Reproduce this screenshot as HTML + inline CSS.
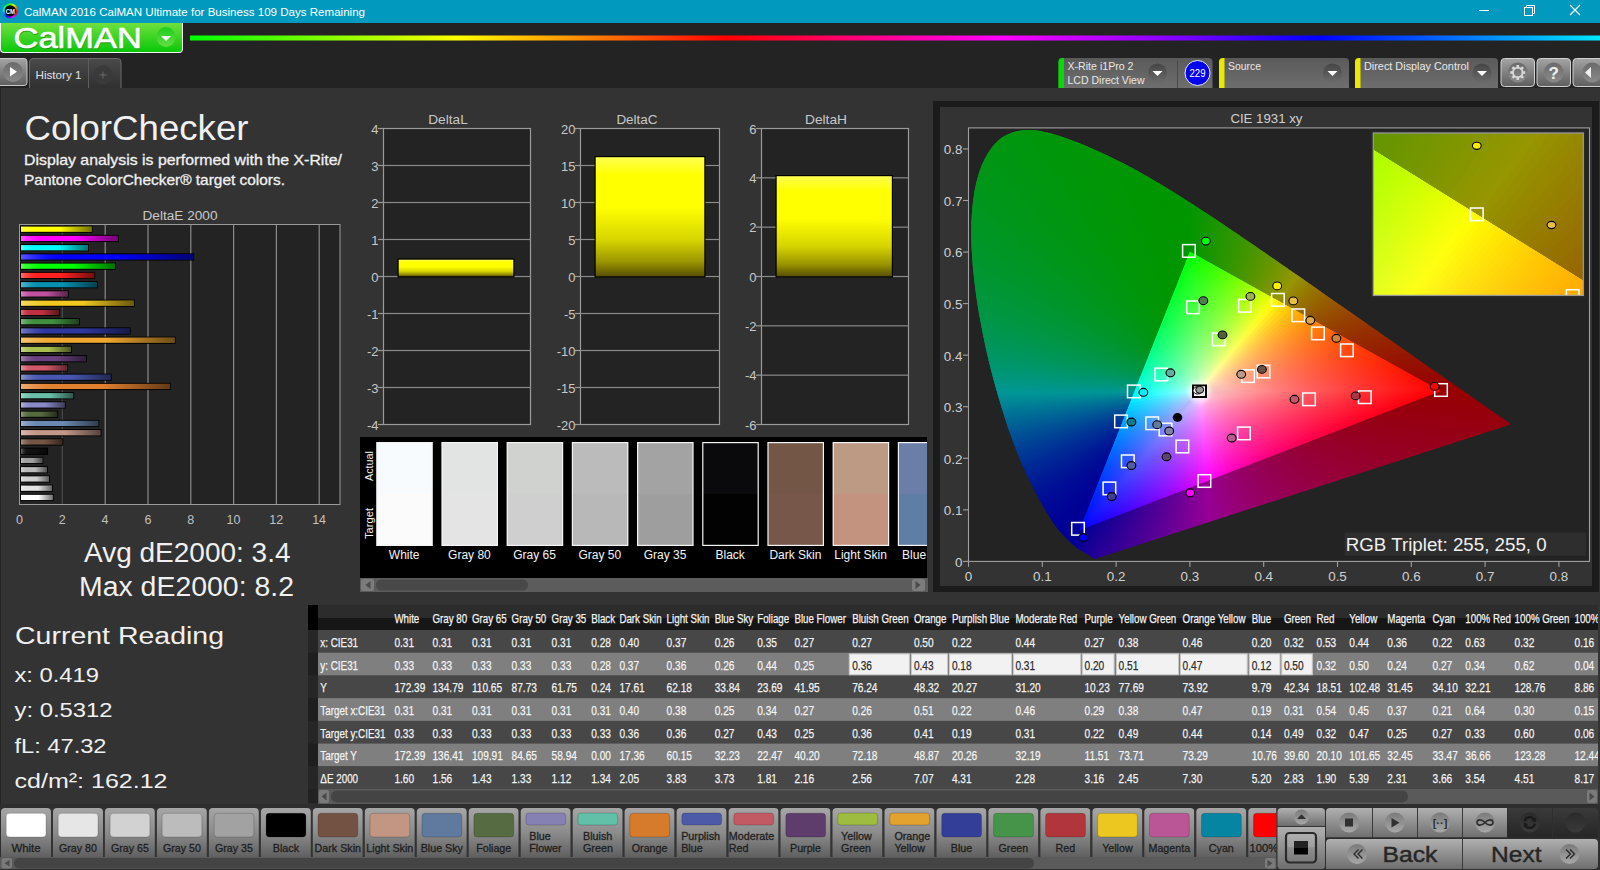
<!DOCTYPE html><html><head><meta charset="utf-8"><style>html,body{margin:0;padding:0;background:#232323;overflow:hidden}svg{display:block;font-family:"Liberation Sans",sans-serif}</style></head><body>
<svg width="1600" height="870" viewBox="0 0 1600 870"><defs><linearGradient id="cmring" x1="0" y1="0" x2="1" y2="1"><stop offset="0" stop-color="#00c000"/><stop offset="0.35" stop-color="#e0e000"/><stop offset="0.6" stop-color="#ff2060"/><stop offset="1" stop-color="#4040ff"/></linearGradient>
<linearGradient id="gbtn" x1="0" y1="0" x2="0" y2="1"><stop offset="0" stop-color="#6fe03f"/><stop offset="1" stop-color="#08c808"/></linearGradient>
<linearGradient id="gdd" x1="0" y1="0" x2="0" y2="1"><stop offset="0" stop-color="#1ccc1c"/><stop offset="1" stop-color="#66de44"/></linearGradient>
<linearGradient id="rainbow" gradientUnits="userSpaceOnUse" x1="190" y1="0" x2="1600" y2="0"><stop offset="0" stop-color="#00ff00"/><stop offset="0.19" stop-color="#ffff00"/><stop offset="0.38" stop-color="#ff0000"/><stop offset="0.575" stop-color="#ff00ff"/><stop offset="0.70" stop-color="#8000ff"/><stop offset="0.80" stop-color="#0000ff"/><stop offset="1" stop-color="#00e8ff"/></linearGradient>
<linearGradient id="btn1" x1="0" y1="0" x2="0" y2="1"><stop offset="0" stop-color="#a4a4a4"/><stop offset="1" stop-color="#5e5e5e"/></linearGradient>
<linearGradient id="btnc" x1="0" y1="0" x2="0" y2="1"><stop offset="0" stop-color="#6a6a6a"/><stop offset="1" stop-color="#8a8a8a"/></linearGradient>
<linearGradient id="tab" x1="0" y1="0" x2="0" y2="1"><stop offset="0" stop-color="#4a4a4a"/><stop offset="1" stop-color="#303030"/></linearGradient>
<linearGradient id="dd" x1="0" y1="0" x2="0" y2="1"><stop offset="0" stop-color="#5a5a5a"/><stop offset="1" stop-color="#6e6e6e"/></linearGradient>
<linearGradient id="ddc" x1="0" y1="0" x2="0" y2="1"><stop offset="0" stop-color="#454545"/><stop offset="1" stop-color="#6a6a6a"/></linearGradient>
<linearGradient id="bg0" x1="0" y1="0" x2="1" y2="0"><stop offset="0" stop-color="#fff" stop-opacity="0.35"/><stop offset="0.25" stop-color="#ffff00" stop-opacity="0"/><stop offset="0.55" stop-color="#000" stop-opacity="0"/><stop offset="1" stop-color="#000" stop-opacity="0.55"/></linearGradient>
<linearGradient id="bg1" x1="0" y1="0" x2="1" y2="0"><stop offset="0" stop-color="#fff" stop-opacity="0.35"/><stop offset="0.25" stop-color="#ff00ff" stop-opacity="0"/><stop offset="0.55" stop-color="#000" stop-opacity="0"/><stop offset="1" stop-color="#000" stop-opacity="0.55"/></linearGradient>
<linearGradient id="bg2" x1="0" y1="0" x2="1" y2="0"><stop offset="0" stop-color="#fff" stop-opacity="0.35"/><stop offset="0.25" stop-color="#00ffff" stop-opacity="0"/><stop offset="0.55" stop-color="#000" stop-opacity="0"/><stop offset="1" stop-color="#000" stop-opacity="0.55"/></linearGradient>
<linearGradient id="bg3" x1="0" y1="0" x2="1" y2="0"><stop offset="0" stop-color="#fff" stop-opacity="0.35"/><stop offset="0.25" stop-color="#0000ff" stop-opacity="0"/><stop offset="0.55" stop-color="#000" stop-opacity="0"/><stop offset="1" stop-color="#000" stop-opacity="0.55"/></linearGradient>
<linearGradient id="bg4" x1="0" y1="0" x2="1" y2="0"><stop offset="0" stop-color="#fff" stop-opacity="0.35"/><stop offset="0.25" stop-color="#00ff00" stop-opacity="0"/><stop offset="0.55" stop-color="#000" stop-opacity="0"/><stop offset="1" stop-color="#000" stop-opacity="0.55"/></linearGradient>
<linearGradient id="bg5" x1="0" y1="0" x2="1" y2="0"><stop offset="0" stop-color="#fff" stop-opacity="0.35"/><stop offset="0.25" stop-color="#ff2020" stop-opacity="0"/><stop offset="0.55" stop-color="#000" stop-opacity="0"/><stop offset="1" stop-color="#000" stop-opacity="0.55"/></linearGradient>
<linearGradient id="bg6" x1="0" y1="0" x2="1" y2="0"><stop offset="0" stop-color="#fff" stop-opacity="0.35"/><stop offset="0.25" stop-color="#0890b0" stop-opacity="0"/><stop offset="0.55" stop-color="#000" stop-opacity="0"/><stop offset="1" stop-color="#000" stop-opacity="0.55"/></linearGradient>
<linearGradient id="bg7" x1="0" y1="0" x2="1" y2="0"><stop offset="0" stop-color="#fff" stop-opacity="0.35"/><stop offset="0.25" stop-color="#c050a0" stop-opacity="0"/><stop offset="0.55" stop-color="#000" stop-opacity="0"/><stop offset="1" stop-color="#000" stop-opacity="0.55"/></linearGradient>
<linearGradient id="bg8" x1="0" y1="0" x2="1" y2="0"><stop offset="0" stop-color="#fff" stop-opacity="0.35"/><stop offset="0.25" stop-color="#f0c820" stop-opacity="0"/><stop offset="0.55" stop-color="#000" stop-opacity="0"/><stop offset="1" stop-color="#000" stop-opacity="0.55"/></linearGradient>
<linearGradient id="bg9" x1="0" y1="0" x2="1" y2="0"><stop offset="0" stop-color="#fff" stop-opacity="0.35"/><stop offset="0.25" stop-color="#c03040" stop-opacity="0"/><stop offset="0.55" stop-color="#000" stop-opacity="0"/><stop offset="1" stop-color="#000" stop-opacity="0.55"/></linearGradient>
<linearGradient id="bg10" x1="0" y1="0" x2="1" y2="0"><stop offset="0" stop-color="#fff" stop-opacity="0.35"/><stop offset="0.25" stop-color="#409040" stop-opacity="0"/><stop offset="0.55" stop-color="#000" stop-opacity="0"/><stop offset="1" stop-color="#000" stop-opacity="0.55"/></linearGradient>
<linearGradient id="bg11" x1="0" y1="0" x2="1" y2="0"><stop offset="0" stop-color="#fff" stop-opacity="0.35"/><stop offset="0.25" stop-color="#3038a0" stop-opacity="0"/><stop offset="0.55" stop-color="#000" stop-opacity="0"/><stop offset="1" stop-color="#000" stop-opacity="0.55"/></linearGradient>
<linearGradient id="bg12" x1="0" y1="0" x2="1" y2="0"><stop offset="0" stop-color="#fff" stop-opacity="0.35"/><stop offset="0.25" stop-color="#f0a830" stop-opacity="0"/><stop offset="0.55" stop-color="#000" stop-opacity="0"/><stop offset="1" stop-color="#000" stop-opacity="0.55"/></linearGradient>
<linearGradient id="bg13" x1="0" y1="0" x2="1" y2="0"><stop offset="0" stop-color="#fff" stop-opacity="0.35"/><stop offset="0.25" stop-color="#a8c050" stop-opacity="0"/><stop offset="0.55" stop-color="#000" stop-opacity="0"/><stop offset="1" stop-color="#000" stop-opacity="0.55"/></linearGradient>
<linearGradient id="bg14" x1="0" y1="0" x2="1" y2="0"><stop offset="0" stop-color="#fff" stop-opacity="0.35"/><stop offset="0.25" stop-color="#6a4080" stop-opacity="0"/><stop offset="0.55" stop-color="#000" stop-opacity="0"/><stop offset="1" stop-color="#000" stop-opacity="0.55"/></linearGradient>
<linearGradient id="bg15" x1="0" y1="0" x2="1" y2="0"><stop offset="0" stop-color="#fff" stop-opacity="0.35"/><stop offset="0.25" stop-color="#d05868" stop-opacity="0"/><stop offset="0.55" stop-color="#000" stop-opacity="0"/><stop offset="1" stop-color="#000" stop-opacity="0.55"/></linearGradient>
<linearGradient id="bg16" x1="0" y1="0" x2="1" y2="0"><stop offset="0" stop-color="#fff" stop-opacity="0.35"/><stop offset="0.25" stop-color="#4858b0" stop-opacity="0"/><stop offset="0.55" stop-color="#000" stop-opacity="0"/><stop offset="1" stop-color="#000" stop-opacity="0.55"/></linearGradient>
<linearGradient id="bg17" x1="0" y1="0" x2="1" y2="0"><stop offset="0" stop-color="#fff" stop-opacity="0.35"/><stop offset="0.25" stop-color="#e08030" stop-opacity="0"/><stop offset="0.55" stop-color="#000" stop-opacity="0"/><stop offset="1" stop-color="#000" stop-opacity="0.55"/></linearGradient>
<linearGradient id="bg18" x1="0" y1="0" x2="1" y2="0"><stop offset="0" stop-color="#fff" stop-opacity="0.35"/><stop offset="0.25" stop-color="#68c0a8" stop-opacity="0"/><stop offset="0.55" stop-color="#000" stop-opacity="0"/><stop offset="1" stop-color="#000" stop-opacity="0.55"/></linearGradient>
<linearGradient id="bg19" x1="0" y1="0" x2="1" y2="0"><stop offset="0" stop-color="#fff" stop-opacity="0.35"/><stop offset="0.25" stop-color="#8a8ac8" stop-opacity="0"/><stop offset="0.55" stop-color="#000" stop-opacity="0"/><stop offset="1" stop-color="#000" stop-opacity="0.55"/></linearGradient>
<linearGradient id="bg20" x1="0" y1="0" x2="1" y2="0"><stop offset="0" stop-color="#fff" stop-opacity="0.35"/><stop offset="0.25" stop-color="#566a40" stop-opacity="0"/><stop offset="0.55" stop-color="#000" stop-opacity="0"/><stop offset="1" stop-color="#000" stop-opacity="0.55"/></linearGradient>
<linearGradient id="bg21" x1="0" y1="0" x2="1" y2="0"><stop offset="0" stop-color="#fff" stop-opacity="0.35"/><stop offset="0.25" stop-color="#6a88b0" stop-opacity="0"/><stop offset="0.55" stop-color="#000" stop-opacity="0"/><stop offset="1" stop-color="#000" stop-opacity="0.55"/></linearGradient>
<linearGradient id="bg22" x1="0" y1="0" x2="1" y2="0"><stop offset="0" stop-color="#fff" stop-opacity="0.35"/><stop offset="0.25" stop-color="#c49888" stop-opacity="0"/><stop offset="0.55" stop-color="#000" stop-opacity="0"/><stop offset="1" stop-color="#000" stop-opacity="0.55"/></linearGradient>
<linearGradient id="bg23" x1="0" y1="0" x2="1" y2="0"><stop offset="0" stop-color="#fff" stop-opacity="0.35"/><stop offset="0.25" stop-color="#775545" stop-opacity="0"/><stop offset="0.55" stop-color="#000" stop-opacity="0"/><stop offset="1" stop-color="#000" stop-opacity="0.55"/></linearGradient>
<linearGradient id="bg24" x1="0" y1="0" x2="1" y2="0"><stop offset="0" stop-color="#fff" stop-opacity="0.35"/><stop offset="0.25" stop-color="#111111" stop-opacity="0"/><stop offset="0.55" stop-color="#000" stop-opacity="0"/><stop offset="1" stop-color="#000" stop-opacity="0.55"/></linearGradient>
<linearGradient id="bg25" x1="0" y1="0" x2="1" y2="0"><stop offset="0" stop-color="#fff" stop-opacity="0.35"/><stop offset="0.25" stop-color="#a0a0a0" stop-opacity="0"/><stop offset="0.55" stop-color="#000" stop-opacity="0"/><stop offset="1" stop-color="#000" stop-opacity="0.55"/></linearGradient>
<linearGradient id="bg26" x1="0" y1="0" x2="1" y2="0"><stop offset="0" stop-color="#fff" stop-opacity="0.35"/><stop offset="0.25" stop-color="#bababa" stop-opacity="0"/><stop offset="0.55" stop-color="#000" stop-opacity="0"/><stop offset="1" stop-color="#000" stop-opacity="0.55"/></linearGradient>
<linearGradient id="bg27" x1="0" y1="0" x2="1" y2="0"><stop offset="0" stop-color="#fff" stop-opacity="0.35"/><stop offset="0.25" stop-color="#d0d0d0" stop-opacity="0"/><stop offset="0.55" stop-color="#000" stop-opacity="0"/><stop offset="1" stop-color="#000" stop-opacity="0.55"/></linearGradient>
<linearGradient id="bg28" x1="0" y1="0" x2="1" y2="0"><stop offset="0" stop-color="#fff" stop-opacity="0.35"/><stop offset="0.25" stop-color="#e4e4e4" stop-opacity="0"/><stop offset="0.55" stop-color="#000" stop-opacity="0"/><stop offset="1" stop-color="#000" stop-opacity="0.55"/></linearGradient>
<linearGradient id="bg29" x1="0" y1="0" x2="1" y2="0"><stop offset="0" stop-color="#fff" stop-opacity="0.35"/><stop offset="0.25" stop-color="#ffffff" stop-opacity="0"/><stop offset="0.55" stop-color="#000" stop-opacity="0"/><stop offset="1" stop-color="#000" stop-opacity="0.55"/></linearGradient>
<linearGradient id="ybar" x1="0" y1="0" x2="0" y2="1"><stop offset="0" stop-color="#ffff50"/><stop offset="0.15" stop-color="#ffff00"/><stop offset="0.42" stop-color="#ffff00"/><stop offset="0.7" stop-color="#d6d400"/><stop offset="0.88" stop-color="#9a9400"/><stop offset="1" stop-color="#585000"/></linearGradient>
<clipPath id="swclip"><rect x="360" y="437" width="567" height="141"/></clipPath>
<clipPath id="locclip"><path d="M1095.0 558.8 L1094.8 558.7 L1094.5 558.5 L1094.1 558.3 L1093.6 558.1 L1093.1 557.8 L1092.6 557.5 L1092.0 557.2 L1091.4 556.7 L1090.7 556.3 L1089.8 555.8 L1088.9 555.2 L1087.9 554.6 L1086.7 553.9 L1085.5 553.1 L1084.1 552.2 L1082.5 551.3 L1080.9 550.4 L1079.0 549.3 L1077.0 547.9 L1074.8 546.0 L1072.1 543.7 L1069.1 540.8 L1065.9 537.8 L1062.9 534.6 L1060.1 531.5 L1057.7 528.7 L1055.7 526.0 L1053.7 523.2 L1051.6 520.1 L1049.4 516.5 L1046.9 512.5 L1044.3 508.2 L1041.6 503.5 L1038.8 498.4 L1035.9 492.8 L1032.8 486.7 L1029.5 480.2 L1026.1 473.2 L1022.6 465.7 L1019.2 457.6 L1015.8 448.9 L1012.3 439.6 L1008.8 429.9 L1005.4 419.6 L1002.0 408.8 L998.6 397.5 L995.2 385.5 L991.9 373.2 L988.7 360.6 L985.8 348.0 L983.1 335.1 L980.6 322.0 L978.2 308.8 L976.2 295.7 L974.6 282.9 L973.2 270.4 L972.2 258.0 L971.5 245.8 L971.2 234.0 L971.4 222.7 L972.0 211.9 L973.0 201.4 L974.5 191.4 L976.4 182.0 L978.8 173.4 L981.6 165.6 L985.0 158.4 L988.7 151.9 L992.8 146.2 L997.2 141.4 L1001.9 137.6 L1006.9 134.7 L1012.3 132.6 L1017.8 131.1 L1023.3 130.2 L1029.0 129.9 L1034.9 130.3 L1040.8 131.3 L1046.8 132.6 L1052.8 134.1 L1058.8 135.7 L1064.8 137.7 L1070.8 139.9 L1076.8 142.3 L1082.7 144.6 L1088.4 146.9 L1094.1 149.4 L1099.7 151.9 L1105.3 154.5 L1110.9 157.2 L1116.4 159.9 L1121.8 162.6 L1127.2 165.5 L1132.6 168.3 L1137.9 171.3 L1143.3 174.3 L1148.7 177.3 L1154.0 180.4 L1159.3 183.6 L1164.7 186.8 L1170.0 190.0 L1175.3 193.3 L1180.5 196.6 L1185.8 200.0 L1191.1 203.3 L1196.4 206.7 L1201.6 210.2 L1206.9 213.6 L1212.2 217.1 L1217.4 220.6 L1222.7 224.1 L1228.0 227.7 L1233.3 231.2 L1238.6 234.8 L1243.8 238.4 L1249.1 242.0 L1254.4 245.6 L1259.6 249.2 L1264.9 252.8 L1270.1 256.5 L1275.4 260.1 L1280.6 263.7 L1285.8 267.3 L1291.1 270.9 L1296.2 274.5 L1301.4 278.1 L1306.6 281.7 L1311.7 285.3 L1316.8 288.8 L1321.9 292.4 L1326.9 295.9 L1331.9 299.4 L1336.9 302.9 L1341.8 306.3 L1346.7 309.7 L1351.6 313.1 L1356.4 316.5 L1361.2 319.8 L1365.9 323.1 L1370.6 326.4 L1375.2 329.6 L1379.7 332.8 L1384.2 335.9 L1388.7 339.0 L1393.0 342.0 L1397.3 345.0 L1401.4 347.9 L1405.6 350.8 L1409.6 353.6 L1413.4 356.3 L1417.2 359.0 L1420.8 361.5 L1424.4 364.0 L1427.8 366.4 L1431.2 368.7 L1434.5 371.1 L1437.8 373.3 L1440.9 375.5 L1443.9 377.6 L1446.9 379.7 L1449.7 381.6 L1452.4 383.5 L1455.0 385.3 L1457.5 387.0 L1459.9 388.7 L1462.2 390.3 L1464.4 391.8 L1466.5 393.3 L1468.5 394.7 L1470.4 396.1 L1472.3 397.3 L1474.0 398.6 L1475.7 399.8 L1477.3 400.9 L1478.8 401.9 L1480.3 403.0 L1481.7 403.9 L1483.0 404.9 L1484.3 405.7 L1485.5 406.6 L1486.7 407.4 L1487.8 408.2 L1488.9 409.0 L1489.9 409.7 L1490.9 410.4 L1491.9 411.1 L1492.8 411.7 L1493.7 412.3 L1494.6 412.9 L1495.4 413.5 L1496.2 414.1 L1497.0 414.6 L1497.7 415.2 L1498.4 415.6 L1499.1 416.1 L1499.8 416.6 L1500.4 417.0 L1501.0 417.4 L1501.5 417.8 L1502.1 418.1 L1502.6 418.5 L1503.0 418.8 L1503.5 419.1 L1503.9 419.4 L1504.3 419.7 L1504.7 420.0 L1505.0 420.2 L1505.4 420.4 L1505.7 420.7 L1506.0 420.9 L1506.2 421.0 L1506.4 421.2 L1506.6 421.3 L1506.9 421.5 L1507.2 421.8 L1507.8 422.2 L1508.6 422.7 L1509.5 423.3 L1510.2 423.8 L1510.7 424.2 Z"/></clipPath>
<linearGradient id="w0" gradientUnits="userSpaceOnUse" x1="1199.27" y1="391.47" x2="1191.99" y2="252.66"><stop offset="0" stop-color="#ffffff"/><stop offset="0.08" stop-color="#c8ffc7"/><stop offset="0.2" stop-color="#9fff9e"/><stop offset="0.35" stop-color="#79ff77"/><stop offset="0.5" stop-color="#59ff57"/><stop offset="0.7" stop-color="#34ff31"/><stop offset="0.85" stop-color="#1bff18"/><stop offset="1.0" stop-color="#04ff00"/></linearGradient>
<linearGradient id="w1" gradientUnits="userSpaceOnUse" x1="1199.27" y1="391.47" x2="1196.17" y2="254.99"><stop offset="0" stop-color="#ffffff"/><stop offset="0.08" stop-color="#caffc7"/><stop offset="0.2" stop-color="#a3ff9e"/><stop offset="0.35" stop-color="#7eff77"/><stop offset="0.5" stop-color="#5fff57"/><stop offset="0.7" stop-color="#3bff31"/><stop offset="0.85" stop-color="#23ff18"/><stop offset="1.0" stop-color="#0cff00"/></linearGradient>
<linearGradient id="w2" gradientUnits="userSpaceOnUse" x1="1199.27" y1="391.47" x2="1200.36" y2="257.31"><stop offset="0" stop-color="#ffffff"/><stop offset="0.08" stop-color="#cbffc7"/><stop offset="0.2" stop-color="#a6ff9e"/><stop offset="0.35" stop-color="#82ff77"/><stop offset="0.5" stop-color="#64ff57"/><stop offset="0.7" stop-color="#42ff31"/><stop offset="0.85" stop-color="#2aff18"/><stop offset="1.0" stop-color="#15ff00"/></linearGradient>
<linearGradient id="w3" gradientUnits="userSpaceOnUse" x1="1199.27" y1="391.47" x2="1204.54" y2="259.63"><stop offset="0" stop-color="#ffffff"/><stop offset="0.08" stop-color="#cdffc7"/><stop offset="0.2" stop-color="#a9ff9e"/><stop offset="0.35" stop-color="#87ff77"/><stop offset="0.5" stop-color="#6aff57"/><stop offset="0.7" stop-color="#49ff31"/><stop offset="0.85" stop-color="#32ff18"/><stop offset="1.0" stop-color="#1dff00"/></linearGradient>
<linearGradient id="w4" gradientUnits="userSpaceOnUse" x1="1199.27" y1="391.47" x2="1208.72" y2="261.96"><stop offset="0" stop-color="#ffffff"/><stop offset="0.08" stop-color="#cfffc7"/><stop offset="0.2" stop-color="#acff9e"/><stop offset="0.35" stop-color="#8cff77"/><stop offset="0.5" stop-color="#70ff57"/><stop offset="0.7" stop-color="#50ff31"/><stop offset="0.85" stop-color="#3aff18"/><stop offset="1.0" stop-color="#26ff00"/></linearGradient>
<linearGradient id="w5" gradientUnits="userSpaceOnUse" x1="1199.27" y1="391.47" x2="1212.90" y2="264.28"><stop offset="0" stop-color="#ffffff"/><stop offset="0.08" stop-color="#d1ffc7"/><stop offset="0.2" stop-color="#b0ff9e"/><stop offset="0.35" stop-color="#91ff77"/><stop offset="0.5" stop-color="#76ff57"/><stop offset="0.7" stop-color="#58ff31"/><stop offset="0.85" stop-color="#43ff18"/><stop offset="1.0" stop-color="#30ff00"/></linearGradient>
<linearGradient id="w6" gradientUnits="userSpaceOnUse" x1="1199.27" y1="391.47" x2="1217.08" y2="266.61"><stop offset="0" stop-color="#ffffff"/><stop offset="0.08" stop-color="#d4ffc7"/><stop offset="0.2" stop-color="#b4ff9e"/><stop offset="0.35" stop-color="#96ff77"/><stop offset="0.5" stop-color="#7dff57"/><stop offset="0.7" stop-color="#5fff31"/><stop offset="0.85" stop-color="#4cff18"/><stop offset="1.0" stop-color="#39ff00"/></linearGradient>
<linearGradient id="w7" gradientUnits="userSpaceOnUse" x1="1199.27" y1="391.47" x2="1221.27" y2="268.93"><stop offset="0" stop-color="#ffffff"/><stop offset="0.08" stop-color="#d6ffc7"/><stop offset="0.2" stop-color="#b8ff9e"/><stop offset="0.35" stop-color="#9bff77"/><stop offset="0.5" stop-color="#83ff57"/><stop offset="0.7" stop-color="#68ff31"/><stop offset="0.85" stop-color="#55ff18"/><stop offset="1.0" stop-color="#43ff00"/></linearGradient>
<linearGradient id="w8" gradientUnits="userSpaceOnUse" x1="1199.27" y1="391.47" x2="1225.45" y2="271.26"><stop offset="0" stop-color="#ffffff"/><stop offset="0.08" stop-color="#d8ffc7"/><stop offset="0.2" stop-color="#bcff9e"/><stop offset="0.35" stop-color="#a1ff77"/><stop offset="0.5" stop-color="#8aff57"/><stop offset="0.7" stop-color="#70ff31"/><stop offset="0.85" stop-color="#5eff18"/><stop offset="1.0" stop-color="#4eff00"/></linearGradient>
<linearGradient id="w9" gradientUnits="userSpaceOnUse" x1="1199.27" y1="391.47" x2="1229.63" y2="273.58"><stop offset="0" stop-color="#ffffff"/><stop offset="0.08" stop-color="#daffc7"/><stop offset="0.2" stop-color="#c0ff9e"/><stop offset="0.35" stop-color="#a6ff77"/><stop offset="0.5" stop-color="#91ff57"/><stop offset="0.7" stop-color="#79ff31"/><stop offset="0.85" stop-color="#68ff18"/><stop offset="1.0" stop-color="#59ff00"/></linearGradient>
<linearGradient id="w10" gradientUnits="userSpaceOnUse" x1="1199.27" y1="391.47" x2="1233.81" y2="275.90"><stop offset="0" stop-color="#ffffff"/><stop offset="0.08" stop-color="#ddffc7"/><stop offset="0.2" stop-color="#c4ff9e"/><stop offset="0.35" stop-color="#acff77"/><stop offset="0.5" stop-color="#99ff57"/><stop offset="0.7" stop-color="#82ff31"/><stop offset="0.85" stop-color="#72ff18"/><stop offset="1.0" stop-color="#64ff00"/></linearGradient>
<linearGradient id="w11" gradientUnits="userSpaceOnUse" x1="1199.27" y1="391.47" x2="1237.99" y2="278.23"><stop offset="0" stop-color="#ffffff"/><stop offset="0.08" stop-color="#e0ffc7"/><stop offset="0.2" stop-color="#c8ff9e"/><stop offset="0.35" stop-color="#b3ff77"/><stop offset="0.5" stop-color="#a1ff57"/><stop offset="0.7" stop-color="#8bff31"/><stop offset="0.85" stop-color="#7dff18"/><stop offset="1.0" stop-color="#70ff00"/></linearGradient>
<linearGradient id="w12" gradientUnits="userSpaceOnUse" x1="1199.27" y1="391.47" x2="1242.17" y2="280.55"><stop offset="0" stop-color="#ffffff"/><stop offset="0.08" stop-color="#e2ffc7"/><stop offset="0.2" stop-color="#cdff9e"/><stop offset="0.35" stop-color="#b9ff77"/><stop offset="0.5" stop-color="#a9ff57"/><stop offset="0.7" stop-color="#95ff31"/><stop offset="0.85" stop-color="#88ff18"/><stop offset="1.0" stop-color="#7cff00"/></linearGradient>
<linearGradient id="w13" gradientUnits="userSpaceOnUse" x1="1199.27" y1="391.47" x2="1246.36" y2="282.88"><stop offset="0" stop-color="#ffffff"/><stop offset="0.08" stop-color="#e5ffc7"/><stop offset="0.2" stop-color="#d2ff9e"/><stop offset="0.35" stop-color="#c0ff77"/><stop offset="0.5" stop-color="#b1ff57"/><stop offset="0.7" stop-color="#a0ff31"/><stop offset="0.85" stop-color="#94ff18"/><stop offset="1.0" stop-color="#89ff00"/></linearGradient>
<linearGradient id="w14" gradientUnits="userSpaceOnUse" x1="1199.27" y1="391.47" x2="1250.54" y2="285.20"><stop offset="0" stop-color="#ffffff"/><stop offset="0.08" stop-color="#e8ffc7"/><stop offset="0.2" stop-color="#d7ff9e"/><stop offset="0.35" stop-color="#c7ff77"/><stop offset="0.5" stop-color="#baff57"/><stop offset="0.7" stop-color="#aaff31"/><stop offset="0.85" stop-color="#a0ff18"/><stop offset="1.0" stop-color="#96ff00"/></linearGradient>
<linearGradient id="w15" gradientUnits="userSpaceOnUse" x1="1199.27" y1="391.47" x2="1254.72" y2="287.53"><stop offset="0" stop-color="#ffffff"/><stop offset="0.08" stop-color="#ebffc7"/><stop offset="0.2" stop-color="#dcff9e"/><stop offset="0.35" stop-color="#cfff77"/><stop offset="0.5" stop-color="#c3ff57"/><stop offset="0.7" stop-color="#b6ff31"/><stop offset="0.85" stop-color="#adff18"/><stop offset="1.0" stop-color="#a4ff00"/></linearGradient>
<linearGradient id="w16" gradientUnits="userSpaceOnUse" x1="1199.27" y1="391.47" x2="1258.90" y2="289.85"><stop offset="0" stop-color="#ffffff"/><stop offset="0.08" stop-color="#eeffc7"/><stop offset="0.2" stop-color="#e2ff9e"/><stop offset="0.35" stop-color="#d6ff77"/><stop offset="0.5" stop-color="#cdff57"/><stop offset="0.7" stop-color="#c2ff31"/><stop offset="0.85" stop-color="#baff18"/><stop offset="1.0" stop-color="#b3ff00"/></linearGradient>
<linearGradient id="w17" gradientUnits="userSpaceOnUse" x1="1199.27" y1="391.47" x2="1263.09" y2="292.17"><stop offset="0" stop-color="#ffffff"/><stop offset="0.08" stop-color="#f2ffc7"/><stop offset="0.2" stop-color="#e8ff9e"/><stop offset="0.35" stop-color="#dfff77"/><stop offset="0.5" stop-color="#d7ff57"/><stop offset="0.7" stop-color="#ceff31"/><stop offset="0.85" stop-color="#c8ff18"/><stop offset="1.0" stop-color="#c2ff00"/></linearGradient>
<linearGradient id="w18" gradientUnits="userSpaceOnUse" x1="1199.27" y1="391.47" x2="1267.27" y2="294.50"><stop offset="0" stop-color="#ffffff"/><stop offset="0.08" stop-color="#f5ffc7"/><stop offset="0.2" stop-color="#eeff9e"/><stop offset="0.35" stop-color="#e7ff77"/><stop offset="0.5" stop-color="#e1ff57"/><stop offset="0.7" stop-color="#dbff31"/><stop offset="0.85" stop-color="#d6ff18"/><stop offset="1.0" stop-color="#d2ff00"/></linearGradient>
<linearGradient id="w19" gradientUnits="userSpaceOnUse" x1="1199.27" y1="391.47" x2="1271.45" y2="296.82"><stop offset="0" stop-color="#ffffff"/><stop offset="0.08" stop-color="#f9ffc7"/><stop offset="0.2" stop-color="#f4ff9e"/><stop offset="0.35" stop-color="#f0ff77"/><stop offset="0.5" stop-color="#edff57"/><stop offset="0.7" stop-color="#e8ff31"/><stop offset="0.85" stop-color="#e6ff18"/><stop offset="1.0" stop-color="#e3ff00"/></linearGradient>
<linearGradient id="w20" gradientUnits="userSpaceOnUse" x1="1199.27" y1="391.47" x2="1275.63" y2="299.15"><stop offset="0" stop-color="#ffffff"/><stop offset="0.08" stop-color="#fdffc7"/><stop offset="0.2" stop-color="#fbff9e"/><stop offset="0.35" stop-color="#faff77"/><stop offset="0.5" stop-color="#f8ff57"/><stop offset="0.7" stop-color="#f7ff31"/><stop offset="0.85" stop-color="#f6ff18"/><stop offset="1.0" stop-color="#f5ff00"/></linearGradient>
<linearGradient id="w21" gradientUnits="userSpaceOnUse" x1="1199.27" y1="391.47" x2="1279.81" y2="301.47"><stop offset="0" stop-color="#ffffff"/><stop offset="0.08" stop-color="#fffdc7"/><stop offset="0.2" stop-color="#fffc9e"/><stop offset="0.35" stop-color="#fffb77"/><stop offset="0.5" stop-color="#fffa57"/><stop offset="0.7" stop-color="#fff831"/><stop offset="0.85" stop-color="#fff818"/><stop offset="1.0" stop-color="#fff700"/></linearGradient>
<linearGradient id="w22" gradientUnits="userSpaceOnUse" x1="1199.27" y1="391.47" x2="1284.00" y2="303.80"><stop offset="0" stop-color="#ffffff"/><stop offset="0.08" stop-color="#fff9c7"/><stop offset="0.2" stop-color="#fff59e"/><stop offset="0.35" stop-color="#fff277"/><stop offset="0.5" stop-color="#ffee57"/><stop offset="0.7" stop-color="#ffeb31"/><stop offset="0.85" stop-color="#ffe818"/><stop offset="1.0" stop-color="#ffe600"/></linearGradient>
<linearGradient id="w23" gradientUnits="userSpaceOnUse" x1="1199.27" y1="391.47" x2="1288.18" y2="306.12"><stop offset="0" stop-color="#ffffff"/><stop offset="0.08" stop-color="#fff6c7"/><stop offset="0.2" stop-color="#ffef9e"/><stop offset="0.35" stop-color="#ffe977"/><stop offset="0.5" stop-color="#ffe457"/><stop offset="0.7" stop-color="#ffde31"/><stop offset="0.85" stop-color="#ffda18"/><stop offset="1.0" stop-color="#ffd600"/></linearGradient>
<linearGradient id="w24" gradientUnits="userSpaceOnUse" x1="1199.27" y1="391.47" x2="1292.36" y2="308.44"><stop offset="0" stop-color="#ffffff"/><stop offset="0.08" stop-color="#fff3c7"/><stop offset="0.2" stop-color="#ffea9e"/><stop offset="0.35" stop-color="#ffe277"/><stop offset="0.5" stop-color="#ffdb57"/><stop offset="0.7" stop-color="#ffd231"/><stop offset="0.85" stop-color="#ffcd18"/><stop offset="1.0" stop-color="#ffc800"/></linearGradient>
<linearGradient id="w25" gradientUnits="userSpaceOnUse" x1="1199.27" y1="391.47" x2="1296.54" y2="310.77"><stop offset="0" stop-color="#ffffff"/><stop offset="0.08" stop-color="#fff0c7"/><stop offset="0.2" stop-color="#ffe59e"/><stop offset="0.35" stop-color="#ffdb77"/><stop offset="0.5" stop-color="#ffd257"/><stop offset="0.7" stop-color="#ffc831"/><stop offset="0.85" stop-color="#ffc118"/><stop offset="1.0" stop-color="#ffbb00"/></linearGradient>
<linearGradient id="w26" gradientUnits="userSpaceOnUse" x1="1199.27" y1="391.47" x2="1300.72" y2="313.09"><stop offset="0" stop-color="#ffffff"/><stop offset="0.08" stop-color="#ffedc7"/><stop offset="0.2" stop-color="#ffe09e"/><stop offset="0.35" stop-color="#ffd477"/><stop offset="0.5" stop-color="#ffca57"/><stop offset="0.7" stop-color="#ffbe31"/><stop offset="0.85" stop-color="#ffb618"/><stop offset="1.0" stop-color="#ffae00"/></linearGradient>
<linearGradient id="w27" gradientUnits="userSpaceOnUse" x1="1199.27" y1="391.47" x2="1304.90" y2="315.42"><stop offset="0" stop-color="#ffffff"/><stop offset="0.08" stop-color="#ffebc7"/><stop offset="0.2" stop-color="#ffdc9e"/><stop offset="0.35" stop-color="#ffce77"/><stop offset="0.5" stop-color="#ffc257"/><stop offset="0.7" stop-color="#ffb531"/><stop offset="0.85" stop-color="#ffac18"/><stop offset="1.0" stop-color="#ffa300"/></linearGradient>
<linearGradient id="w28" gradientUnits="userSpaceOnUse" x1="1199.27" y1="391.47" x2="1309.09" y2="317.74"><stop offset="0" stop-color="#ffffff"/><stop offset="0.08" stop-color="#ffe8c7"/><stop offset="0.2" stop-color="#ffd89e"/><stop offset="0.35" stop-color="#ffc877"/><stop offset="0.5" stop-color="#ffbb57"/><stop offset="0.7" stop-color="#ffac31"/><stop offset="0.85" stop-color="#ffa218"/><stop offset="1.0" stop-color="#ff9800"/></linearGradient>
<linearGradient id="w29" gradientUnits="userSpaceOnUse" x1="1199.27" y1="391.47" x2="1313.27" y2="320.07"><stop offset="0" stop-color="#ffffff"/><stop offset="0.08" stop-color="#ffe6c7"/><stop offset="0.2" stop-color="#ffd49e"/><stop offset="0.35" stop-color="#ffc377"/><stop offset="0.5" stop-color="#ffb557"/><stop offset="0.7" stop-color="#ffa431"/><stop offset="0.85" stop-color="#ff9918"/><stop offset="1.0" stop-color="#ff8f00"/></linearGradient>
<linearGradient id="w30" gradientUnits="userSpaceOnUse" x1="1199.27" y1="391.47" x2="1317.45" y2="322.39"><stop offset="0" stop-color="#ffffff"/><stop offset="0.08" stop-color="#ffe4c7"/><stop offset="0.2" stop-color="#ffd19e"/><stop offset="0.35" stop-color="#ffbe77"/><stop offset="0.5" stop-color="#ffaf57"/><stop offset="0.7" stop-color="#ff9d31"/><stop offset="0.85" stop-color="#ff9118"/><stop offset="1.0" stop-color="#ff8500"/></linearGradient>
<linearGradient id="w31" gradientUnits="userSpaceOnUse" x1="1199.27" y1="391.47" x2="1321.63" y2="324.71"><stop offset="0" stop-color="#ffffff"/><stop offset="0.08" stop-color="#ffe2c7"/><stop offset="0.2" stop-color="#ffcd9e"/><stop offset="0.35" stop-color="#ffba77"/><stop offset="0.5" stop-color="#ffa957"/><stop offset="0.7" stop-color="#ff9631"/><stop offset="0.85" stop-color="#ff8918"/><stop offset="1.0" stop-color="#ff7d00"/></linearGradient>
<linearGradient id="w32" gradientUnits="userSpaceOnUse" x1="1199.27" y1="391.47" x2="1325.82" y2="327.04"><stop offset="0" stop-color="#ffffff"/><stop offset="0.08" stop-color="#ffe1c7"/><stop offset="0.2" stop-color="#ffca9e"/><stop offset="0.35" stop-color="#ffb577"/><stop offset="0.5" stop-color="#ffa457"/><stop offset="0.7" stop-color="#ff8f31"/><stop offset="0.85" stop-color="#ff8218"/><stop offset="1.0" stop-color="#ff7500"/></linearGradient>
<linearGradient id="w33" gradientUnits="userSpaceOnUse" x1="1199.27" y1="391.47" x2="1330.00" y2="329.36"><stop offset="0" stop-color="#ffffff"/><stop offset="0.08" stop-color="#ffdfc7"/><stop offset="0.2" stop-color="#ffc79e"/><stop offset="0.35" stop-color="#ffb177"/><stop offset="0.5" stop-color="#ff9f57"/><stop offset="0.7" stop-color="#ff8931"/><stop offset="0.85" stop-color="#ff7b18"/><stop offset="1.0" stop-color="#ff6d00"/></linearGradient>
<linearGradient id="w34" gradientUnits="userSpaceOnUse" x1="1199.27" y1="391.47" x2="1334.18" y2="331.69"><stop offset="0" stop-color="#ffffff"/><stop offset="0.08" stop-color="#ffddc7"/><stop offset="0.2" stop-color="#ffc59e"/><stop offset="0.35" stop-color="#ffad77"/><stop offset="0.5" stop-color="#ff9a57"/><stop offset="0.7" stop-color="#ff8331"/><stop offset="0.85" stop-color="#ff7418"/><stop offset="1.0" stop-color="#ff6600"/></linearGradient>
<linearGradient id="w35" gradientUnits="userSpaceOnUse" x1="1199.27" y1="391.47" x2="1338.36" y2="334.01"><stop offset="0" stop-color="#ffffff"/><stop offset="0.08" stop-color="#ffdcc7"/><stop offset="0.2" stop-color="#ffc29e"/><stop offset="0.35" stop-color="#ffaa77"/><stop offset="0.5" stop-color="#ff9657"/><stop offset="0.7" stop-color="#ff7e31"/><stop offset="0.85" stop-color="#ff6e18"/><stop offset="1.0" stop-color="#ff5f00"/></linearGradient>
<linearGradient id="w36" gradientUnits="userSpaceOnUse" x1="1199.27" y1="391.47" x2="1342.54" y2="336.34"><stop offset="0" stop-color="#ffffff"/><stop offset="0.08" stop-color="#ffdac7"/><stop offset="0.2" stop-color="#ffc09e"/><stop offset="0.35" stop-color="#ffa677"/><stop offset="0.5" stop-color="#ff9157"/><stop offset="0.7" stop-color="#ff7931"/><stop offset="0.85" stop-color="#ff6818"/><stop offset="1.0" stop-color="#ff5900"/></linearGradient>
<linearGradient id="w37" gradientUnits="userSpaceOnUse" x1="1199.27" y1="391.47" x2="1346.72" y2="338.66"><stop offset="0" stop-color="#ffffff"/><stop offset="0.08" stop-color="#ffd9c7"/><stop offset="0.2" stop-color="#ffbd9e"/><stop offset="0.35" stop-color="#ffa377"/><stop offset="0.5" stop-color="#ff8d57"/><stop offset="0.7" stop-color="#ff7431"/><stop offset="0.85" stop-color="#ff6318"/><stop offset="1.0" stop-color="#ff5300"/></linearGradient>
<linearGradient id="w38" gradientUnits="userSpaceOnUse" x1="1199.27" y1="391.47" x2="1350.91" y2="340.98"><stop offset="0" stop-color="#ffffff"/><stop offset="0.08" stop-color="#ffd8c7"/><stop offset="0.2" stop-color="#ffbb9e"/><stop offset="0.35" stop-color="#ffa077"/><stop offset="0.5" stop-color="#ff8a57"/><stop offset="0.7" stop-color="#ff6f31"/><stop offset="0.85" stop-color="#ff5e18"/><stop offset="1.0" stop-color="#ff4d00"/></linearGradient>
<linearGradient id="w39" gradientUnits="userSpaceOnUse" x1="1199.27" y1="391.47" x2="1355.09" y2="343.31"><stop offset="0" stop-color="#ffffff"/><stop offset="0.08" stop-color="#ffd7c7"/><stop offset="0.2" stop-color="#ffb99e"/><stop offset="0.35" stop-color="#ff9d77"/><stop offset="0.5" stop-color="#ff8657"/><stop offset="0.7" stop-color="#ff6b31"/><stop offset="0.85" stop-color="#ff5918"/><stop offset="1.0" stop-color="#ff4800"/></linearGradient>
<linearGradient id="w40" gradientUnits="userSpaceOnUse" x1="1199.27" y1="391.47" x2="1359.27" y2="345.63"><stop offset="0" stop-color="#ffffff"/><stop offset="0.08" stop-color="#ffd6c7"/><stop offset="0.2" stop-color="#ffb79e"/><stop offset="0.35" stop-color="#ff9b77"/><stop offset="0.5" stop-color="#ff8357"/><stop offset="0.7" stop-color="#ff6731"/><stop offset="0.85" stop-color="#ff5418"/><stop offset="1.0" stop-color="#ff4200"/></linearGradient>
<linearGradient id="w41" gradientUnits="userSpaceOnUse" x1="1199.27" y1="391.47" x2="1363.45" y2="347.96"><stop offset="0" stop-color="#ffffff"/><stop offset="0.08" stop-color="#ffd4c7"/><stop offset="0.2" stop-color="#ffb59e"/><stop offset="0.35" stop-color="#ff9877"/><stop offset="0.5" stop-color="#ff7f57"/><stop offset="0.7" stop-color="#ff6331"/><stop offset="0.85" stop-color="#ff4f18"/><stop offset="1.0" stop-color="#ff3d00"/></linearGradient>
<linearGradient id="w42" gradientUnits="userSpaceOnUse" x1="1199.27" y1="391.47" x2="1367.63" y2="350.28"><stop offset="0" stop-color="#ffffff"/><stop offset="0.08" stop-color="#ffd3c7"/><stop offset="0.2" stop-color="#ffb49e"/><stop offset="0.35" stop-color="#ff9577"/><stop offset="0.5" stop-color="#ff7c57"/><stop offset="0.7" stop-color="#ff5f31"/><stop offset="0.85" stop-color="#ff4b18"/><stop offset="1.0" stop-color="#ff3900"/></linearGradient>
<linearGradient id="w43" gradientUnits="userSpaceOnUse" x1="1199.27" y1="391.47" x2="1371.82" y2="352.60"><stop offset="0" stop-color="#ffffff"/><stop offset="0.08" stop-color="#ffd2c7"/><stop offset="0.2" stop-color="#ffb29e"/><stop offset="0.35" stop-color="#ff9377"/><stop offset="0.5" stop-color="#ff7957"/><stop offset="0.7" stop-color="#ff5b31"/><stop offset="0.85" stop-color="#ff4718"/><stop offset="1.0" stop-color="#ff3400"/></linearGradient>
<linearGradient id="w44" gradientUnits="userSpaceOnUse" x1="1199.27" y1="391.47" x2="1376.00" y2="354.93"><stop offset="0" stop-color="#ffffff"/><stop offset="0.08" stop-color="#ffd2c7"/><stop offset="0.2" stop-color="#ffb09e"/><stop offset="0.35" stop-color="#ff9177"/><stop offset="0.5" stop-color="#ff7657"/><stop offset="0.7" stop-color="#ff5831"/><stop offset="0.85" stop-color="#ff4318"/><stop offset="1.0" stop-color="#ff3000"/></linearGradient>
<linearGradient id="w45" gradientUnits="userSpaceOnUse" x1="1199.27" y1="391.47" x2="1380.18" y2="357.25"><stop offset="0" stop-color="#ffffff"/><stop offset="0.08" stop-color="#ffd1c7"/><stop offset="0.2" stop-color="#ffaf9e"/><stop offset="0.35" stop-color="#ff8f77"/><stop offset="0.5" stop-color="#ff7457"/><stop offset="0.7" stop-color="#ff5531"/><stop offset="0.85" stop-color="#ff4018"/><stop offset="1.0" stop-color="#ff2c00"/></linearGradient>
<linearGradient id="w46" gradientUnits="userSpaceOnUse" x1="1199.27" y1="391.47" x2="1384.36" y2="359.58"><stop offset="0" stop-color="#ffffff"/><stop offset="0.08" stop-color="#ffd0c7"/><stop offset="0.2" stop-color="#ffad9e"/><stop offset="0.35" stop-color="#ff8d77"/><stop offset="0.5" stop-color="#ff7157"/><stop offset="0.7" stop-color="#ff5131"/><stop offset="0.85" stop-color="#ff3c18"/><stop offset="1.0" stop-color="#ff2800"/></linearGradient>
<linearGradient id="w47" gradientUnits="userSpaceOnUse" x1="1199.27" y1="391.47" x2="1388.55" y2="361.90"><stop offset="0" stop-color="#ffffff"/><stop offset="0.08" stop-color="#ffcfc7"/><stop offset="0.2" stop-color="#ffac9e"/><stop offset="0.35" stop-color="#ff8b77"/><stop offset="0.5" stop-color="#ff6f57"/><stop offset="0.7" stop-color="#ff4e31"/><stop offset="0.85" stop-color="#ff3918"/><stop offset="1.0" stop-color="#ff2400"/></linearGradient>
<linearGradient id="w48" gradientUnits="userSpaceOnUse" x1="1199.27" y1="391.47" x2="1392.73" y2="364.23"><stop offset="0" stop-color="#ffffff"/><stop offset="0.08" stop-color="#ffcec7"/><stop offset="0.2" stop-color="#ffaa9e"/><stop offset="0.35" stop-color="#ff8977"/><stop offset="0.5" stop-color="#ff6c57"/><stop offset="0.7" stop-color="#ff4c31"/><stop offset="0.85" stop-color="#ff3518"/><stop offset="1.0" stop-color="#ff2100"/></linearGradient>
<linearGradient id="w49" gradientUnits="userSpaceOnUse" x1="1199.27" y1="391.47" x2="1396.91" y2="366.55"><stop offset="0" stop-color="#ffffff"/><stop offset="0.08" stop-color="#ffcdc7"/><stop offset="0.2" stop-color="#ffa99e"/><stop offset="0.35" stop-color="#ff8777"/><stop offset="0.5" stop-color="#ff6a57"/><stop offset="0.7" stop-color="#ff4931"/><stop offset="0.85" stop-color="#ff3218"/><stop offset="1.0" stop-color="#ff1d00"/></linearGradient>
<linearGradient id="w50" gradientUnits="userSpaceOnUse" x1="1199.27" y1="391.47" x2="1401.09" y2="368.87"><stop offset="0" stop-color="#ffffff"/><stop offset="0.08" stop-color="#ffcdc7"/><stop offset="0.2" stop-color="#ffa89e"/><stop offset="0.35" stop-color="#ff8577"/><stop offset="0.5" stop-color="#ff6857"/><stop offset="0.7" stop-color="#ff4631"/><stop offset="0.85" stop-color="#ff2f18"/><stop offset="1.0" stop-color="#ff1a00"/></linearGradient>
<linearGradient id="w51" gradientUnits="userSpaceOnUse" x1="1199.27" y1="391.47" x2="1405.27" y2="371.20"><stop offset="0" stop-color="#ffffff"/><stop offset="0.08" stop-color="#ffccc7"/><stop offset="0.2" stop-color="#ffa79e"/><stop offset="0.35" stop-color="#ff8377"/><stop offset="0.5" stop-color="#ff6657"/><stop offset="0.7" stop-color="#ff4431"/><stop offset="0.85" stop-color="#ff2c18"/><stop offset="1.0" stop-color="#ff1700"/></linearGradient>
<linearGradient id="w52" gradientUnits="userSpaceOnUse" x1="1199.27" y1="391.47" x2="1409.45" y2="373.52"><stop offset="0" stop-color="#ffffff"/><stop offset="0.08" stop-color="#ffcbc7"/><stop offset="0.2" stop-color="#ffa59e"/><stop offset="0.35" stop-color="#ff8277"/><stop offset="0.5" stop-color="#ff6457"/><stop offset="0.7" stop-color="#ff4131"/><stop offset="0.85" stop-color="#ff2a18"/><stop offset="1.0" stop-color="#ff1400"/></linearGradient>
<linearGradient id="w53" gradientUnits="userSpaceOnUse" x1="1199.27" y1="391.47" x2="1413.64" y2="375.85"><stop offset="0" stop-color="#ffffff"/><stop offset="0.08" stop-color="#ffcbc7"/><stop offset="0.2" stop-color="#ffa49e"/><stop offset="0.35" stop-color="#ff8077"/><stop offset="0.5" stop-color="#ff6257"/><stop offset="0.7" stop-color="#ff3f31"/><stop offset="0.85" stop-color="#ff2718"/><stop offset="1.0" stop-color="#ff1100"/></linearGradient>
<linearGradient id="w54" gradientUnits="userSpaceOnUse" x1="1199.27" y1="391.47" x2="1417.82" y2="378.17"><stop offset="0" stop-color="#ffffff"/><stop offset="0.08" stop-color="#ffcac7"/><stop offset="0.2" stop-color="#ffa39e"/><stop offset="0.35" stop-color="#ff7f77"/><stop offset="0.5" stop-color="#ff6057"/><stop offset="0.7" stop-color="#ff3c31"/><stop offset="0.85" stop-color="#ff2418"/><stop offset="1.0" stop-color="#ff0e00"/></linearGradient>
<linearGradient id="w55" gradientUnits="userSpaceOnUse" x1="1199.27" y1="391.47" x2="1422.00" y2="380.50"><stop offset="0" stop-color="#ffffff"/><stop offset="0.08" stop-color="#ffc9c7"/><stop offset="0.2" stop-color="#ffa29e"/><stop offset="0.35" stop-color="#ff7d77"/><stop offset="0.5" stop-color="#ff5e57"/><stop offset="0.7" stop-color="#ff3a31"/><stop offset="0.85" stop-color="#ff2218"/><stop offset="1.0" stop-color="#ff0b00"/></linearGradient>
<linearGradient id="w56" gradientUnits="userSpaceOnUse" x1="1199.27" y1="391.47" x2="1426.18" y2="382.82"><stop offset="0" stop-color="#ffffff"/><stop offset="0.08" stop-color="#ffc9c7"/><stop offset="0.2" stop-color="#ffa19e"/><stop offset="0.35" stop-color="#ff7c77"/><stop offset="0.5" stop-color="#ff5c57"/><stop offset="0.7" stop-color="#ff3831"/><stop offset="0.85" stop-color="#ff1f18"/><stop offset="1.0" stop-color="#ff0900"/></linearGradient>
<linearGradient id="w57" gradientUnits="userSpaceOnUse" x1="1199.27" y1="391.47" x2="1430.37" y2="385.14"><stop offset="0" stop-color="#ffffff"/><stop offset="0.08" stop-color="#ffc8c7"/><stop offset="0.2" stop-color="#ffa09e"/><stop offset="0.35" stop-color="#ff7a77"/><stop offset="0.5" stop-color="#ff5b57"/><stop offset="0.7" stop-color="#ff3631"/><stop offset="0.85" stop-color="#ff1d18"/><stop offset="1.0" stop-color="#ff0600"/></linearGradient>
<linearGradient id="w58" gradientUnits="userSpaceOnUse" x1="1199.27" y1="391.47" x2="1434.55" y2="387.47"><stop offset="0" stop-color="#ffffff"/><stop offset="0.08" stop-color="#ffc8c7"/><stop offset="0.2" stop-color="#ff9f9e"/><stop offset="0.35" stop-color="#ff7977"/><stop offset="0.5" stop-color="#ff5957"/><stop offset="0.7" stop-color="#ff3431"/><stop offset="0.85" stop-color="#ff1b18"/><stop offset="1.0" stop-color="#ff0400"/></linearGradient>
<linearGradient id="w59" gradientUnits="userSpaceOnUse" x1="1199.27" y1="391.47" x2="1438.73" y2="389.79"><stop offset="0" stop-color="#ffffff"/><stop offset="0.08" stop-color="#ffc7c7"/><stop offset="0.2" stop-color="#ff9e9e"/><stop offset="0.35" stop-color="#ff7877"/><stop offset="0.5" stop-color="#ff5857"/><stop offset="0.7" stop-color="#ff3231"/><stop offset="0.85" stop-color="#ff1918"/><stop offset="1.0" stop-color="#ff0100"/></linearGradient>
<linearGradient id="w60" gradientUnits="userSpaceOnUse" x1="1199.27" y1="391.47" x2="1437.81" y2="392.12"><stop offset="0" stop-color="#ffffff"/><stop offset="0.08" stop-color="#ffc7c7"/><stop offset="0.2" stop-color="#ff9e9e"/><stop offset="0.35" stop-color="#ff7778"/><stop offset="0.5" stop-color="#ff5758"/><stop offset="0.7" stop-color="#ff3132"/><stop offset="0.85" stop-color="#ff1819"/><stop offset="1.0" stop-color="#ff0001"/></linearGradient>
<linearGradient id="w61" gradientUnits="userSpaceOnUse" x1="1199.27" y1="391.47" x2="1431.78" y2="394.44"><stop offset="0" stop-color="#ffffff"/><stop offset="0.08" stop-color="#ffc7c8"/><stop offset="0.2" stop-color="#ff9e9f"/><stop offset="0.35" stop-color="#ff7779"/><stop offset="0.5" stop-color="#ff5759"/><stop offset="0.7" stop-color="#ff3134"/><stop offset="0.85" stop-color="#ff181b"/><stop offset="1.0" stop-color="#ff0004"/></linearGradient>
<linearGradient id="w62" gradientUnits="userSpaceOnUse" x1="1199.27" y1="391.47" x2="1425.75" y2="396.77"><stop offset="0" stop-color="#ffffff"/><stop offset="0.08" stop-color="#ffc7c8"/><stop offset="0.2" stop-color="#ff9ea0"/><stop offset="0.35" stop-color="#ff777a"/><stop offset="0.5" stop-color="#ff575b"/><stop offset="0.7" stop-color="#ff3136"/><stop offset="0.85" stop-color="#ff181d"/><stop offset="1.0" stop-color="#ff0006"/></linearGradient>
<linearGradient id="w63" gradientUnits="userSpaceOnUse" x1="1199.27" y1="391.47" x2="1419.73" y2="399.09"><stop offset="0" stop-color="#ffffff"/><stop offset="0.08" stop-color="#ffc7c9"/><stop offset="0.2" stop-color="#ff9ea1"/><stop offset="0.35" stop-color="#ff777c"/><stop offset="0.5" stop-color="#ff575c"/><stop offset="0.7" stop-color="#ff3138"/><stop offset="0.85" stop-color="#ff181f"/><stop offset="1.0" stop-color="#ff0008"/></linearGradient>
<linearGradient id="w64" gradientUnits="userSpaceOnUse" x1="1199.27" y1="391.47" x2="1413.70" y2="401.41"><stop offset="0" stop-color="#ffffff"/><stop offset="0.08" stop-color="#ffc7c9"/><stop offset="0.2" stop-color="#ff9ea2"/><stop offset="0.35" stop-color="#ff777d"/><stop offset="0.5" stop-color="#ff575e"/><stop offset="0.7" stop-color="#ff313a"/><stop offset="0.85" stop-color="#ff1822"/><stop offset="1.0" stop-color="#ff000b"/></linearGradient>
<linearGradient id="w65" gradientUnits="userSpaceOnUse" x1="1199.27" y1="391.47" x2="1407.67" y2="403.74"><stop offset="0" stop-color="#ffffff"/><stop offset="0.08" stop-color="#ffc7ca"/><stop offset="0.2" stop-color="#ff9ea3"/><stop offset="0.35" stop-color="#ff777f"/><stop offset="0.5" stop-color="#ff5760"/><stop offset="0.7" stop-color="#ff313c"/><stop offset="0.85" stop-color="#ff1824"/><stop offset="1.0" stop-color="#ff000e"/></linearGradient>
<linearGradient id="w66" gradientUnits="userSpaceOnUse" x1="1199.27" y1="391.47" x2="1401.64" y2="406.06"><stop offset="0" stop-color="#ffffff"/><stop offset="0.08" stop-color="#ffc7cb"/><stop offset="0.2" stop-color="#ff9ea4"/><stop offset="0.35" stop-color="#ff7780"/><stop offset="0.5" stop-color="#ff5762"/><stop offset="0.7" stop-color="#ff313f"/><stop offset="0.85" stop-color="#ff1827"/><stop offset="1.0" stop-color="#ff0011"/></linearGradient>
<linearGradient id="w67" gradientUnits="userSpaceOnUse" x1="1199.27" y1="391.47" x2="1395.62" y2="408.39"><stop offset="0" stop-color="#ffffff"/><stop offset="0.08" stop-color="#ffc7cb"/><stop offset="0.2" stop-color="#ff9ea5"/><stop offset="0.35" stop-color="#ff7782"/><stop offset="0.5" stop-color="#ff5764"/><stop offset="0.7" stop-color="#ff3141"/><stop offset="0.85" stop-color="#ff1829"/><stop offset="1.0" stop-color="#ff0014"/></linearGradient>
<linearGradient id="w68" gradientUnits="userSpaceOnUse" x1="1199.27" y1="391.47" x2="1389.59" y2="410.71"><stop offset="0" stop-color="#ffffff"/><stop offset="0.08" stop-color="#ffc7cc"/><stop offset="0.2" stop-color="#ff9ea6"/><stop offset="0.35" stop-color="#ff7783"/><stop offset="0.5" stop-color="#ff5766"/><stop offset="0.7" stop-color="#ff3143"/><stop offset="0.85" stop-color="#ff182c"/><stop offset="1.0" stop-color="#ff0017"/></linearGradient>
<linearGradient id="w69" gradientUnits="userSpaceOnUse" x1="1199.27" y1="391.47" x2="1383.56" y2="413.04"><stop offset="0" stop-color="#ffffff"/><stop offset="0.08" stop-color="#ffc7cd"/><stop offset="0.2" stop-color="#ff9ea8"/><stop offset="0.35" stop-color="#ff7785"/><stop offset="0.5" stop-color="#ff5768"/><stop offset="0.7" stop-color="#ff3146"/><stop offset="0.85" stop-color="#ff182f"/><stop offset="1.0" stop-color="#ff001a"/></linearGradient>
<linearGradient id="w70" gradientUnits="userSpaceOnUse" x1="1199.27" y1="391.47" x2="1377.54" y2="415.36"><stop offset="0" stop-color="#ffffff"/><stop offset="0.08" stop-color="#ffc7cd"/><stop offset="0.2" stop-color="#ff9ea9"/><stop offset="0.35" stop-color="#ff7787"/><stop offset="0.5" stop-color="#ff576a"/><stop offset="0.7" stop-color="#ff3149"/><stop offset="0.85" stop-color="#ff1832"/><stop offset="1.0" stop-color="#ff001d"/></linearGradient>
<linearGradient id="w71" gradientUnits="userSpaceOnUse" x1="1199.27" y1="391.47" x2="1371.51" y2="417.68"><stop offset="0" stop-color="#ffffff"/><stop offset="0.08" stop-color="#ffc7ce"/><stop offset="0.2" stop-color="#ff9eaa"/><stop offset="0.35" stop-color="#ff7788"/><stop offset="0.5" stop-color="#ff576c"/><stop offset="0.7" stop-color="#ff314b"/><stop offset="0.85" stop-color="#ff1835"/><stop offset="1.0" stop-color="#ff0020"/></linearGradient>
<linearGradient id="w72" gradientUnits="userSpaceOnUse" x1="1199.27" y1="391.47" x2="1365.48" y2="420.01"><stop offset="0" stop-color="#ffffff"/><stop offset="0.08" stop-color="#ffc7cf"/><stop offset="0.2" stop-color="#ff9eac"/><stop offset="0.35" stop-color="#ff778a"/><stop offset="0.5" stop-color="#ff576e"/><stop offset="0.7" stop-color="#ff314e"/><stop offset="0.85" stop-color="#ff1838"/><stop offset="1.0" stop-color="#ff0024"/></linearGradient>
<linearGradient id="w73" gradientUnits="userSpaceOnUse" x1="1199.27" y1="391.47" x2="1359.46" y2="422.33"><stop offset="0" stop-color="#ffffff"/><stop offset="0.08" stop-color="#ffc7d0"/><stop offset="0.2" stop-color="#ff9ead"/><stop offset="0.35" stop-color="#ff778c"/><stop offset="0.5" stop-color="#ff5771"/><stop offset="0.7" stop-color="#ff3151"/><stop offset="0.85" stop-color="#ff183c"/><stop offset="1.0" stop-color="#ff0028"/></linearGradient>
<linearGradient id="w74" gradientUnits="userSpaceOnUse" x1="1199.27" y1="391.47" x2="1353.43" y2="424.66"><stop offset="0" stop-color="#ffffff"/><stop offset="0.08" stop-color="#ffc7d1"/><stop offset="0.2" stop-color="#ff9eae"/><stop offset="0.35" stop-color="#ff778e"/><stop offset="0.5" stop-color="#ff5773"/><stop offset="0.7" stop-color="#ff3154"/><stop offset="0.85" stop-color="#ff183f"/><stop offset="1.0" stop-color="#ff002c"/></linearGradient>
<linearGradient id="w75" gradientUnits="userSpaceOnUse" x1="1199.27" y1="391.47" x2="1347.40" y2="426.98"><stop offset="0" stop-color="#ffffff"/><stop offset="0.08" stop-color="#ffc7d1"/><stop offset="0.2" stop-color="#ff9eb0"/><stop offset="0.35" stop-color="#ff7791"/><stop offset="0.5" stop-color="#ff5776"/><stop offset="0.7" stop-color="#ff3158"/><stop offset="0.85" stop-color="#ff1843"/><stop offset="1.0" stop-color="#ff0030"/></linearGradient>
<linearGradient id="w76" gradientUnits="userSpaceOnUse" x1="1199.27" y1="391.47" x2="1341.37" y2="429.31"><stop offset="0" stop-color="#ffffff"/><stop offset="0.08" stop-color="#ffc7d2"/><stop offset="0.2" stop-color="#ff9eb2"/><stop offset="0.35" stop-color="#ff7793"/><stop offset="0.5" stop-color="#ff5779"/><stop offset="0.7" stop-color="#ff315b"/><stop offset="0.85" stop-color="#ff1847"/><stop offset="1.0" stop-color="#ff0034"/></linearGradient>
<linearGradient id="w77" gradientUnits="userSpaceOnUse" x1="1199.27" y1="391.47" x2="1335.35" y2="431.63"><stop offset="0" stop-color="#ffffff"/><stop offset="0.08" stop-color="#ffc7d3"/><stop offset="0.2" stop-color="#ff9eb3"/><stop offset="0.35" stop-color="#ff7795"/><stop offset="0.5" stop-color="#ff577c"/><stop offset="0.7" stop-color="#ff315f"/><stop offset="0.85" stop-color="#ff184b"/><stop offset="1.0" stop-color="#ff0038"/></linearGradient>
<linearGradient id="w78" gradientUnits="userSpaceOnUse" x1="1199.27" y1="391.47" x2="1329.32" y2="433.95"><stop offset="0" stop-color="#ffffff"/><stop offset="0.08" stop-color="#ffc7d4"/><stop offset="0.2" stop-color="#ff9eb5"/><stop offset="0.35" stop-color="#ff7798"/><stop offset="0.5" stop-color="#ff577f"/><stop offset="0.7" stop-color="#ff3162"/><stop offset="0.85" stop-color="#ff184f"/><stop offset="1.0" stop-color="#ff003d"/></linearGradient>
<linearGradient id="w79" gradientUnits="userSpaceOnUse" x1="1199.27" y1="391.47" x2="1323.29" y2="436.28"><stop offset="0" stop-color="#ffffff"/><stop offset="0.08" stop-color="#ffc7d5"/><stop offset="0.2" stop-color="#ff9eb7"/><stop offset="0.35" stop-color="#ff779a"/><stop offset="0.5" stop-color="#ff5782"/><stop offset="0.7" stop-color="#ff3166"/><stop offset="0.85" stop-color="#ff1853"/><stop offset="1.0" stop-color="#ff0042"/></linearGradient>
<linearGradient id="w80" gradientUnits="userSpaceOnUse" x1="1199.27" y1="391.47" x2="1317.27" y2="438.60"><stop offset="0" stop-color="#ffffff"/><stop offset="0.08" stop-color="#ffc7d7"/><stop offset="0.2" stop-color="#ff9eb9"/><stop offset="0.35" stop-color="#ff779d"/><stop offset="0.5" stop-color="#ff5786"/><stop offset="0.7" stop-color="#ff316a"/><stop offset="0.85" stop-color="#ff1858"/><stop offset="1.0" stop-color="#ff0047"/></linearGradient>
<linearGradient id="w81" gradientUnits="userSpaceOnUse" x1="1199.27" y1="391.47" x2="1311.24" y2="440.93"><stop offset="0" stop-color="#ffffff"/><stop offset="0.08" stop-color="#ffc7d8"/><stop offset="0.2" stop-color="#ff9ebb"/><stop offset="0.35" stop-color="#ff77a0"/><stop offset="0.5" stop-color="#ff5789"/><stop offset="0.7" stop-color="#ff316f"/><stop offset="0.85" stop-color="#ff185d"/><stop offset="1.0" stop-color="#ff004c"/></linearGradient>
<linearGradient id="w82" gradientUnits="userSpaceOnUse" x1="1199.27" y1="391.47" x2="1305.21" y2="443.25"><stop offset="0" stop-color="#ffffff"/><stop offset="0.08" stop-color="#ffc7d9"/><stop offset="0.2" stop-color="#ff9ebd"/><stop offset="0.35" stop-color="#ff77a3"/><stop offset="0.5" stop-color="#ff578d"/><stop offset="0.7" stop-color="#ff3173"/><stop offset="0.85" stop-color="#ff1862"/><stop offset="1.0" stop-color="#ff0052"/></linearGradient>
<linearGradient id="w83" gradientUnits="userSpaceOnUse" x1="1199.27" y1="391.47" x2="1299.19" y2="445.57"><stop offset="0" stop-color="#ffffff"/><stop offset="0.08" stop-color="#ffc7da"/><stop offset="0.2" stop-color="#ff9ebf"/><stop offset="0.35" stop-color="#ff77a6"/><stop offset="0.5" stop-color="#ff5791"/><stop offset="0.7" stop-color="#ff3178"/><stop offset="0.85" stop-color="#ff1867"/><stop offset="1.0" stop-color="#ff0058"/></linearGradient>
<linearGradient id="w84" gradientUnits="userSpaceOnUse" x1="1199.27" y1="391.47" x2="1293.16" y2="447.90"><stop offset="0" stop-color="#ffffff"/><stop offset="0.08" stop-color="#ffc7dc"/><stop offset="0.2" stop-color="#ff9ec2"/><stop offset="0.35" stop-color="#ff77a9"/><stop offset="0.5" stop-color="#ff5795"/><stop offset="0.7" stop-color="#ff317d"/><stop offset="0.85" stop-color="#ff186d"/><stop offset="1.0" stop-color="#ff005e"/></linearGradient>
<linearGradient id="w85" gradientUnits="userSpaceOnUse" x1="1199.27" y1="391.47" x2="1287.13" y2="450.22"><stop offset="0" stop-color="#ffffff"/><stop offset="0.08" stop-color="#ffc7dd"/><stop offset="0.2" stop-color="#ff9ec4"/><stop offset="0.35" stop-color="#ff77ad"/><stop offset="0.5" stop-color="#ff5799"/><stop offset="0.7" stop-color="#ff3183"/><stop offset="0.85" stop-color="#ff1873"/><stop offset="1.0" stop-color="#ff0065"/></linearGradient>
<linearGradient id="w86" gradientUnits="userSpaceOnUse" x1="1199.27" y1="391.47" x2="1281.10" y2="452.55"><stop offset="0" stop-color="#ffffff"/><stop offset="0.08" stop-color="#ffc7df"/><stop offset="0.2" stop-color="#ff9ec7"/><stop offset="0.35" stop-color="#ff77b1"/><stop offset="0.5" stop-color="#ff579e"/><stop offset="0.7" stop-color="#ff3188"/><stop offset="0.85" stop-color="#ff187a"/><stop offset="1.0" stop-color="#ff006c"/></linearGradient>
<linearGradient id="w87" gradientUnits="userSpaceOnUse" x1="1199.27" y1="391.47" x2="1275.08" y2="454.87"><stop offset="0" stop-color="#ffffff"/><stop offset="0.08" stop-color="#ffc7e0"/><stop offset="0.2" stop-color="#ff9eca"/><stop offset="0.35" stop-color="#ff77b5"/><stop offset="0.5" stop-color="#ff57a3"/><stop offset="0.7" stop-color="#ff318e"/><stop offset="0.85" stop-color="#ff1881"/><stop offset="1.0" stop-color="#ff0074"/></linearGradient>
<linearGradient id="w88" gradientUnits="userSpaceOnUse" x1="1199.27" y1="391.47" x2="1269.05" y2="457.20"><stop offset="0" stop-color="#ffffff"/><stop offset="0.08" stop-color="#ffc7e2"/><stop offset="0.2" stop-color="#ff9ecd"/><stop offset="0.35" stop-color="#ff77b9"/><stop offset="0.5" stop-color="#ff57a8"/><stop offset="0.7" stop-color="#ff3195"/><stop offset="0.85" stop-color="#ff1888"/><stop offset="1.0" stop-color="#ff007c"/></linearGradient>
<linearGradient id="w89" gradientUnits="userSpaceOnUse" x1="1199.27" y1="391.47" x2="1263.02" y2="459.52"><stop offset="0" stop-color="#ffffff"/><stop offset="0.08" stop-color="#ffc7e4"/><stop offset="0.2" stop-color="#ff9ed0"/><stop offset="0.35" stop-color="#ff77be"/><stop offset="0.5" stop-color="#ff57ae"/><stop offset="0.7" stop-color="#ff319c"/><stop offset="0.85" stop-color="#ff1890"/><stop offset="1.0" stop-color="#ff0084"/></linearGradient>
<linearGradient id="w90" gradientUnits="userSpaceOnUse" x1="1199.27" y1="391.47" x2="1257.00" y2="461.84"><stop offset="0" stop-color="#ffffff"/><stop offset="0.08" stop-color="#ffc7e6"/><stop offset="0.2" stop-color="#ff9ed4"/><stop offset="0.35" stop-color="#ff77c2"/><stop offset="0.5" stop-color="#ff57b4"/><stop offset="0.7" stop-color="#ff31a3"/><stop offset="0.85" stop-color="#ff1898"/><stop offset="1.0" stop-color="#ff008d"/></linearGradient>
<linearGradient id="w91" gradientUnits="userSpaceOnUse" x1="1199.27" y1="391.47" x2="1250.97" y2="464.17"><stop offset="0" stop-color="#ffffff"/><stop offset="0.08" stop-color="#ffc7e8"/><stop offset="0.2" stop-color="#ff9ed7"/><stop offset="0.35" stop-color="#ff77c8"/><stop offset="0.5" stop-color="#ff57ba"/><stop offset="0.7" stop-color="#ff31ab"/><stop offset="0.85" stop-color="#ff18a1"/><stop offset="1.0" stop-color="#ff0097"/></linearGradient>
<linearGradient id="w92" gradientUnits="userSpaceOnUse" x1="1199.27" y1="391.47" x2="1244.94" y2="466.49"><stop offset="0" stop-color="#ffffff"/><stop offset="0.08" stop-color="#ffc7ea"/><stop offset="0.2" stop-color="#ff9edb"/><stop offset="0.35" stop-color="#ff77cd"/><stop offset="0.5" stop-color="#ff57c1"/><stop offset="0.7" stop-color="#ff31b3"/><stop offset="0.85" stop-color="#ff18aa"/><stop offset="1.0" stop-color="#ff00a1"/></linearGradient>
<linearGradient id="w93" gradientUnits="userSpaceOnUse" x1="1199.27" y1="391.47" x2="1238.92" y2="468.82"><stop offset="0" stop-color="#ffffff"/><stop offset="0.08" stop-color="#ffc7ed"/><stop offset="0.2" stop-color="#ff9ee0"/><stop offset="0.35" stop-color="#ff77d3"/><stop offset="0.5" stop-color="#ff57c9"/><stop offset="0.7" stop-color="#ff31bd"/><stop offset="0.85" stop-color="#ff18b4"/><stop offset="1.0" stop-color="#ff00ad"/></linearGradient>
<linearGradient id="w94" gradientUnits="userSpaceOnUse" x1="1199.27" y1="391.47" x2="1232.89" y2="471.14"><stop offset="0" stop-color="#ffffff"/><stop offset="0.08" stop-color="#ffc7f0"/><stop offset="0.2" stop-color="#ff9ee4"/><stop offset="0.35" stop-color="#ff77da"/><stop offset="0.5" stop-color="#ff57d1"/><stop offset="0.7" stop-color="#ff31c6"/><stop offset="0.85" stop-color="#ff18bf"/><stop offset="1.0" stop-color="#ff00b9"/></linearGradient>
<linearGradient id="w95" gradientUnits="userSpaceOnUse" x1="1199.27" y1="391.47" x2="1226.86" y2="473.47"><stop offset="0" stop-color="#ffffff"/><stop offset="0.08" stop-color="#ffc7f2"/><stop offset="0.2" stop-color="#ff9ee9"/><stop offset="0.35" stop-color="#ff77e1"/><stop offset="0.5" stop-color="#ff57d9"/><stop offset="0.7" stop-color="#ff31d1"/><stop offset="0.85" stop-color="#ff18cb"/><stop offset="1.0" stop-color="#ff00c6"/></linearGradient>
<linearGradient id="w96" gradientUnits="userSpaceOnUse" x1="1199.27" y1="391.47" x2="1220.83" y2="475.79"><stop offset="0" stop-color="#ffffff"/><stop offset="0.08" stop-color="#ffc7f6"/><stop offset="0.2" stop-color="#ff9eef"/><stop offset="0.35" stop-color="#ff77e8"/><stop offset="0.5" stop-color="#ff57e3"/><stop offset="0.7" stop-color="#ff31dc"/><stop offset="0.85" stop-color="#ff18d8"/><stop offset="1.0" stop-color="#ff00d4"/></linearGradient>
<linearGradient id="w97" gradientUnits="userSpaceOnUse" x1="1199.27" y1="391.47" x2="1214.81" y2="478.11"><stop offset="0" stop-color="#ffffff"/><stop offset="0.08" stop-color="#ffc7f9"/><stop offset="0.2" stop-color="#ff9ef5"/><stop offset="0.35" stop-color="#ff77f0"/><stop offset="0.5" stop-color="#ff57ed"/><stop offset="0.7" stop-color="#ff31e9"/><stop offset="0.85" stop-color="#ff18e6"/><stop offset="1.0" stop-color="#ff00e4"/></linearGradient>
<linearGradient id="w98" gradientUnits="userSpaceOnUse" x1="1199.27" y1="391.47" x2="1208.78" y2="480.44"><stop offset="0" stop-color="#ffffff"/><stop offset="0.08" stop-color="#ffc7fd"/><stop offset="0.2" stop-color="#ff9efb"/><stop offset="0.35" stop-color="#ff77f9"/><stop offset="0.5" stop-color="#ff57f8"/><stop offset="0.7" stop-color="#ff31f7"/><stop offset="0.85" stop-color="#ff18f6"/><stop offset="1.0" stop-color="#ff00f5"/></linearGradient>
<linearGradient id="w99" gradientUnits="userSpaceOnUse" x1="1199.27" y1="391.47" x2="1202.75" y2="482.76"><stop offset="0" stop-color="#ffffff"/><stop offset="0.08" stop-color="#fdc7ff"/><stop offset="0.2" stop-color="#fc9eff"/><stop offset="0.35" stop-color="#fb77ff"/><stop offset="0.5" stop-color="#fa57ff"/><stop offset="0.7" stop-color="#f931ff"/><stop offset="0.85" stop-color="#f818ff"/><stop offset="1.0" stop-color="#f700ff"/></linearGradient>
<linearGradient id="w100" gradientUnits="userSpaceOnUse" x1="1199.27" y1="391.47" x2="1196.73" y2="485.09"><stop offset="0" stop-color="#ffffff"/><stop offset="0.08" stop-color="#f9c7ff"/><stop offset="0.2" stop-color="#f59eff"/><stop offset="0.35" stop-color="#f177ff"/><stop offset="0.5" stop-color="#ee57ff"/><stop offset="0.7" stop-color="#ea31ff"/><stop offset="0.85" stop-color="#e818ff"/><stop offset="1.0" stop-color="#e500ff"/></linearGradient>
<linearGradient id="w101" gradientUnits="userSpaceOnUse" x1="1199.27" y1="391.47" x2="1190.70" y2="487.41"><stop offset="0" stop-color="#ffffff"/><stop offset="0.08" stop-color="#f6c7ff"/><stop offset="0.2" stop-color="#ef9eff"/><stop offset="0.35" stop-color="#e877ff"/><stop offset="0.5" stop-color="#e357ff"/><stop offset="0.7" stop-color="#dc31ff"/><stop offset="0.85" stop-color="#d818ff"/><stop offset="1.0" stop-color="#d400ff"/></linearGradient>
<linearGradient id="w102" gradientUnits="userSpaceOnUse" x1="1199.27" y1="391.47" x2="1184.67" y2="489.74"><stop offset="0" stop-color="#ffffff"/><stop offset="0.08" stop-color="#f2c7ff"/><stop offset="0.2" stop-color="#e99eff"/><stop offset="0.35" stop-color="#e077ff"/><stop offset="0.5" stop-color="#d857ff"/><stop offset="0.7" stop-color="#cf31ff"/><stop offset="0.85" stop-color="#ca18ff"/><stop offset="1.0" stop-color="#c400ff"/></linearGradient>
<linearGradient id="w103" gradientUnits="userSpaceOnUse" x1="1199.27" y1="391.47" x2="1178.65" y2="492.06"><stop offset="0" stop-color="#ffffff"/><stop offset="0.08" stop-color="#efc7ff"/><stop offset="0.2" stop-color="#e39eff"/><stop offset="0.35" stop-color="#d777ff"/><stop offset="0.5" stop-color="#ce57ff"/><stop offset="0.7" stop-color="#c331ff"/><stop offset="0.85" stop-color="#bb18ff"/><stop offset="1.0" stop-color="#b500ff"/></linearGradient>
<linearGradient id="w104" gradientUnits="userSpaceOnUse" x1="1199.27" y1="391.47" x2="1172.62" y2="494.38"><stop offset="0" stop-color="#ffffff"/><stop offset="0.08" stop-color="#ebc7ff"/><stop offset="0.2" stop-color="#dd9eff"/><stop offset="0.35" stop-color="#cf77ff"/><stop offset="0.5" stop-color="#c457ff"/><stop offset="0.7" stop-color="#b731ff"/><stop offset="0.85" stop-color="#ae18ff"/><stop offset="1.0" stop-color="#a600ff"/></linearGradient>
<linearGradient id="w105" gradientUnits="userSpaceOnUse" x1="1199.27" y1="391.47" x2="1166.59" y2="496.71"><stop offset="0" stop-color="#ffffff"/><stop offset="0.08" stop-color="#e8c7ff"/><stop offset="0.2" stop-color="#d89eff"/><stop offset="0.35" stop-color="#c877ff"/><stop offset="0.5" stop-color="#bb57ff"/><stop offset="0.7" stop-color="#ac31ff"/><stop offset="0.85" stop-color="#a118ff"/><stop offset="1.0" stop-color="#9800ff"/></linearGradient>
<linearGradient id="w106" gradientUnits="userSpaceOnUse" x1="1199.27" y1="391.47" x2="1160.56" y2="499.03"><stop offset="0" stop-color="#ffffff"/><stop offset="0.08" stop-color="#e5c7ff"/><stop offset="0.2" stop-color="#d39eff"/><stop offset="0.35" stop-color="#c177ff"/><stop offset="0.5" stop-color="#b257ff"/><stop offset="0.7" stop-color="#a131ff"/><stop offset="0.85" stop-color="#9518ff"/><stop offset="1.0" stop-color="#8a00ff"/></linearGradient>
<linearGradient id="w107" gradientUnits="userSpaceOnUse" x1="1199.27" y1="391.47" x2="1154.54" y2="501.36"><stop offset="0" stop-color="#ffffff"/><stop offset="0.08" stop-color="#e2c7ff"/><stop offset="0.2" stop-color="#ce9eff"/><stop offset="0.35" stop-color="#ba77ff"/><stop offset="0.5" stop-color="#a957ff"/><stop offset="0.7" stop-color="#9631ff"/><stop offset="0.85" stop-color="#8918ff"/><stop offset="1.0" stop-color="#7d00ff"/></linearGradient>
<linearGradient id="w108" gradientUnits="userSpaceOnUse" x1="1199.27" y1="391.47" x2="1148.51" y2="503.68"><stop offset="0" stop-color="#ffffff"/><stop offset="0.08" stop-color="#e0c7ff"/><stop offset="0.2" stop-color="#c99eff"/><stop offset="0.35" stop-color="#b377ff"/><stop offset="0.5" stop-color="#a157ff"/><stop offset="0.7" stop-color="#8c31ff"/><stop offset="0.85" stop-color="#7e18ff"/><stop offset="1.0" stop-color="#7100ff"/></linearGradient>
<linearGradient id="w109" gradientUnits="userSpaceOnUse" x1="1199.27" y1="391.47" x2="1142.48" y2="506.01"><stop offset="0" stop-color="#ffffff"/><stop offset="0.08" stop-color="#ddc7ff"/><stop offset="0.2" stop-color="#c49eff"/><stop offset="0.35" stop-color="#ad77ff"/><stop offset="0.5" stop-color="#9957ff"/><stop offset="0.7" stop-color="#8331ff"/><stop offset="0.85" stop-color="#7318ff"/><stop offset="1.0" stop-color="#6500ff"/></linearGradient>
<linearGradient id="w110" gradientUnits="userSpaceOnUse" x1="1199.27" y1="391.47" x2="1136.46" y2="508.33"><stop offset="0" stop-color="#ffffff"/><stop offset="0.08" stop-color="#dbc7ff"/><stop offset="0.2" stop-color="#c09eff"/><stop offset="0.35" stop-color="#a777ff"/><stop offset="0.5" stop-color="#9257ff"/><stop offset="0.7" stop-color="#7931ff"/><stop offset="0.85" stop-color="#6918ff"/><stop offset="1.0" stop-color="#5a00ff"/></linearGradient>
<linearGradient id="w111" gradientUnits="userSpaceOnUse" x1="1199.27" y1="391.47" x2="1130.43" y2="510.65"><stop offset="0" stop-color="#ffffff"/><stop offset="0.08" stop-color="#d8c7ff"/><stop offset="0.2" stop-color="#bc9eff"/><stop offset="0.35" stop-color="#a177ff"/><stop offset="0.5" stop-color="#8b57ff"/><stop offset="0.7" stop-color="#7131ff"/><stop offset="0.85" stop-color="#5f18ff"/><stop offset="1.0" stop-color="#4f00ff"/></linearGradient>
<linearGradient id="w112" gradientUnits="userSpaceOnUse" x1="1199.27" y1="391.47" x2="1124.40" y2="512.98"><stop offset="0" stop-color="#ffffff"/><stop offset="0.08" stop-color="#d6c7ff"/><stop offset="0.2" stop-color="#b89eff"/><stop offset="0.35" stop-color="#9b77ff"/><stop offset="0.5" stop-color="#8457ff"/><stop offset="0.7" stop-color="#6831ff"/><stop offset="0.85" stop-color="#5518ff"/><stop offset="1.0" stop-color="#4400ff"/></linearGradient>
<linearGradient id="w113" gradientUnits="userSpaceOnUse" x1="1199.27" y1="391.47" x2="1118.38" y2="515.30"><stop offset="0" stop-color="#ffffff"/><stop offset="0.08" stop-color="#d4c7ff"/><stop offset="0.2" stop-color="#b49eff"/><stop offset="0.35" stop-color="#9677ff"/><stop offset="0.5" stop-color="#7d57ff"/><stop offset="0.7" stop-color="#6031ff"/><stop offset="0.85" stop-color="#4c18ff"/><stop offset="1.0" stop-color="#3a00ff"/></linearGradient>
<linearGradient id="w114" gradientUnits="userSpaceOnUse" x1="1199.27" y1="391.47" x2="1112.35" y2="517.63"><stop offset="0" stop-color="#ffffff"/><stop offset="0.08" stop-color="#d2c7ff"/><stop offset="0.2" stop-color="#b09eff"/><stop offset="0.35" stop-color="#9177ff"/><stop offset="0.5" stop-color="#7657ff"/><stop offset="0.7" stop-color="#5831ff"/><stop offset="0.85" stop-color="#4318ff"/><stop offset="1.0" stop-color="#3000ff"/></linearGradient>
<linearGradient id="w115" gradientUnits="userSpaceOnUse" x1="1199.27" y1="391.47" x2="1106.32" y2="519.95"><stop offset="0" stop-color="#ffffff"/><stop offset="0.08" stop-color="#cfc7ff"/><stop offset="0.2" stop-color="#ad9eff"/><stop offset="0.35" stop-color="#8c77ff"/><stop offset="0.5" stop-color="#7057ff"/><stop offset="0.7" stop-color="#5031ff"/><stop offset="0.85" stop-color="#3b18ff"/><stop offset="1.0" stop-color="#2700ff"/></linearGradient>
<linearGradient id="w116" gradientUnits="userSpaceOnUse" x1="1199.27" y1="391.47" x2="1100.29" y2="522.28"><stop offset="0" stop-color="#ffffff"/><stop offset="0.08" stop-color="#cdc7ff"/><stop offset="0.2" stop-color="#a99eff"/><stop offset="0.35" stop-color="#8777ff"/><stop offset="0.5" stop-color="#6a57ff"/><stop offset="0.7" stop-color="#4931ff"/><stop offset="0.85" stop-color="#3218ff"/><stop offset="1.0" stop-color="#1d00ff"/></linearGradient>
<linearGradient id="w117" gradientUnits="userSpaceOnUse" x1="1199.27" y1="391.47" x2="1094.27" y2="524.60"><stop offset="0" stop-color="#ffffff"/><stop offset="0.08" stop-color="#ccc7ff"/><stop offset="0.2" stop-color="#a69eff"/><stop offset="0.35" stop-color="#8277ff"/><stop offset="0.5" stop-color="#6457ff"/><stop offset="0.7" stop-color="#4231ff"/><stop offset="0.85" stop-color="#2a18ff"/><stop offset="1.0" stop-color="#1500ff"/></linearGradient>
<linearGradient id="w118" gradientUnits="userSpaceOnUse" x1="1199.27" y1="391.47" x2="1088.24" y2="526.92"><stop offset="0" stop-color="#ffffff"/><stop offset="0.08" stop-color="#cac7ff"/><stop offset="0.2" stop-color="#a39eff"/><stop offset="0.35" stop-color="#7e77ff"/><stop offset="0.5" stop-color="#5f57ff"/><stop offset="0.7" stop-color="#3b31ff"/><stop offset="0.85" stop-color="#2318ff"/><stop offset="1.0" stop-color="#0c00ff"/></linearGradient>
<linearGradient id="w119" gradientUnits="userSpaceOnUse" x1="1199.27" y1="391.47" x2="1082.21" y2="529.25"><stop offset="0" stop-color="#ffffff"/><stop offset="0.08" stop-color="#c8c7ff"/><stop offset="0.2" stop-color="#9f9eff"/><stop offset="0.35" stop-color="#7977ff"/><stop offset="0.5" stop-color="#5957ff"/><stop offset="0.7" stop-color="#3431ff"/><stop offset="0.85" stop-color="#1b18ff"/><stop offset="1.0" stop-color="#0400ff"/></linearGradient>
<linearGradient id="w120" gradientUnits="userSpaceOnUse" x1="1199.27" y1="391.47" x2="1080.12" y2="528.09"><stop offset="0" stop-color="#ffffff"/><stop offset="0.08" stop-color="#c7c7ff"/><stop offset="0.2" stop-color="#9e9fff"/><stop offset="0.35" stop-color="#7778ff"/><stop offset="0.5" stop-color="#5758ff"/><stop offset="0.7" stop-color="#3133ff"/><stop offset="0.85" stop-color="#181aff"/><stop offset="1.0" stop-color="#0002ff"/></linearGradient>
<linearGradient id="w121" gradientUnits="userSpaceOnUse" x1="1199.27" y1="391.47" x2="1081.97" y2="523.44"><stop offset="0" stop-color="#ffffff"/><stop offset="0.08" stop-color="#c7c8ff"/><stop offset="0.2" stop-color="#9ea0ff"/><stop offset="0.35" stop-color="#777bff"/><stop offset="0.5" stop-color="#575bff"/><stop offset="0.7" stop-color="#3136ff"/><stop offset="0.85" stop-color="#181eff"/><stop offset="1.0" stop-color="#0007ff"/></linearGradient>
<linearGradient id="w122" gradientUnits="userSpaceOnUse" x1="1199.27" y1="391.47" x2="1083.81" y2="518.79"><stop offset="0" stop-color="#ffffff"/><stop offset="0.08" stop-color="#c7c9ff"/><stop offset="0.2" stop-color="#9ea2ff"/><stop offset="0.35" stop-color="#777dff"/><stop offset="0.5" stop-color="#575eff"/><stop offset="0.7" stop-color="#313aff"/><stop offset="0.85" stop-color="#1822ff"/><stop offset="1.0" stop-color="#000bff"/></linearGradient>
<linearGradient id="w123" gradientUnits="userSpaceOnUse" x1="1199.27" y1="391.47" x2="1085.66" y2="514.14"><stop offset="0" stop-color="#ffffff"/><stop offset="0.08" stop-color="#c7caff"/><stop offset="0.2" stop-color="#9ea4ff"/><stop offset="0.35" stop-color="#7780ff"/><stop offset="0.5" stop-color="#5761ff"/><stop offset="0.7" stop-color="#313eff"/><stop offset="0.85" stop-color="#1826ff"/><stop offset="1.0" stop-color="#0010ff"/></linearGradient>
<linearGradient id="w124" gradientUnits="userSpaceOnUse" x1="1199.27" y1="391.47" x2="1087.50" y2="509.49"><stop offset="0" stop-color="#ffffff"/><stop offset="0.08" stop-color="#c7ccff"/><stop offset="0.2" stop-color="#9ea6ff"/><stop offset="0.35" stop-color="#7782ff"/><stop offset="0.5" stop-color="#5765ff"/><stop offset="0.7" stop-color="#3142ff"/><stop offset="0.85" stop-color="#182bff"/><stop offset="1.0" stop-color="#0015ff"/></linearGradient>
<linearGradient id="w125" gradientUnits="userSpaceOnUse" x1="1199.27" y1="391.47" x2="1089.35" y2="504.84"><stop offset="0" stop-color="#ffffff"/><stop offset="0.08" stop-color="#c7cdff"/><stop offset="0.2" stop-color="#9ea8ff"/><stop offset="0.35" stop-color="#7785ff"/><stop offset="0.5" stop-color="#5768ff"/><stop offset="0.7" stop-color="#3146ff"/><stop offset="0.85" stop-color="#182fff"/><stop offset="1.0" stop-color="#001aff"/></linearGradient>
<linearGradient id="w126" gradientUnits="userSpaceOnUse" x1="1199.27" y1="391.47" x2="1091.19" y2="500.19"><stop offset="0" stop-color="#ffffff"/><stop offset="0.08" stop-color="#c7ceff"/><stop offset="0.2" stop-color="#9eaaff"/><stop offset="0.35" stop-color="#7788ff"/><stop offset="0.5" stop-color="#576bff"/><stop offset="0.7" stop-color="#314aff"/><stop offset="0.85" stop-color="#1834ff"/><stop offset="1.0" stop-color="#001fff"/></linearGradient>
<linearGradient id="w127" gradientUnits="userSpaceOnUse" x1="1199.27" y1="391.47" x2="1093.04" y2="495.55"><stop offset="0" stop-color="#ffffff"/><stop offset="0.08" stop-color="#c7cfff"/><stop offset="0.2" stop-color="#9eacff"/><stop offset="0.35" stop-color="#778bff"/><stop offset="0.5" stop-color="#576fff"/><stop offset="0.7" stop-color="#314fff"/><stop offset="0.85" stop-color="#1839ff"/><stop offset="1.0" stop-color="#0025ff"/></linearGradient>
<linearGradient id="w128" gradientUnits="userSpaceOnUse" x1="1199.27" y1="391.47" x2="1094.88" y2="490.90"><stop offset="0" stop-color="#ffffff"/><stop offset="0.08" stop-color="#c7d0ff"/><stop offset="0.2" stop-color="#9eaeff"/><stop offset="0.35" stop-color="#778eff"/><stop offset="0.5" stop-color="#5773ff"/><stop offset="0.7" stop-color="#3153ff"/><stop offset="0.85" stop-color="#183eff"/><stop offset="1.0" stop-color="#002aff"/></linearGradient>
<linearGradient id="w129" gradientUnits="userSpaceOnUse" x1="1199.27" y1="391.47" x2="1096.73" y2="486.25"><stop offset="0" stop-color="#ffffff"/><stop offset="0.08" stop-color="#c7d2ff"/><stop offset="0.2" stop-color="#9eb0ff"/><stop offset="0.35" stop-color="#7791ff"/><stop offset="0.5" stop-color="#5777ff"/><stop offset="0.7" stop-color="#3158ff"/><stop offset="0.85" stop-color="#1844ff"/><stop offset="1.0" stop-color="#0030ff"/></linearGradient>
<linearGradient id="w130" gradientUnits="userSpaceOnUse" x1="1199.27" y1="391.47" x2="1098.57" y2="481.60"><stop offset="0" stop-color="#ffffff"/><stop offset="0.08" stop-color="#c7d3ff"/><stop offset="0.2" stop-color="#9eb3ff"/><stop offset="0.35" stop-color="#7794ff"/><stop offset="0.5" stop-color="#577bff"/><stop offset="0.7" stop-color="#315dff"/><stop offset="0.85" stop-color="#1849ff"/><stop offset="1.0" stop-color="#0037ff"/></linearGradient>
<linearGradient id="w131" gradientUnits="userSpaceOnUse" x1="1199.27" y1="391.47" x2="1100.42" y2="476.95"><stop offset="0" stop-color="#ffffff"/><stop offset="0.08" stop-color="#c7d4ff"/><stop offset="0.2" stop-color="#9eb5ff"/><stop offset="0.35" stop-color="#7798ff"/><stop offset="0.5" stop-color="#577fff"/><stop offset="0.7" stop-color="#3162ff"/><stop offset="0.85" stop-color="#184fff"/><stop offset="1.0" stop-color="#003dff"/></linearGradient>
<linearGradient id="w132" gradientUnits="userSpaceOnUse" x1="1199.27" y1="391.47" x2="1102.26" y2="472.30"><stop offset="0" stop-color="#ffffff"/><stop offset="0.08" stop-color="#c7d6ff"/><stop offset="0.2" stop-color="#9eb8ff"/><stop offset="0.35" stop-color="#779bff"/><stop offset="0.5" stop-color="#5783ff"/><stop offset="0.7" stop-color="#3168ff"/><stop offset="0.85" stop-color="#1855ff"/><stop offset="1.0" stop-color="#0044ff"/></linearGradient>
<linearGradient id="w133" gradientUnits="userSpaceOnUse" x1="1199.27" y1="391.47" x2="1104.11" y2="467.66"><stop offset="0" stop-color="#ffffff"/><stop offset="0.08" stop-color="#c7d7ff"/><stop offset="0.2" stop-color="#9ebaff"/><stop offset="0.35" stop-color="#779fff"/><stop offset="0.5" stop-color="#5788ff"/><stop offset="0.7" stop-color="#316dff"/><stop offset="0.85" stop-color="#185bff"/><stop offset="1.0" stop-color="#004bff"/></linearGradient>
<linearGradient id="w134" gradientUnits="userSpaceOnUse" x1="1199.27" y1="391.47" x2="1105.95" y2="463.01"><stop offset="0" stop-color="#ffffff"/><stop offset="0.08" stop-color="#c7d9ff"/><stop offset="0.2" stop-color="#9ebdff"/><stop offset="0.35" stop-color="#77a3ff"/><stop offset="0.5" stop-color="#578dff"/><stop offset="0.7" stop-color="#3173ff"/><stop offset="0.85" stop-color="#1862ff"/><stop offset="1.0" stop-color="#0052ff"/></linearGradient>
<linearGradient id="w135" gradientUnits="userSpaceOnUse" x1="1199.27" y1="391.47" x2="1107.80" y2="458.36"><stop offset="0" stop-color="#ffffff"/><stop offset="0.08" stop-color="#c7dbff"/><stop offset="0.2" stop-color="#9ec0ff"/><stop offset="0.35" stop-color="#77a7ff"/><stop offset="0.5" stop-color="#5792ff"/><stop offset="0.7" stop-color="#317aff"/><stop offset="0.85" stop-color="#1869ff"/><stop offset="1.0" stop-color="#005aff"/></linearGradient>
<linearGradient id="w136" gradientUnits="userSpaceOnUse" x1="1199.27" y1="391.47" x2="1109.64" y2="453.71"><stop offset="0" stop-color="#ffffff"/><stop offset="0.08" stop-color="#c7dcff"/><stop offset="0.2" stop-color="#9ec3ff"/><stop offset="0.35" stop-color="#77abff"/><stop offset="0.5" stop-color="#5797ff"/><stop offset="0.7" stop-color="#3180ff"/><stop offset="0.85" stop-color="#1870ff"/><stop offset="1.0" stop-color="#0062ff"/></linearGradient>
<linearGradient id="w137" gradientUnits="userSpaceOnUse" x1="1199.27" y1="391.47" x2="1111.49" y2="449.06"><stop offset="0" stop-color="#ffffff"/><stop offset="0.08" stop-color="#c7deff"/><stop offset="0.2" stop-color="#9ec6ff"/><stop offset="0.35" stop-color="#77b0ff"/><stop offset="0.5" stop-color="#579dff"/><stop offset="0.7" stop-color="#3187ff"/><stop offset="0.85" stop-color="#1878ff"/><stop offset="1.0" stop-color="#006aff"/></linearGradient>
<linearGradient id="w138" gradientUnits="userSpaceOnUse" x1="1199.27" y1="391.47" x2="1113.33" y2="444.41"><stop offset="0" stop-color="#ffffff"/><stop offset="0.08" stop-color="#c7e0ff"/><stop offset="0.2" stop-color="#9ecaff"/><stop offset="0.35" stop-color="#77b4ff"/><stop offset="0.5" stop-color="#57a2ff"/><stop offset="0.7" stop-color="#318eff"/><stop offset="0.85" stop-color="#1880ff"/><stop offset="1.0" stop-color="#0073ff"/></linearGradient>
<linearGradient id="w139" gradientUnits="userSpaceOnUse" x1="1199.27" y1="391.47" x2="1115.18" y2="439.76"><stop offset="0" stop-color="#ffffff"/><stop offset="0.08" stop-color="#c7e2ff"/><stop offset="0.2" stop-color="#9ecdff"/><stop offset="0.35" stop-color="#77b9ff"/><stop offset="0.5" stop-color="#57a9ff"/><stop offset="0.7" stop-color="#3195ff"/><stop offset="0.85" stop-color="#1888ff"/><stop offset="1.0" stop-color="#007cff"/></linearGradient>
<linearGradient id="w140" gradientUnits="userSpaceOnUse" x1="1199.27" y1="391.47" x2="1117.02" y2="435.12"><stop offset="0" stop-color="#ffffff"/><stop offset="0.08" stop-color="#c7e4ff"/><stop offset="0.2" stop-color="#9ed1ff"/><stop offset="0.35" stop-color="#77beff"/><stop offset="0.5" stop-color="#57afff"/><stop offset="0.7" stop-color="#319dff"/><stop offset="0.85" stop-color="#1891ff"/><stop offset="1.0" stop-color="#0086ff"/></linearGradient>
<linearGradient id="w141" gradientUnits="userSpaceOnUse" x1="1199.27" y1="391.47" x2="1118.87" y2="430.47"><stop offset="0" stop-color="#ffffff"/><stop offset="0.08" stop-color="#c7e7ff"/><stop offset="0.2" stop-color="#9ed5ff"/><stop offset="0.35" stop-color="#77c4ff"/><stop offset="0.5" stop-color="#57b6ff"/><stop offset="0.7" stop-color="#31a5ff"/><stop offset="0.85" stop-color="#189aff"/><stop offset="1.0" stop-color="#0090ff"/></linearGradient>
<linearGradient id="w142" gradientUnits="userSpaceOnUse" x1="1199.27" y1="391.47" x2="1120.71" y2="425.82"><stop offset="0" stop-color="#ffffff"/><stop offset="0.08" stop-color="#c7e9ff"/><stop offset="0.2" stop-color="#9ed9ff"/><stop offset="0.35" stop-color="#77c9ff"/><stop offset="0.5" stop-color="#57bdff"/><stop offset="0.7" stop-color="#31aeff"/><stop offset="0.85" stop-color="#18a4ff"/><stop offset="1.0" stop-color="#009aff"/></linearGradient>
<linearGradient id="w143" gradientUnits="userSpaceOnUse" x1="1199.27" y1="391.47" x2="1122.56" y2="421.17"><stop offset="0" stop-color="#ffffff"/><stop offset="0.08" stop-color="#c7ebff"/><stop offset="0.2" stop-color="#9eddff"/><stop offset="0.35" stop-color="#77cfff"/><stop offset="0.5" stop-color="#57c4ff"/><stop offset="0.7" stop-color="#31b7ff"/><stop offset="0.85" stop-color="#18aeff"/><stop offset="1.0" stop-color="#00a6ff"/></linearGradient>
<linearGradient id="w144" gradientUnits="userSpaceOnUse" x1="1199.27" y1="391.47" x2="1124.40" y2="416.52"><stop offset="0" stop-color="#ffffff"/><stop offset="0.08" stop-color="#c7eeff"/><stop offset="0.2" stop-color="#9ee2ff"/><stop offset="0.35" stop-color="#77d6ff"/><stop offset="0.5" stop-color="#57ccff"/><stop offset="0.7" stop-color="#31c1ff"/><stop offset="0.85" stop-color="#18b9ff"/><stop offset="1.0" stop-color="#00b2ff"/></linearGradient>
<linearGradient id="w145" gradientUnits="userSpaceOnUse" x1="1199.27" y1="391.47" x2="1126.25" y2="411.87"><stop offset="0" stop-color="#ffffff"/><stop offset="0.08" stop-color="#c7f1ff"/><stop offset="0.2" stop-color="#9ee6ff"/><stop offset="0.35" stop-color="#77ddff"/><stop offset="0.5" stop-color="#57d4ff"/><stop offset="0.7" stop-color="#31cbff"/><stop offset="0.85" stop-color="#18c4ff"/><stop offset="1.0" stop-color="#00beff"/></linearGradient>
<linearGradient id="w146" gradientUnits="userSpaceOnUse" x1="1199.27" y1="391.47" x2="1128.09" y2="407.22"><stop offset="0" stop-color="#ffffff"/><stop offset="0.08" stop-color="#c7f4ff"/><stop offset="0.2" stop-color="#9eebff"/><stop offset="0.35" stop-color="#77e4ff"/><stop offset="0.5" stop-color="#57ddff"/><stop offset="0.7" stop-color="#31d6ff"/><stop offset="0.85" stop-color="#18d0ff"/><stop offset="1.0" stop-color="#00ccff"/></linearGradient>
<linearGradient id="w147" gradientUnits="userSpaceOnUse" x1="1199.27" y1="391.47" x2="1129.94" y2="402.58"><stop offset="0" stop-color="#ffffff"/><stop offset="0.08" stop-color="#c7f7ff"/><stop offset="0.2" stop-color="#9ef1ff"/><stop offset="0.35" stop-color="#77ebff"/><stop offset="0.5" stop-color="#57e6ff"/><stop offset="0.7" stop-color="#31e1ff"/><stop offset="0.85" stop-color="#18ddff"/><stop offset="1.0" stop-color="#00daff"/></linearGradient>
<linearGradient id="w148" gradientUnits="userSpaceOnUse" x1="1199.27" y1="391.47" x2="1131.78" y2="397.93"><stop offset="0" stop-color="#ffffff"/><stop offset="0.08" stop-color="#c7faff"/><stop offset="0.2" stop-color="#9ef7ff"/><stop offset="0.35" stop-color="#77f3ff"/><stop offset="0.5" stop-color="#57f0ff"/><stop offset="0.7" stop-color="#31edff"/><stop offset="0.85" stop-color="#18ebff"/><stop offset="1.0" stop-color="#00e9ff"/></linearGradient>
<linearGradient id="w149" gradientUnits="userSpaceOnUse" x1="1199.27" y1="391.47" x2="1133.63" y2="393.28"><stop offset="0" stop-color="#ffffff"/><stop offset="0.08" stop-color="#c7feff"/><stop offset="0.2" stop-color="#9efdff"/><stop offset="0.35" stop-color="#77fcff"/><stop offset="0.5" stop-color="#57fbff"/><stop offset="0.7" stop-color="#31faff"/><stop offset="0.85" stop-color="#18faff"/><stop offset="1.0" stop-color="#00f9ff"/></linearGradient>
<linearGradient id="w150" gradientUnits="userSpaceOnUse" x1="1199.27" y1="391.47" x2="1135.47" y2="388.63"><stop offset="0" stop-color="#ffffff"/><stop offset="0.08" stop-color="#c7fffd"/><stop offset="0.2" stop-color="#9efffb"/><stop offset="0.35" stop-color="#77fff9"/><stop offset="0.5" stop-color="#57fff8"/><stop offset="0.7" stop-color="#31fff6"/><stop offset="0.85" stop-color="#18fff5"/><stop offset="1.0" stop-color="#00fff4"/></linearGradient>
<linearGradient id="w151" gradientUnits="userSpaceOnUse" x1="1199.27" y1="391.47" x2="1137.32" y2="383.98"><stop offset="0" stop-color="#ffffff"/><stop offset="0.08" stop-color="#c7fff9"/><stop offset="0.2" stop-color="#9efff5"/><stop offset="0.35" stop-color="#77fff1"/><stop offset="0.5" stop-color="#57ffee"/><stop offset="0.7" stop-color="#31ffea"/><stop offset="0.85" stop-color="#18ffe7"/><stop offset="1.0" stop-color="#00ffe5"/></linearGradient>
<linearGradient id="w152" gradientUnits="userSpaceOnUse" x1="1199.27" y1="391.47" x2="1139.16" y2="379.33"><stop offset="0" stop-color="#ffffff"/><stop offset="0.08" stop-color="#c7fff6"/><stop offset="0.2" stop-color="#9effef"/><stop offset="0.35" stop-color="#77ffe9"/><stop offset="0.5" stop-color="#57ffe4"/><stop offset="0.7" stop-color="#31ffde"/><stop offset="0.85" stop-color="#18ffda"/><stop offset="1.0" stop-color="#00ffd6"/></linearGradient>
<linearGradient id="w153" gradientUnits="userSpaceOnUse" x1="1199.27" y1="391.47" x2="1141.01" y2="374.69"><stop offset="0" stop-color="#ffffff"/><stop offset="0.08" stop-color="#c7fff3"/><stop offset="0.2" stop-color="#9effea"/><stop offset="0.35" stop-color="#77ffe2"/><stop offset="0.5" stop-color="#57ffdb"/><stop offset="0.7" stop-color="#31ffd2"/><stop offset="0.85" stop-color="#18ffcd"/><stop offset="1.0" stop-color="#00ffc8"/></linearGradient>
<linearGradient id="w154" gradientUnits="userSpaceOnUse" x1="1199.27" y1="391.47" x2="1142.85" y2="370.04"><stop offset="0" stop-color="#ffffff"/><stop offset="0.08" stop-color="#c7fff0"/><stop offset="0.2" stop-color="#9effe5"/><stop offset="0.35" stop-color="#77ffdb"/><stop offset="0.5" stop-color="#57ffd2"/><stop offset="0.7" stop-color="#31ffc8"/><stop offset="0.85" stop-color="#18ffc1"/><stop offset="1.0" stop-color="#00ffbb"/></linearGradient>
<linearGradient id="w155" gradientUnits="userSpaceOnUse" x1="1199.27" y1="391.47" x2="1144.70" y2="365.39"><stop offset="0" stop-color="#ffffff"/><stop offset="0.08" stop-color="#c7ffed"/><stop offset="0.2" stop-color="#9effe0"/><stop offset="0.35" stop-color="#77ffd4"/><stop offset="0.5" stop-color="#57ffca"/><stop offset="0.7" stop-color="#31ffbe"/><stop offset="0.85" stop-color="#18ffb6"/><stop offset="1.0" stop-color="#00ffae"/></linearGradient>
<linearGradient id="w156" gradientUnits="userSpaceOnUse" x1="1199.27" y1="391.47" x2="1146.54" y2="360.74"><stop offset="0" stop-color="#ffffff"/><stop offset="0.08" stop-color="#c7ffeb"/><stop offset="0.2" stop-color="#9effdc"/><stop offset="0.35" stop-color="#77ffce"/><stop offset="0.5" stop-color="#57ffc2"/><stop offset="0.7" stop-color="#31ffb4"/><stop offset="0.85" stop-color="#18ffab"/><stop offset="1.0" stop-color="#00ffa3"/></linearGradient>
<linearGradient id="w157" gradientUnits="userSpaceOnUse" x1="1199.27" y1="391.47" x2="1148.39" y2="356.09"><stop offset="0" stop-color="#ffffff"/><stop offset="0.08" stop-color="#c7ffe8"/><stop offset="0.2" stop-color="#9effd8"/><stop offset="0.35" stop-color="#77ffc8"/><stop offset="0.5" stop-color="#57ffbb"/><stop offset="0.7" stop-color="#31ffac"/><stop offset="0.85" stop-color="#18ffa1"/><stop offset="1.0" stop-color="#00ff98"/></linearGradient>
<linearGradient id="w158" gradientUnits="userSpaceOnUse" x1="1199.27" y1="391.47" x2="1150.23" y2="351.44"><stop offset="0" stop-color="#ffffff"/><stop offset="0.08" stop-color="#c7ffe6"/><stop offset="0.2" stop-color="#9effd4"/><stop offset="0.35" stop-color="#77ffc2"/><stop offset="0.5" stop-color="#57ffb4"/><stop offset="0.7" stop-color="#31ffa3"/><stop offset="0.85" stop-color="#18ff98"/><stop offset="1.0" stop-color="#00ff8d"/></linearGradient>
<linearGradient id="w159" gradientUnits="userSpaceOnUse" x1="1199.27" y1="391.47" x2="1152.08" y2="346.79"><stop offset="0" stop-color="#ffffff"/><stop offset="0.08" stop-color="#c7ffe4"/><stop offset="0.2" stop-color="#9effd0"/><stop offset="0.35" stop-color="#77ffbd"/><stop offset="0.5" stop-color="#57ffad"/><stop offset="0.7" stop-color="#31ff9b"/><stop offset="0.85" stop-color="#18ff8f"/><stop offset="1.0" stop-color="#00ff83"/></linearGradient>
<linearGradient id="w160" gradientUnits="userSpaceOnUse" x1="1199.27" y1="391.47" x2="1153.92" y2="342.15"><stop offset="0" stop-color="#ffffff"/><stop offset="0.08" stop-color="#c7ffe2"/><stop offset="0.2" stop-color="#9effcc"/><stop offset="0.35" stop-color="#77ffb8"/><stop offset="0.5" stop-color="#57ffa7"/><stop offset="0.7" stop-color="#31ff93"/><stop offset="0.85" stop-color="#18ff86"/><stop offset="1.0" stop-color="#00ff7a"/></linearGradient>
<linearGradient id="w161" gradientUnits="userSpaceOnUse" x1="1199.27" y1="391.47" x2="1155.77" y2="337.50"><stop offset="0" stop-color="#ffffff"/><stop offset="0.08" stop-color="#c7ffe0"/><stop offset="0.2" stop-color="#9effc9"/><stop offset="0.35" stop-color="#77ffb3"/><stop offset="0.5" stop-color="#57ffa1"/><stop offset="0.7" stop-color="#31ff8c"/><stop offset="0.85" stop-color="#18ff7e"/><stop offset="1.0" stop-color="#00ff71"/></linearGradient>
<linearGradient id="w162" gradientUnits="userSpaceOnUse" x1="1199.27" y1="391.47" x2="1157.61" y2="332.85"><stop offset="0" stop-color="#ffffff"/><stop offset="0.08" stop-color="#c7ffde"/><stop offset="0.2" stop-color="#9effc6"/><stop offset="0.35" stop-color="#77ffaf"/><stop offset="0.5" stop-color="#57ff9b"/><stop offset="0.7" stop-color="#31ff85"/><stop offset="0.85" stop-color="#18ff76"/><stop offset="1.0" stop-color="#00ff68"/></linearGradient>
<linearGradient id="w163" gradientUnits="userSpaceOnUse" x1="1199.27" y1="391.47" x2="1159.46" y2="328.20"><stop offset="0" stop-color="#ffffff"/><stop offset="0.08" stop-color="#c7ffdc"/><stop offset="0.2" stop-color="#9effc2"/><stop offset="0.35" stop-color="#77ffaa"/><stop offset="0.5" stop-color="#57ff96"/><stop offset="0.7" stop-color="#31ff7e"/><stop offset="0.85" stop-color="#18ff6f"/><stop offset="1.0" stop-color="#00ff60"/></linearGradient>
<linearGradient id="w164" gradientUnits="userSpaceOnUse" x1="1199.27" y1="391.47" x2="1161.30" y2="323.55"><stop offset="0" stop-color="#ffffff"/><stop offset="0.08" stop-color="#c7ffda"/><stop offset="0.2" stop-color="#9effbf"/><stop offset="0.35" stop-color="#77ffa6"/><stop offset="0.5" stop-color="#57ff91"/><stop offset="0.7" stop-color="#31ff78"/><stop offset="0.85" stop-color="#18ff68"/><stop offset="1.0" stop-color="#00ff58"/></linearGradient>
<linearGradient id="w165" gradientUnits="userSpaceOnUse" x1="1199.27" y1="391.47" x2="1163.15" y2="318.90"><stop offset="0" stop-color="#ffffff"/><stop offset="0.08" stop-color="#c7ffd9"/><stop offset="0.2" stop-color="#9effbd"/><stop offset="0.35" stop-color="#77ffa2"/><stop offset="0.5" stop-color="#57ff8c"/><stop offset="0.7" stop-color="#31ff72"/><stop offset="0.85" stop-color="#18ff61"/><stop offset="1.0" stop-color="#00ff51"/></linearGradient>
<linearGradient id="w166" gradientUnits="userSpaceOnUse" x1="1199.27" y1="391.47" x2="1164.99" y2="314.25"><stop offset="0" stop-color="#ffffff"/><stop offset="0.08" stop-color="#c7ffd7"/><stop offset="0.2" stop-color="#9effba"/><stop offset="0.35" stop-color="#77ff9e"/><stop offset="0.5" stop-color="#57ff87"/><stop offset="0.7" stop-color="#31ff6c"/><stop offset="0.85" stop-color="#18ff5a"/><stop offset="1.0" stop-color="#00ff49"/></linearGradient>
<linearGradient id="w167" gradientUnits="userSpaceOnUse" x1="1199.27" y1="391.47" x2="1166.84" y2="309.61"><stop offset="0" stop-color="#ffffff"/><stop offset="0.08" stop-color="#c7ffd6"/><stop offset="0.2" stop-color="#9effb7"/><stop offset="0.35" stop-color="#77ff9b"/><stop offset="0.5" stop-color="#57ff83"/><stop offset="0.7" stop-color="#31ff67"/><stop offset="0.85" stop-color="#18ff54"/><stop offset="1.0" stop-color="#00ff42"/></linearGradient>
<linearGradient id="w168" gradientUnits="userSpaceOnUse" x1="1199.27" y1="391.47" x2="1168.68" y2="304.96"><stop offset="0" stop-color="#ffffff"/><stop offset="0.08" stop-color="#c7ffd4"/><stop offset="0.2" stop-color="#9effb5"/><stop offset="0.35" stop-color="#77ff97"/><stop offset="0.5" stop-color="#57ff7e"/><stop offset="0.7" stop-color="#31ff61"/><stop offset="0.85" stop-color="#18ff4e"/><stop offset="1.0" stop-color="#00ff3c"/></linearGradient>
<linearGradient id="w169" gradientUnits="userSpaceOnUse" x1="1199.27" y1="391.47" x2="1170.53" y2="300.31"><stop offset="0" stop-color="#ffffff"/><stop offset="0.08" stop-color="#c7ffd3"/><stop offset="0.2" stop-color="#9effb2"/><stop offset="0.35" stop-color="#77ff94"/><stop offset="0.5" stop-color="#57ff7a"/><stop offset="0.7" stop-color="#31ff5c"/><stop offset="0.85" stop-color="#18ff48"/><stop offset="1.0" stop-color="#00ff36"/></linearGradient>
<linearGradient id="w170" gradientUnits="userSpaceOnUse" x1="1199.27" y1="391.47" x2="1172.37" y2="295.66"><stop offset="0" stop-color="#ffffff"/><stop offset="0.08" stop-color="#c7ffd1"/><stop offset="0.2" stop-color="#9effb0"/><stop offset="0.35" stop-color="#77ff90"/><stop offset="0.5" stop-color="#57ff76"/><stop offset="0.7" stop-color="#31ff57"/><stop offset="0.85" stop-color="#18ff43"/><stop offset="1.0" stop-color="#00ff30"/></linearGradient>
<linearGradient id="w171" gradientUnits="userSpaceOnUse" x1="1199.27" y1="391.47" x2="1174.22" y2="291.01"><stop offset="0" stop-color="#ffffff"/><stop offset="0.08" stop-color="#c7ffd0"/><stop offset="0.2" stop-color="#9effae"/><stop offset="0.35" stop-color="#77ff8d"/><stop offset="0.5" stop-color="#57ff72"/><stop offset="0.7" stop-color="#31ff53"/><stop offset="0.85" stop-color="#18ff3e"/><stop offset="1.0" stop-color="#00ff2a"/></linearGradient>
<linearGradient id="w172" gradientUnits="userSpaceOnUse" x1="1199.27" y1="391.47" x2="1176.06" y2="286.36"><stop offset="0" stop-color="#ffffff"/><stop offset="0.08" stop-color="#c7ffcf"/><stop offset="0.2" stop-color="#9effac"/><stop offset="0.35" stop-color="#77ff8a"/><stop offset="0.5" stop-color="#57ff6f"/><stop offset="0.7" stop-color="#31ff4e"/><stop offset="0.85" stop-color="#18ff38"/><stop offset="1.0" stop-color="#00ff24"/></linearGradient>
<linearGradient id="w173" gradientUnits="userSpaceOnUse" x1="1199.27" y1="391.47" x2="1177.91" y2="281.72"><stop offset="0" stop-color="#ffffff"/><stop offset="0.08" stop-color="#c7ffce"/><stop offset="0.2" stop-color="#9effaa"/><stop offset="0.35" stop-color="#77ff88"/><stop offset="0.5" stop-color="#57ff6b"/><stop offset="0.7" stop-color="#31ff4a"/><stop offset="0.85" stop-color="#18ff34"/><stop offset="1.0" stop-color="#00ff1f"/></linearGradient>
<linearGradient id="w174" gradientUnits="userSpaceOnUse" x1="1199.27" y1="391.47" x2="1179.75" y2="277.07"><stop offset="0" stop-color="#ffffff"/><stop offset="0.08" stop-color="#c7ffcd"/><stop offset="0.2" stop-color="#9effa8"/><stop offset="0.35" stop-color="#77ff85"/><stop offset="0.5" stop-color="#57ff68"/><stop offset="0.7" stop-color="#31ff46"/><stop offset="0.85" stop-color="#18ff2f"/><stop offset="1.0" stop-color="#00ff19"/></linearGradient>
<linearGradient id="w175" gradientUnits="userSpaceOnUse" x1="1199.27" y1="391.47" x2="1181.60" y2="272.42"><stop offset="0" stop-color="#ffffff"/><stop offset="0.08" stop-color="#c7ffcb"/><stop offset="0.2" stop-color="#9effa6"/><stop offset="0.35" stop-color="#77ff82"/><stop offset="0.5" stop-color="#57ff64"/><stop offset="0.7" stop-color="#31ff42"/><stop offset="0.85" stop-color="#18ff2a"/><stop offset="1.0" stop-color="#00ff14"/></linearGradient>
<linearGradient id="w176" gradientUnits="userSpaceOnUse" x1="1199.27" y1="391.47" x2="1183.44" y2="267.77"><stop offset="0" stop-color="#ffffff"/><stop offset="0.08" stop-color="#c7ffca"/><stop offset="0.2" stop-color="#9effa4"/><stop offset="0.35" stop-color="#77ff80"/><stop offset="0.5" stop-color="#57ff61"/><stop offset="0.7" stop-color="#31ff3e"/><stop offset="0.85" stop-color="#18ff26"/><stop offset="1.0" stop-color="#00ff10"/></linearGradient>
<linearGradient id="w177" gradientUnits="userSpaceOnUse" x1="1199.27" y1="391.47" x2="1185.29" y2="263.12"><stop offset="0" stop-color="#ffffff"/><stop offset="0.08" stop-color="#c7ffc9"/><stop offset="0.2" stop-color="#9effa2"/><stop offset="0.35" stop-color="#77ff7d"/><stop offset="0.5" stop-color="#57ff5e"/><stop offset="0.7" stop-color="#31ff3a"/><stop offset="0.85" stop-color="#18ff22"/><stop offset="1.0" stop-color="#00ff0b"/></linearGradient>
<linearGradient id="w178" gradientUnits="userSpaceOnUse" x1="1199.27" y1="391.47" x2="1187.13" y2="258.47"><stop offset="0" stop-color="#ffffff"/><stop offset="0.08" stop-color="#c7ffc8"/><stop offset="0.2" stop-color="#9effa0"/><stop offset="0.35" stop-color="#77ff7b"/><stop offset="0.5" stop-color="#57ff5b"/><stop offset="0.7" stop-color="#31ff36"/><stop offset="0.85" stop-color="#18ff1e"/><stop offset="1.0" stop-color="#00ff06"/></linearGradient>
<linearGradient id="w179" gradientUnits="userSpaceOnUse" x1="1199.27" y1="391.47" x2="1188.98" y2="253.82"><stop offset="0" stop-color="#ffffff"/><stop offset="0.08" stop-color="#c7ffc7"/><stop offset="0.2" stop-color="#9eff9f"/><stop offset="0.35" stop-color="#77ff78"/><stop offset="0.5" stop-color="#57ff58"/><stop offset="0.7" stop-color="#31ff33"/><stop offset="0.85" stop-color="#18ff1a"/><stop offset="1.0" stop-color="#00ff02"/></linearGradient>
<clipPath id="triclip"><path d="M1189.9 251.5 L1440.8 391.0 L1079.2 530.4Z"/></clipPath>
<radialGradient id="wglow" gradientUnits="userSpaceOnUse" cx="1199.3" cy="391.5" r="14"><stop offset="0" stop-color="#fff" stop-opacity="1"/><stop offset="0.5" stop-color="#fff" stop-opacity="0.6"/><stop offset="1" stop-color="#fff" stop-opacity="0"/></radialGradient>
<clipPath id="insclip"><rect x="1373.3" y="133.0" width="210.0" height="162.39999999999998"/></clipPath>
<linearGradient id="iw180" gradientUnits="userSpaceOnUse" x1="1199.27" y1="391.47" x2="1235.57" y2="276.88"><stop offset="0" stop-color="#ffffff"/><stop offset="0.5" stop-color="#9cff57"/><stop offset="0.65" stop-color="#8bff3a"/><stop offset="0.8" stop-color="#7cff20"/><stop offset="0.9" stop-color="#72ff10"/><stop offset="1.0" stop-color="#69ff00"/></linearGradient>
<linearGradient id="iw181" gradientUnits="userSpaceOnUse" x1="1199.27" y1="391.47" x2="1236.57" y2="277.44"><stop offset="0" stop-color="#ffffff"/><stop offset="0.5" stop-color="#9eff57"/><stop offset="0.65" stop-color="#8dff3a"/><stop offset="0.8" stop-color="#7eff20"/><stop offset="0.9" stop-color="#75ff10"/><stop offset="1.0" stop-color="#6cff00"/></linearGradient>
<linearGradient id="iw182" gradientUnits="userSpaceOnUse" x1="1199.27" y1="391.47" x2="1237.57" y2="278.00"><stop offset="0" stop-color="#ffffff"/><stop offset="0.5" stop-color="#a0ff57"/><stop offset="0.65" stop-color="#90ff3a"/><stop offset="0.8" stop-color="#81ff20"/><stop offset="0.9" stop-color="#77ff10"/><stop offset="1.0" stop-color="#6fff00"/></linearGradient>
<linearGradient id="iw183" gradientUnits="userSpaceOnUse" x1="1199.27" y1="391.47" x2="1238.58" y2="278.55"><stop offset="0" stop-color="#ffffff"/><stop offset="0.5" stop-color="#a2ff57"/><stop offset="0.65" stop-color="#92ff3a"/><stop offset="0.8" stop-color="#83ff20"/><stop offset="0.9" stop-color="#7aff10"/><stop offset="1.0" stop-color="#72ff00"/></linearGradient>
<linearGradient id="iw184" gradientUnits="userSpaceOnUse" x1="1199.27" y1="391.47" x2="1239.58" y2="279.11"><stop offset="0" stop-color="#ffffff"/><stop offset="0.5" stop-color="#a4ff57"/><stop offset="0.65" stop-color="#94ff3a"/><stop offset="0.8" stop-color="#86ff20"/><stop offset="0.9" stop-color="#7dff10"/><stop offset="1.0" stop-color="#74ff00"/></linearGradient>
<linearGradient id="iw185" gradientUnits="userSpaceOnUse" x1="1199.27" y1="391.47" x2="1240.59" y2="279.67"><stop offset="0" stop-color="#ffffff"/><stop offset="0.5" stop-color="#a6ff57"/><stop offset="0.65" stop-color="#96ff3a"/><stop offset="0.8" stop-color="#88ff20"/><stop offset="0.9" stop-color="#80ff10"/><stop offset="1.0" stop-color="#77ff00"/></linearGradient>
<linearGradient id="iw186" gradientUnits="userSpaceOnUse" x1="1199.27" y1="391.47" x2="1241.59" y2="280.23"><stop offset="0" stop-color="#ffffff"/><stop offset="0.5" stop-color="#a7ff57"/><stop offset="0.65" stop-color="#99ff3a"/><stop offset="0.8" stop-color="#8bff20"/><stop offset="0.9" stop-color="#82ff10"/><stop offset="1.0" stop-color="#7aff00"/></linearGradient>
<linearGradient id="iw187" gradientUnits="userSpaceOnUse" x1="1199.27" y1="391.47" x2="1242.59" y2="280.79"><stop offset="0" stop-color="#ffffff"/><stop offset="0.5" stop-color="#a9ff57"/><stop offset="0.65" stop-color="#9bff3a"/><stop offset="0.8" stop-color="#8eff20"/><stop offset="0.9" stop-color="#85ff10"/><stop offset="1.0" stop-color="#7dff00"/></linearGradient>
<linearGradient id="iw188" gradientUnits="userSpaceOnUse" x1="1199.27" y1="391.47" x2="1243.60" y2="281.34"><stop offset="0" stop-color="#ffffff"/><stop offset="0.5" stop-color="#abff57"/><stop offset="0.65" stop-color="#9dff3a"/><stop offset="0.8" stop-color="#90ff20"/><stop offset="0.9" stop-color="#88ff10"/><stop offset="1.0" stop-color="#80ff00"/></linearGradient>
<linearGradient id="iw189" gradientUnits="userSpaceOnUse" x1="1199.27" y1="391.47" x2="1244.60" y2="281.90"><stop offset="0" stop-color="#ffffff"/><stop offset="0.5" stop-color="#aeff57"/><stop offset="0.65" stop-color="#a0ff3a"/><stop offset="0.8" stop-color="#93ff20"/><stop offset="0.9" stop-color="#8bff10"/><stop offset="1.0" stop-color="#83ff00"/></linearGradient>
<linearGradient id="iw190" gradientUnits="userSpaceOnUse" x1="1199.27" y1="391.47" x2="1245.60" y2="282.46"><stop offset="0" stop-color="#ffffff"/><stop offset="0.5" stop-color="#b0ff57"/><stop offset="0.65" stop-color="#a2ff3a"/><stop offset="0.8" stop-color="#96ff20"/><stop offset="0.9" stop-color="#8eff10"/><stop offset="1.0" stop-color="#87ff00"/></linearGradient>
<linearGradient id="iw191" gradientUnits="userSpaceOnUse" x1="1199.27" y1="391.47" x2="1246.61" y2="283.02"><stop offset="0" stop-color="#ffffff"/><stop offset="0.5" stop-color="#b2ff57"/><stop offset="0.65" stop-color="#a4ff3a"/><stop offset="0.8" stop-color="#98ff20"/><stop offset="0.9" stop-color="#91ff10"/><stop offset="1.0" stop-color="#8aff00"/></linearGradient>
<linearGradient id="iw192" gradientUnits="userSpaceOnUse" x1="1199.27" y1="391.47" x2="1247.61" y2="283.57"><stop offset="0" stop-color="#ffffff"/><stop offset="0.5" stop-color="#b4ff57"/><stop offset="0.65" stop-color="#a7ff3a"/><stop offset="0.8" stop-color="#9bff20"/><stop offset="0.9" stop-color="#94ff10"/><stop offset="1.0" stop-color="#8dff00"/></linearGradient>
<linearGradient id="iw193" gradientUnits="userSpaceOnUse" x1="1199.27" y1="391.47" x2="1248.62" y2="284.13"><stop offset="0" stop-color="#ffffff"/><stop offset="0.5" stop-color="#b6ff57"/><stop offset="0.65" stop-color="#a9ff3a"/><stop offset="0.8" stop-color="#9eff20"/><stop offset="0.9" stop-color="#97ff10"/><stop offset="1.0" stop-color="#90ff00"/></linearGradient>
<linearGradient id="iw194" gradientUnits="userSpaceOnUse" x1="1199.27" y1="391.47" x2="1249.62" y2="284.69"><stop offset="0" stop-color="#ffffff"/><stop offset="0.5" stop-color="#b8ff57"/><stop offset="0.65" stop-color="#acff3a"/><stop offset="0.8" stop-color="#a1ff20"/><stop offset="0.9" stop-color="#9aff10"/><stop offset="1.0" stop-color="#93ff00"/></linearGradient>
<linearGradient id="iw195" gradientUnits="userSpaceOnUse" x1="1199.27" y1="391.47" x2="1250.62" y2="285.25"><stop offset="0" stop-color="#ffffff"/><stop offset="0.5" stop-color="#baff57"/><stop offset="0.65" stop-color="#aeff3a"/><stop offset="0.8" stop-color="#a4ff20"/><stop offset="0.9" stop-color="#9dff10"/><stop offset="1.0" stop-color="#97ff00"/></linearGradient>
<linearGradient id="iw196" gradientUnits="userSpaceOnUse" x1="1199.27" y1="391.47" x2="1251.63" y2="285.81"><stop offset="0" stop-color="#ffffff"/><stop offset="0.5" stop-color="#bcff57"/><stop offset="0.65" stop-color="#b1ff3a"/><stop offset="0.8" stop-color="#a7ff20"/><stop offset="0.9" stop-color="#a0ff10"/><stop offset="1.0" stop-color="#9aff00"/></linearGradient>
<linearGradient id="iw197" gradientUnits="userSpaceOnUse" x1="1199.27" y1="391.47" x2="1252.63" y2="286.36"><stop offset="0" stop-color="#ffffff"/><stop offset="0.5" stop-color="#beff57"/><stop offset="0.65" stop-color="#b3ff3a"/><stop offset="0.8" stop-color="#a9ff20"/><stop offset="0.9" stop-color="#a3ff10"/><stop offset="1.0" stop-color="#9dff00"/></linearGradient>
<linearGradient id="iw198" gradientUnits="userSpaceOnUse" x1="1199.27" y1="391.47" x2="1253.63" y2="286.92"><stop offset="0" stop-color="#ffffff"/><stop offset="0.5" stop-color="#c1ff57"/><stop offset="0.65" stop-color="#b6ff3a"/><stop offset="0.8" stop-color="#acff20"/><stop offset="0.9" stop-color="#a6ff10"/><stop offset="1.0" stop-color="#a1ff00"/></linearGradient>
<linearGradient id="iw199" gradientUnits="userSpaceOnUse" x1="1199.27" y1="391.47" x2="1254.64" y2="287.48"><stop offset="0" stop-color="#ffffff"/><stop offset="0.5" stop-color="#c3ff57"/><stop offset="0.65" stop-color="#b9ff3a"/><stop offset="0.8" stop-color="#afff20"/><stop offset="0.9" stop-color="#aaff10"/><stop offset="1.0" stop-color="#a4ff00"/></linearGradient>
<linearGradient id="iw200" gradientUnits="userSpaceOnUse" x1="1199.27" y1="391.47" x2="1255.64" y2="288.04"><stop offset="0" stop-color="#ffffff"/><stop offset="0.5" stop-color="#c5ff57"/><stop offset="0.65" stop-color="#bbff3a"/><stop offset="0.8" stop-color="#b2ff20"/><stop offset="0.9" stop-color="#adff10"/><stop offset="1.0" stop-color="#a7ff00"/></linearGradient>
<linearGradient id="iw201" gradientUnits="userSpaceOnUse" x1="1199.27" y1="391.47" x2="1256.64" y2="288.60"><stop offset="0" stop-color="#ffffff"/><stop offset="0.5" stop-color="#c8ff57"/><stop offset="0.65" stop-color="#beff3a"/><stop offset="0.8" stop-color="#b5ff20"/><stop offset="0.9" stop-color="#b0ff10"/><stop offset="1.0" stop-color="#abff00"/></linearGradient>
<linearGradient id="iw202" gradientUnits="userSpaceOnUse" x1="1199.27" y1="391.47" x2="1257.65" y2="289.15"><stop offset="0" stop-color="#ffffff"/><stop offset="0.5" stop-color="#caff57"/><stop offset="0.65" stop-color="#c1ff3a"/><stop offset="0.8" stop-color="#b9ff20"/><stop offset="0.9" stop-color="#b3ff10"/><stop offset="1.0" stop-color="#aeff00"/></linearGradient>
<linearGradient id="iw203" gradientUnits="userSpaceOnUse" x1="1199.27" y1="391.47" x2="1258.65" y2="289.71"><stop offset="0" stop-color="#ffffff"/><stop offset="0.5" stop-color="#ccff57"/><stop offset="0.65" stop-color="#c4ff3a"/><stop offset="0.8" stop-color="#bcff20"/><stop offset="0.9" stop-color="#b7ff10"/><stop offset="1.0" stop-color="#b2ff00"/></linearGradient>
<linearGradient id="iw204" gradientUnits="userSpaceOnUse" x1="1199.27" y1="391.47" x2="1259.66" y2="290.27"><stop offset="0" stop-color="#ffffff"/><stop offset="0.5" stop-color="#cfff57"/><stop offset="0.65" stop-color="#c6ff3a"/><stop offset="0.8" stop-color="#bfff20"/><stop offset="0.9" stop-color="#baff10"/><stop offset="1.0" stop-color="#b6ff00"/></linearGradient>
<linearGradient id="iw205" gradientUnits="userSpaceOnUse" x1="1199.27" y1="391.47" x2="1260.66" y2="290.83"><stop offset="0" stop-color="#ffffff"/><stop offset="0.5" stop-color="#d1ff57"/><stop offset="0.65" stop-color="#c9ff3a"/><stop offset="0.8" stop-color="#c2ff20"/><stop offset="0.9" stop-color="#beff10"/><stop offset="1.0" stop-color="#b9ff00"/></linearGradient>
<linearGradient id="iw206" gradientUnits="userSpaceOnUse" x1="1199.27" y1="391.47" x2="1261.66" y2="291.38"><stop offset="0" stop-color="#ffffff"/><stop offset="0.5" stop-color="#d3ff57"/><stop offset="0.65" stop-color="#ccff3a"/><stop offset="0.8" stop-color="#c5ff20"/><stop offset="0.9" stop-color="#c1ff10"/><stop offset="1.0" stop-color="#bdff00"/></linearGradient>
<linearGradient id="iw207" gradientUnits="userSpaceOnUse" x1="1199.27" y1="391.47" x2="1262.67" y2="291.94"><stop offset="0" stop-color="#ffffff"/><stop offset="0.5" stop-color="#d6ff57"/><stop offset="0.65" stop-color="#cfff3a"/><stop offset="0.8" stop-color="#c8ff20"/><stop offset="0.9" stop-color="#c4ff10"/><stop offset="1.0" stop-color="#c1ff00"/></linearGradient>
<linearGradient id="iw208" gradientUnits="userSpaceOnUse" x1="1199.27" y1="391.47" x2="1263.67" y2="292.50"><stop offset="0" stop-color="#ffffff"/><stop offset="0.5" stop-color="#d8ff57"/><stop offset="0.65" stop-color="#d2ff3a"/><stop offset="0.8" stop-color="#ccff20"/><stop offset="0.9" stop-color="#c8ff10"/><stop offset="1.0" stop-color="#c4ff00"/></linearGradient>
<linearGradient id="iw209" gradientUnits="userSpaceOnUse" x1="1199.27" y1="391.47" x2="1264.67" y2="293.06"><stop offset="0" stop-color="#ffffff"/><stop offset="0.5" stop-color="#dbff57"/><stop offset="0.65" stop-color="#d5ff3a"/><stop offset="0.8" stop-color="#cfff20"/><stop offset="0.9" stop-color="#ccff10"/><stop offset="1.0" stop-color="#c8ff00"/></linearGradient>
<linearGradient id="iw210" gradientUnits="userSpaceOnUse" x1="1199.27" y1="391.47" x2="1265.68" y2="293.62"><stop offset="0" stop-color="#ffffff"/><stop offset="0.5" stop-color="#ddff57"/><stop offset="0.65" stop-color="#d8ff3a"/><stop offset="0.8" stop-color="#d2ff20"/><stop offset="0.9" stop-color="#cfff10"/><stop offset="1.0" stop-color="#ccff00"/></linearGradient>
<linearGradient id="iw211" gradientUnits="userSpaceOnUse" x1="1199.27" y1="391.47" x2="1266.68" y2="294.17"><stop offset="0" stop-color="#ffffff"/><stop offset="0.5" stop-color="#e0ff57"/><stop offset="0.65" stop-color="#dbff3a"/><stop offset="0.8" stop-color="#d6ff20"/><stop offset="0.9" stop-color="#d3ff10"/><stop offset="1.0" stop-color="#d0ff00"/></linearGradient>
<linearGradient id="iw212" gradientUnits="userSpaceOnUse" x1="1199.27" y1="391.47" x2="1267.69" y2="294.73"><stop offset="0" stop-color="#ffffff"/><stop offset="0.5" stop-color="#e3ff57"/><stop offset="0.65" stop-color="#deff3a"/><stop offset="0.8" stop-color="#d9ff20"/><stop offset="0.9" stop-color="#d7ff10"/><stop offset="1.0" stop-color="#d4ff00"/></linearGradient>
<linearGradient id="iw213" gradientUnits="userSpaceOnUse" x1="1199.27" y1="391.47" x2="1268.69" y2="295.29"><stop offset="0" stop-color="#ffffff"/><stop offset="0.5" stop-color="#e5ff57"/><stop offset="0.65" stop-color="#e1ff3a"/><stop offset="0.8" stop-color="#ddff20"/><stop offset="0.9" stop-color="#daff10"/><stop offset="1.0" stop-color="#d8ff00"/></linearGradient>
<linearGradient id="iw214" gradientUnits="userSpaceOnUse" x1="1199.27" y1="391.47" x2="1269.69" y2="295.85"><stop offset="0" stop-color="#ffffff"/><stop offset="0.5" stop-color="#e8ff57"/><stop offset="0.65" stop-color="#e4ff3a"/><stop offset="0.8" stop-color="#e0ff20"/><stop offset="0.9" stop-color="#deff10"/><stop offset="1.0" stop-color="#dcff00"/></linearGradient>
<linearGradient id="iw215" gradientUnits="userSpaceOnUse" x1="1199.27" y1="391.47" x2="1270.70" y2="296.40"><stop offset="0" stop-color="#ffffff"/><stop offset="0.5" stop-color="#ebff57"/><stop offset="0.65" stop-color="#e7ff3a"/><stop offset="0.8" stop-color="#e4ff20"/><stop offset="0.9" stop-color="#e2ff10"/><stop offset="1.0" stop-color="#e0ff00"/></linearGradient>
<linearGradient id="iw216" gradientUnits="userSpaceOnUse" x1="1199.27" y1="391.47" x2="1271.70" y2="296.96"><stop offset="0" stop-color="#ffffff"/><stop offset="0.5" stop-color="#edff57"/><stop offset="0.65" stop-color="#eaff3a"/><stop offset="0.8" stop-color="#e7ff20"/><stop offset="0.9" stop-color="#e6ff10"/><stop offset="1.0" stop-color="#e4ff00"/></linearGradient>
<linearGradient id="iw217" gradientUnits="userSpaceOnUse" x1="1199.27" y1="391.47" x2="1272.70" y2="297.52"><stop offset="0" stop-color="#ffffff"/><stop offset="0.5" stop-color="#f0ff57"/><stop offset="0.65" stop-color="#edff3a"/><stop offset="0.8" stop-color="#ebff20"/><stop offset="0.9" stop-color="#eaff10"/><stop offset="1.0" stop-color="#e8ff00"/></linearGradient>
<linearGradient id="iw218" gradientUnits="userSpaceOnUse" x1="1199.27" y1="391.47" x2="1273.71" y2="298.08"><stop offset="0" stop-color="#ffffff"/><stop offset="0.5" stop-color="#f3ff57"/><stop offset="0.65" stop-color="#f1ff3a"/><stop offset="0.8" stop-color="#efff20"/><stop offset="0.9" stop-color="#eeff10"/><stop offset="1.0" stop-color="#edff00"/></linearGradient>
<linearGradient id="iw219" gradientUnits="userSpaceOnUse" x1="1199.27" y1="391.47" x2="1274.71" y2="298.64"><stop offset="0" stop-color="#ffffff"/><stop offset="0.5" stop-color="#f6ff57"/><stop offset="0.65" stop-color="#f4ff3a"/><stop offset="0.8" stop-color="#f3ff20"/><stop offset="0.9" stop-color="#f2ff10"/><stop offset="1.0" stop-color="#f1ff00"/></linearGradient>
<linearGradient id="iw220" gradientUnits="userSpaceOnUse" x1="1199.27" y1="391.47" x2="1275.71" y2="299.19"><stop offset="0" stop-color="#ffffff"/><stop offset="0.5" stop-color="#f8ff57"/><stop offset="0.65" stop-color="#f7ff3a"/><stop offset="0.8" stop-color="#f6ff20"/><stop offset="0.9" stop-color="#f6ff10"/><stop offset="1.0" stop-color="#f5ff00"/></linearGradient>
<linearGradient id="iw221" gradientUnits="userSpaceOnUse" x1="1199.27" y1="391.47" x2="1276.72" y2="299.75"><stop offset="0" stop-color="#ffffff"/><stop offset="0.5" stop-color="#fbff57"/><stop offset="0.65" stop-color="#fbff3a"/><stop offset="0.8" stop-color="#faff20"/><stop offset="0.9" stop-color="#faff10"/><stop offset="1.0" stop-color="#faff00"/></linearGradient>
<linearGradient id="iw222" gradientUnits="userSpaceOnUse" x1="1199.27" y1="391.47" x2="1277.72" y2="300.31"><stop offset="0" stop-color="#ffffff"/><stop offset="0.5" stop-color="#feff57"/><stop offset="0.65" stop-color="#feff3a"/><stop offset="0.8" stop-color="#feff20"/><stop offset="0.9" stop-color="#feff10"/><stop offset="1.0" stop-color="#feff00"/></linearGradient>
<linearGradient id="iw223" gradientUnits="userSpaceOnUse" x1="1199.27" y1="391.47" x2="1278.73" y2="300.87"><stop offset="0" stop-color="#ffffff"/><stop offset="0.5" stop-color="#fffd57"/><stop offset="0.65" stop-color="#fffc3a"/><stop offset="0.8" stop-color="#fffc20"/><stop offset="0.9" stop-color="#fffc10"/><stop offset="1.0" stop-color="#fffc00"/></linearGradient>
<linearGradient id="iw224" gradientUnits="userSpaceOnUse" x1="1199.27" y1="391.47" x2="1279.73" y2="301.42"><stop offset="0" stop-color="#ffffff"/><stop offset="0.5" stop-color="#fffa57"/><stop offset="0.65" stop-color="#fff93a"/><stop offset="0.8" stop-color="#fff820"/><stop offset="0.9" stop-color="#fff810"/><stop offset="1.0" stop-color="#fff700"/></linearGradient>
<linearGradient id="iw225" gradientUnits="userSpaceOnUse" x1="1199.27" y1="391.47" x2="1280.73" y2="301.98"><stop offset="0" stop-color="#ffffff"/><stop offset="0.5" stop-color="#fff757"/><stop offset="0.65" stop-color="#fff63a"/><stop offset="0.8" stop-color="#fff520"/><stop offset="0.9" stop-color="#fff410"/><stop offset="1.0" stop-color="#fff300"/></linearGradient>
<linearGradient id="iw226" gradientUnits="userSpaceOnUse" x1="1199.27" y1="391.47" x2="1281.74" y2="302.54"><stop offset="0" stop-color="#ffffff"/><stop offset="0.5" stop-color="#fff457"/><stop offset="0.65" stop-color="#fff33a"/><stop offset="0.8" stop-color="#fff120"/><stop offset="0.9" stop-color="#fff010"/><stop offset="1.0" stop-color="#ffef00"/></linearGradient>
<linearGradient id="iw227" gradientUnits="userSpaceOnUse" x1="1199.27" y1="391.47" x2="1282.74" y2="303.10"><stop offset="0" stop-color="#ffffff"/><stop offset="0.5" stop-color="#fff257"/><stop offset="0.65" stop-color="#ffef3a"/><stop offset="0.8" stop-color="#ffed20"/><stop offset="0.9" stop-color="#ffec10"/><stop offset="1.0" stop-color="#ffeb00"/></linearGradient>
<linearGradient id="iw228" gradientUnits="userSpaceOnUse" x1="1199.27" y1="391.47" x2="1283.74" y2="303.66"><stop offset="0" stop-color="#ffffff"/><stop offset="0.5" stop-color="#ffef57"/><stop offset="0.65" stop-color="#ffec3a"/><stop offset="0.8" stop-color="#ffea20"/><stop offset="0.9" stop-color="#ffe810"/><stop offset="1.0" stop-color="#ffe700"/></linearGradient>
<linearGradient id="iw229" gradientUnits="userSpaceOnUse" x1="1199.27" y1="391.47" x2="1284.75" y2="304.21"><stop offset="0" stop-color="#ffffff"/><stop offset="0.5" stop-color="#ffec57"/><stop offset="0.65" stop-color="#ffe93a"/><stop offset="0.8" stop-color="#ffe620"/><stop offset="0.9" stop-color="#ffe510"/><stop offset="1.0" stop-color="#ffe300"/></linearGradient>
<linearGradient id="iw230" gradientUnits="userSpaceOnUse" x1="1199.27" y1="391.47" x2="1285.75" y2="304.77"><stop offset="0" stop-color="#ffffff"/><stop offset="0.5" stop-color="#ffea57"/><stop offset="0.65" stop-color="#ffe63a"/><stop offset="0.8" stop-color="#ffe320"/><stop offset="0.9" stop-color="#ffe110"/><stop offset="1.0" stop-color="#ffdf00"/></linearGradient>
<linearGradient id="iw231" gradientUnits="userSpaceOnUse" x1="1199.27" y1="391.47" x2="1286.76" y2="305.33"><stop offset="0" stop-color="#ffffff"/><stop offset="0.5" stop-color="#ffe757"/><stop offset="0.65" stop-color="#ffe33a"/><stop offset="0.8" stop-color="#ffe020"/><stop offset="0.9" stop-color="#ffde10"/><stop offset="1.0" stop-color="#ffdb00"/></linearGradient>
<linearGradient id="iw232" gradientUnits="userSpaceOnUse" x1="1199.27" y1="391.47" x2="1287.76" y2="305.89"><stop offset="0" stop-color="#ffffff"/><stop offset="0.5" stop-color="#ffe557"/><stop offset="0.65" stop-color="#ffe13a"/><stop offset="0.8" stop-color="#ffdd20"/><stop offset="0.9" stop-color="#ffda10"/><stop offset="1.0" stop-color="#ffd800"/></linearGradient>
<linearGradient id="iw233" gradientUnits="userSpaceOnUse" x1="1199.27" y1="391.47" x2="1288.76" y2="306.45"><stop offset="0" stop-color="#ffffff"/><stop offset="0.5" stop-color="#ffe357"/><stop offset="0.65" stop-color="#ffde3a"/><stop offset="0.8" stop-color="#ffd920"/><stop offset="0.9" stop-color="#ffd710"/><stop offset="1.0" stop-color="#ffd400"/></linearGradient>
<linearGradient id="iw234" gradientUnits="userSpaceOnUse" x1="1199.27" y1="391.47" x2="1289.77" y2="307.00"><stop offset="0" stop-color="#ffffff"/><stop offset="0.5" stop-color="#ffe057"/><stop offset="0.65" stop-color="#ffdb3a"/><stop offset="0.8" stop-color="#ffd620"/><stop offset="0.9" stop-color="#ffd310"/><stop offset="1.0" stop-color="#ffd100"/></linearGradient>
<linearGradient id="iw235" gradientUnits="userSpaceOnUse" x1="1199.27" y1="391.47" x2="1290.77" y2="307.56"><stop offset="0" stop-color="#ffffff"/><stop offset="0.5" stop-color="#ffde57"/><stop offset="0.65" stop-color="#ffd83a"/><stop offset="0.8" stop-color="#ffd320"/><stop offset="0.9" stop-color="#ffd010"/><stop offset="1.0" stop-color="#ffcd00"/></linearGradient>
<linearGradient id="iw236" gradientUnits="userSpaceOnUse" x1="1199.27" y1="391.47" x2="1291.77" y2="308.12"><stop offset="0" stop-color="#ffffff"/><stop offset="0.5" stop-color="#ffdc57"/><stop offset="0.65" stop-color="#ffd63a"/><stop offset="0.8" stop-color="#ffd020"/><stop offset="0.9" stop-color="#ffcd10"/><stop offset="1.0" stop-color="#ffca00"/></linearGradient>
<linearGradient id="iw237" gradientUnits="userSpaceOnUse" x1="1199.27" y1="391.47" x2="1292.78" y2="308.68"><stop offset="0" stop-color="#ffffff"/><stop offset="0.5" stop-color="#ffda57"/><stop offset="0.65" stop-color="#ffd33a"/><stop offset="0.8" stop-color="#ffce20"/><stop offset="0.9" stop-color="#ffca10"/><stop offset="1.0" stop-color="#ffc600"/></linearGradient>
<linearGradient id="iw238" gradientUnits="userSpaceOnUse" x1="1199.27" y1="391.47" x2="1293.78" y2="309.23"><stop offset="0" stop-color="#ffffff"/><stop offset="0.5" stop-color="#ffd857"/><stop offset="0.65" stop-color="#ffd13a"/><stop offset="0.8" stop-color="#ffcb20"/><stop offset="0.9" stop-color="#ffc710"/><stop offset="1.0" stop-color="#ffc300"/></linearGradient>
<linearGradient id="iw239" gradientUnits="userSpaceOnUse" x1="1199.27" y1="391.47" x2="1294.78" y2="309.79"><stop offset="0" stop-color="#ffffff"/><stop offset="0.5" stop-color="#ffd557"/><stop offset="0.65" stop-color="#ffce3a"/><stop offset="0.8" stop-color="#ffc820"/><stop offset="0.9" stop-color="#ffc410"/><stop offset="1.0" stop-color="#ffc000"/></linearGradient>
<linearGradient id="iw240" gradientUnits="userSpaceOnUse" x1="1199.27" y1="391.47" x2="1295.79" y2="310.35"><stop offset="0" stop-color="#ffffff"/><stop offset="0.5" stop-color="#ffd357"/><stop offset="0.65" stop-color="#ffcc3a"/><stop offset="0.8" stop-color="#ffc520"/><stop offset="0.9" stop-color="#ffc110"/><stop offset="1.0" stop-color="#ffbd00"/></linearGradient>
<linearGradient id="iw241" gradientUnits="userSpaceOnUse" x1="1199.27" y1="391.47" x2="1296.79" y2="310.91"><stop offset="0" stop-color="#ffffff"/><stop offset="0.5" stop-color="#ffd157"/><stop offset="0.65" stop-color="#ffca3a"/><stop offset="0.8" stop-color="#ffc220"/><stop offset="0.9" stop-color="#ffbe10"/><stop offset="1.0" stop-color="#ffba00"/></linearGradient>
<linearGradient id="iw242" gradientUnits="userSpaceOnUse" x1="1199.27" y1="391.47" x2="1297.80" y2="311.47"><stop offset="0" stop-color="#ffffff"/><stop offset="0.5" stop-color="#ffcf57"/><stop offset="0.65" stop-color="#ffc73a"/><stop offset="0.8" stop-color="#ffc020"/><stop offset="0.9" stop-color="#ffbb10"/><stop offset="1.0" stop-color="#ffb700"/></linearGradient>
<linearGradient id="iw243" gradientUnits="userSpaceOnUse" x1="1199.27" y1="391.47" x2="1298.80" y2="312.02"><stop offset="0" stop-color="#ffffff"/><stop offset="0.5" stop-color="#ffcd57"/><stop offset="0.65" stop-color="#ffc53a"/><stop offset="0.8" stop-color="#ffbd20"/><stop offset="0.9" stop-color="#ffb810"/><stop offset="1.0" stop-color="#ffb400"/></linearGradient>
<linearGradient id="iw244" gradientUnits="userSpaceOnUse" x1="1199.27" y1="391.47" x2="1299.80" y2="312.58"><stop offset="0" stop-color="#ffffff"/><stop offset="0.5" stop-color="#ffcb57"/><stop offset="0.65" stop-color="#ffc33a"/><stop offset="0.8" stop-color="#ffbb20"/><stop offset="0.9" stop-color="#ffb610"/><stop offset="1.0" stop-color="#ffb100"/></linearGradient>
<linearGradient id="iw245" gradientUnits="userSpaceOnUse" x1="1199.27" y1="391.47" x2="1300.81" y2="313.14"><stop offset="0" stop-color="#ffffff"/><stop offset="0.5" stop-color="#ffca57"/><stop offset="0.65" stop-color="#ffc13a"/><stop offset="0.8" stop-color="#ffb820"/><stop offset="0.9" stop-color="#ffb310"/><stop offset="1.0" stop-color="#ffae00"/></linearGradient>
<linearGradient id="iw246" gradientUnits="userSpaceOnUse" x1="1199.27" y1="391.47" x2="1301.81" y2="313.70"><stop offset="0" stop-color="#ffffff"/><stop offset="0.5" stop-color="#ffc857"/><stop offset="0.65" stop-color="#ffbe3a"/><stop offset="0.8" stop-color="#ffb620"/><stop offset="0.9" stop-color="#ffb010"/><stop offset="1.0" stop-color="#ffab00"/></linearGradient>
<linearGradient id="iw247" gradientUnits="userSpaceOnUse" x1="1199.27" y1="391.47" x2="1302.81" y2="314.25"><stop offset="0" stop-color="#ffffff"/><stop offset="0.5" stop-color="#ffc657"/><stop offset="0.65" stop-color="#ffbc3a"/><stop offset="0.8" stop-color="#ffb320"/><stop offset="0.9" stop-color="#ffae10"/><stop offset="1.0" stop-color="#ffa900"/></linearGradient>
<linearGradient id="iw248" gradientUnits="userSpaceOnUse" x1="1199.27" y1="391.47" x2="1303.82" y2="314.81"><stop offset="0" stop-color="#ffffff"/><stop offset="0.5" stop-color="#ffc457"/><stop offset="0.65" stop-color="#ffba3a"/><stop offset="0.8" stop-color="#ffb120"/><stop offset="0.9" stop-color="#ffab10"/><stop offset="1.0" stop-color="#ffa600"/></linearGradient>
<linearGradient id="iw249" gradientUnits="userSpaceOnUse" x1="1199.27" y1="391.47" x2="1304.82" y2="315.37"><stop offset="0" stop-color="#ffffff"/><stop offset="0.5" stop-color="#ffc257"/><stop offset="0.65" stop-color="#ffb83a"/><stop offset="0.8" stop-color="#ffaf20"/><stop offset="0.9" stop-color="#ffa910"/><stop offset="1.0" stop-color="#ffa300"/></linearGradient>
<linearGradient id="iw250" gradientUnits="userSpaceOnUse" x1="1199.27" y1="391.47" x2="1305.83" y2="315.93"><stop offset="0" stop-color="#ffffff"/><stop offset="0.5" stop-color="#ffc157"/><stop offset="0.65" stop-color="#ffb63a"/><stop offset="0.8" stop-color="#ffac20"/><stop offset="0.9" stop-color="#ffa610"/><stop offset="1.0" stop-color="#ffa100"/></linearGradient>
<linearGradient id="iw251" gradientUnits="userSpaceOnUse" x1="1199.27" y1="391.47" x2="1306.83" y2="316.49"><stop offset="0" stop-color="#ffffff"/><stop offset="0.5" stop-color="#ffbf57"/><stop offset="0.65" stop-color="#ffb43a"/><stop offset="0.8" stop-color="#ffaa20"/><stop offset="0.9" stop-color="#ffa410"/><stop offset="1.0" stop-color="#ff9e00"/></linearGradient>
<linearGradient id="iw252" gradientUnits="userSpaceOnUse" x1="1199.27" y1="391.47" x2="1307.83" y2="317.04"><stop offset="0" stop-color="#ffffff"/><stop offset="0.5" stop-color="#ffbd57"/><stop offset="0.65" stop-color="#ffb23a"/><stop offset="0.8" stop-color="#ffa820"/><stop offset="0.9" stop-color="#ffa210"/><stop offset="1.0" stop-color="#ff9b00"/></linearGradient>
<linearGradient id="iw253" gradientUnits="userSpaceOnUse" x1="1199.27" y1="391.47" x2="1308.84" y2="317.60"><stop offset="0" stop-color="#ffffff"/><stop offset="0.5" stop-color="#ffbc57"/><stop offset="0.65" stop-color="#ffb03a"/><stop offset="0.8" stop-color="#ffa620"/><stop offset="0.9" stop-color="#ff9f10"/><stop offset="1.0" stop-color="#ff9900"/></linearGradient>
<linearGradient id="iw254" gradientUnits="userSpaceOnUse" x1="1199.27" y1="391.47" x2="1309.84" y2="318.16"><stop offset="0" stop-color="#ffffff"/><stop offset="0.5" stop-color="#ffba57"/><stop offset="0.65" stop-color="#ffae3a"/><stop offset="0.8" stop-color="#ffa420"/><stop offset="0.9" stop-color="#ff9d10"/><stop offset="1.0" stop-color="#ff9700"/></linearGradient>
<linearGradient id="iw255" gradientUnits="userSpaceOnUse" x1="1199.27" y1="391.47" x2="1310.84" y2="318.72"><stop offset="0" stop-color="#ffffff"/><stop offset="0.5" stop-color="#ffb957"/><stop offset="0.65" stop-color="#ffad3a"/><stop offset="0.8" stop-color="#ffa220"/><stop offset="0.9" stop-color="#ff9b10"/><stop offset="1.0" stop-color="#ff9400"/></linearGradient>
<linearGradient id="iw256" gradientUnits="userSpaceOnUse" x1="1199.27" y1="391.47" x2="1311.85" y2="319.28"><stop offset="0" stop-color="#ffffff"/><stop offset="0.5" stop-color="#ffb757"/><stop offset="0.65" stop-color="#ffab3a"/><stop offset="0.8" stop-color="#ffa020"/><stop offset="0.9" stop-color="#ff9910"/><stop offset="1.0" stop-color="#ff9200"/></linearGradient>
<linearGradient id="iw257" gradientUnits="userSpaceOnUse" x1="1199.27" y1="391.47" x2="1312.85" y2="319.83"><stop offset="0" stop-color="#ffffff"/><stop offset="0.5" stop-color="#ffb557"/><stop offset="0.65" stop-color="#ffa93a"/><stop offset="0.8" stop-color="#ff9d20"/><stop offset="0.9" stop-color="#ff9610"/><stop offset="1.0" stop-color="#ff9000"/></linearGradient>
<linearGradient id="iw258" gradientUnits="userSpaceOnUse" x1="1199.27" y1="391.47" x2="1313.85" y2="320.39"><stop offset="0" stop-color="#ffffff"/><stop offset="0.5" stop-color="#ffb457"/><stop offset="0.65" stop-color="#ffa73a"/><stop offset="0.8" stop-color="#ff9b20"/><stop offset="0.9" stop-color="#ff9410"/><stop offset="1.0" stop-color="#ff8d00"/></linearGradient>
<linearGradient id="iw259" gradientUnits="userSpaceOnUse" x1="1199.27" y1="391.47" x2="1314.86" y2="320.95"><stop offset="0" stop-color="#ffffff"/><stop offset="0.5" stop-color="#ffb257"/><stop offset="0.65" stop-color="#ffa53a"/><stop offset="0.8" stop-color="#ff9a20"/><stop offset="0.9" stop-color="#ff9210"/><stop offset="1.0" stop-color="#ff8b00"/></linearGradient>
<linearGradient id="iw260" gradientUnits="userSpaceOnUse" x1="1199.27" y1="391.47" x2="1315.86" y2="321.51"><stop offset="0" stop-color="#ffffff"/><stop offset="0.5" stop-color="#ffb157"/><stop offset="0.65" stop-color="#ffa43a"/><stop offset="0.8" stop-color="#ff9820"/><stop offset="0.9" stop-color="#ff9010"/><stop offset="1.0" stop-color="#ff8900"/></linearGradient>
<linearGradient id="iw261" gradientUnits="userSpaceOnUse" x1="1199.27" y1="391.47" x2="1316.87" y2="322.06"><stop offset="0" stop-color="#ffffff"/><stop offset="0.5" stop-color="#ffb057"/><stop offset="0.65" stop-color="#ffa23a"/><stop offset="0.8" stop-color="#ff9620"/><stop offset="0.9" stop-color="#ff8e10"/><stop offset="1.0" stop-color="#ff8700"/></linearGradient>
<linearGradient id="iw262" gradientUnits="userSpaceOnUse" x1="1199.27" y1="391.47" x2="1317.87" y2="322.62"><stop offset="0" stop-color="#ffffff"/><stop offset="0.5" stop-color="#ffae57"/><stop offset="0.65" stop-color="#ffa03a"/><stop offset="0.8" stop-color="#ff9420"/><stop offset="0.9" stop-color="#ff8c10"/><stop offset="1.0" stop-color="#ff8400"/></linearGradient>
<linearGradient id="iw263" gradientUnits="userSpaceOnUse" x1="1199.27" y1="391.47" x2="1318.87" y2="323.18"><stop offset="0" stop-color="#ffffff"/><stop offset="0.5" stop-color="#ffad57"/><stop offset="0.65" stop-color="#ff9f3a"/><stop offset="0.8" stop-color="#ff9220"/><stop offset="0.9" stop-color="#ff8a10"/><stop offset="1.0" stop-color="#ff8200"/></linearGradient>
<linearGradient id="iw264" gradientUnits="userSpaceOnUse" x1="1199.27" y1="391.47" x2="1319.88" y2="323.74"><stop offset="0" stop-color="#ffffff"/><stop offset="0.5" stop-color="#ffab57"/><stop offset="0.65" stop-color="#ff9d3a"/><stop offset="0.8" stop-color="#ff9020"/><stop offset="0.9" stop-color="#ff8810"/><stop offset="1.0" stop-color="#ff8000"/></linearGradient>
<linearGradient id="iw265" gradientUnits="userSpaceOnUse" x1="1199.27" y1="391.47" x2="1320.88" y2="324.30"><stop offset="0" stop-color="#ffffff"/><stop offset="0.5" stop-color="#ffaa57"/><stop offset="0.65" stop-color="#ff9c3a"/><stop offset="0.8" stop-color="#ff8e20"/><stop offset="0.9" stop-color="#ff8610"/><stop offset="1.0" stop-color="#ff7e00"/></linearGradient>
<linearGradient id="iw266" gradientUnits="userSpaceOnUse" x1="1199.27" y1="391.47" x2="1321.88" y2="324.85"><stop offset="0" stop-color="#ffffff"/><stop offset="0.5" stop-color="#ffa957"/><stop offset="0.65" stop-color="#ff9a3a"/><stop offset="0.8" stop-color="#ff8d20"/><stop offset="0.9" stop-color="#ff8410"/><stop offset="1.0" stop-color="#ff7c00"/></linearGradient>
<linearGradient id="iw267" gradientUnits="userSpaceOnUse" x1="1199.27" y1="391.47" x2="1322.89" y2="325.41"><stop offset="0" stop-color="#ffffff"/><stop offset="0.5" stop-color="#ffa757"/><stop offset="0.65" stop-color="#ff993a"/><stop offset="0.8" stop-color="#ff8b20"/><stop offset="0.9" stop-color="#ff8210"/><stop offset="1.0" stop-color="#ff7a00"/></linearGradient>
<linearGradient id="iw268" gradientUnits="userSpaceOnUse" x1="1199.27" y1="391.47" x2="1323.89" y2="325.97"><stop offset="0" stop-color="#ffffff"/><stop offset="0.5" stop-color="#ffa657"/><stop offset="0.65" stop-color="#ff973a"/><stop offset="0.8" stop-color="#ff8920"/><stop offset="0.9" stop-color="#ff8110"/><stop offset="1.0" stop-color="#ff7800"/></linearGradient>
<linearGradient id="iw269" gradientUnits="userSpaceOnUse" x1="1199.27" y1="391.47" x2="1324.89" y2="326.53"><stop offset="0" stop-color="#ffffff"/><stop offset="0.5" stop-color="#ffa557"/><stop offset="0.65" stop-color="#ff963a"/><stop offset="0.8" stop-color="#ff8820"/><stop offset="0.9" stop-color="#ff7f10"/><stop offset="1.0" stop-color="#ff7600"/></linearGradient>
<linearGradient id="iw270" gradientUnits="userSpaceOnUse" x1="1199.27" y1="391.47" x2="1325.90" y2="327.08"><stop offset="0" stop-color="#ffffff"/><stop offset="0.5" stop-color="#ffa457"/><stop offset="0.65" stop-color="#ff943a"/><stop offset="0.8" stop-color="#ff8620"/><stop offset="0.9" stop-color="#ff7d10"/><stop offset="1.0" stop-color="#ff7500"/></linearGradient>
<linearGradient id="iw271" gradientUnits="userSpaceOnUse" x1="1199.27" y1="391.47" x2="1326.90" y2="327.64"><stop offset="0" stop-color="#ffffff"/><stop offset="0.5" stop-color="#ffa257"/><stop offset="0.65" stop-color="#ff933a"/><stop offset="0.8" stop-color="#ff8420"/><stop offset="0.9" stop-color="#ff7b10"/><stop offset="1.0" stop-color="#ff7300"/></linearGradient>
<linearGradient id="iw272" gradientUnits="userSpaceOnUse" x1="1199.27" y1="391.47" x2="1327.91" y2="328.20"><stop offset="0" stop-color="#ffffff"/><stop offset="0.5" stop-color="#ffa157"/><stop offset="0.65" stop-color="#ff913a"/><stop offset="0.8" stop-color="#ff8320"/><stop offset="0.9" stop-color="#ff7a10"/><stop offset="1.0" stop-color="#ff7100"/></linearGradient>
<linearGradient id="iw273" gradientUnits="userSpaceOnUse" x1="1199.27" y1="391.47" x2="1328.91" y2="328.76"><stop offset="0" stop-color="#ffffff"/><stop offset="0.5" stop-color="#ffa057"/><stop offset="0.65" stop-color="#ff903a"/><stop offset="0.8" stop-color="#ff8120"/><stop offset="0.9" stop-color="#ff7810"/><stop offset="1.0" stop-color="#ff6f00"/></linearGradient>
<linearGradient id="iw274" gradientUnits="userSpaceOnUse" x1="1199.27" y1="391.47" x2="1329.91" y2="329.32"><stop offset="0" stop-color="#ffffff"/><stop offset="0.5" stop-color="#ff9f57"/><stop offset="0.65" stop-color="#ff8e3a"/><stop offset="0.8" stop-color="#ff7f20"/><stop offset="0.9" stop-color="#ff7610"/><stop offset="1.0" stop-color="#ff6d00"/></linearGradient>
<linearGradient id="iw275" gradientUnits="userSpaceOnUse" x1="1199.27" y1="391.47" x2="1330.92" y2="329.87"><stop offset="0" stop-color="#ffffff"/><stop offset="0.5" stop-color="#ff9e57"/><stop offset="0.65" stop-color="#ff8d3a"/><stop offset="0.8" stop-color="#ff7e20"/><stop offset="0.9" stop-color="#ff7510"/><stop offset="1.0" stop-color="#ff6b00"/></linearGradient>
<linearGradient id="iw276" gradientUnits="userSpaceOnUse" x1="1199.27" y1="391.47" x2="1331.92" y2="330.43"><stop offset="0" stop-color="#ffffff"/><stop offset="0.5" stop-color="#ff9d57"/><stop offset="0.65" stop-color="#ff8c3a"/><stop offset="0.8" stop-color="#ff7c20"/><stop offset="0.9" stop-color="#ff7310"/><stop offset="1.0" stop-color="#ff6a00"/></linearGradient>
<linearGradient id="iw277" gradientUnits="userSpaceOnUse" x1="1199.27" y1="391.47" x2="1332.92" y2="330.99"><stop offset="0" stop-color="#ffffff"/><stop offset="0.5" stop-color="#ff9b57"/><stop offset="0.65" stop-color="#ff8a3a"/><stop offset="0.8" stop-color="#ff7b20"/><stop offset="0.9" stop-color="#ff7110"/><stop offset="1.0" stop-color="#ff6800"/></linearGradient>
<linearGradient id="iw278" gradientUnits="userSpaceOnUse" x1="1199.27" y1="391.47" x2="1333.93" y2="331.55"><stop offset="0" stop-color="#ffffff"/><stop offset="0.5" stop-color="#ff9a57"/><stop offset="0.65" stop-color="#ff893a"/><stop offset="0.8" stop-color="#ff7920"/><stop offset="0.9" stop-color="#ff7010"/><stop offset="1.0" stop-color="#ff6600"/></linearGradient>
<linearGradient id="iw279" gradientUnits="userSpaceOnUse" x1="1199.27" y1="391.47" x2="1334.93" y2="332.10"><stop offset="0" stop-color="#ffffff"/><stop offset="0.5" stop-color="#ff9957"/><stop offset="0.65" stop-color="#ff883a"/><stop offset="0.8" stop-color="#ff7820"/><stop offset="0.9" stop-color="#ff6e10"/><stop offset="1.0" stop-color="#ff6500"/></linearGradient>
<linearGradient id="iw280" gradientUnits="userSpaceOnUse" x1="1199.27" y1="391.47" x2="1335.94" y2="332.66"><stop offset="0" stop-color="#ffffff"/><stop offset="0.5" stop-color="#ff9857"/><stop offset="0.65" stop-color="#ff873a"/><stop offset="0.8" stop-color="#ff7720"/><stop offset="0.9" stop-color="#ff6d10"/><stop offset="1.0" stop-color="#ff6300"/></linearGradient>
<linearGradient id="iw281" gradientUnits="userSpaceOnUse" x1="1199.27" y1="391.47" x2="1336.94" y2="333.22"><stop offset="0" stop-color="#ffffff"/><stop offset="0.5" stop-color="#ff9757"/><stop offset="0.65" stop-color="#ff853a"/><stop offset="0.8" stop-color="#ff7520"/><stop offset="0.9" stop-color="#ff6b10"/><stop offset="1.0" stop-color="#ff6100"/></linearGradient>
<linearGradient id="iw282" gradientUnits="userSpaceOnUse" x1="1199.27" y1="391.47" x2="1337.94" y2="333.78"><stop offset="0" stop-color="#ffffff"/><stop offset="0.5" stop-color="#ff9657"/><stop offset="0.65" stop-color="#ff843a"/><stop offset="0.8" stop-color="#ff7420"/><stop offset="0.9" stop-color="#ff6a10"/><stop offset="1.0" stop-color="#ff6000"/></linearGradient>
<linearGradient id="iw283" gradientUnits="userSpaceOnUse" x1="1199.27" y1="391.47" x2="1338.95" y2="334.34"><stop offset="0" stop-color="#ffffff"/><stop offset="0.5" stop-color="#ff9557"/><stop offset="0.65" stop-color="#ff833a"/><stop offset="0.8" stop-color="#ff7220"/><stop offset="0.9" stop-color="#ff6810"/><stop offset="1.0" stop-color="#ff5e00"/></linearGradient>
<linearGradient id="iw284" gradientUnits="userSpaceOnUse" x1="1199.27" y1="391.47" x2="1339.95" y2="334.89"><stop offset="0" stop-color="#ffffff"/><stop offset="0.5" stop-color="#ff9457"/><stop offset="0.65" stop-color="#ff823a"/><stop offset="0.8" stop-color="#ff7120"/><stop offset="0.9" stop-color="#ff6710"/><stop offset="1.0" stop-color="#ff5d00"/></linearGradient>
<linearGradient id="iw285" gradientUnits="userSpaceOnUse" x1="1199.27" y1="391.47" x2="1340.95" y2="335.45"><stop offset="0" stop-color="#ffffff"/><stop offset="0.5" stop-color="#ff9357"/><stop offset="0.65" stop-color="#ff803a"/><stop offset="0.8" stop-color="#ff7020"/><stop offset="0.9" stop-color="#ff6510"/><stop offset="1.0" stop-color="#ff5b00"/></linearGradient>
<linearGradient id="iw286" gradientUnits="userSpaceOnUse" x1="1199.27" y1="391.47" x2="1341.96" y2="336.01"><stop offset="0" stop-color="#ffffff"/><stop offset="0.5" stop-color="#ff9257"/><stop offset="0.65" stop-color="#ff7f3a"/><stop offset="0.8" stop-color="#ff6e20"/><stop offset="0.9" stop-color="#ff6410"/><stop offset="1.0" stop-color="#ff5a00"/></linearGradient>
<linearGradient id="iw287" gradientUnits="userSpaceOnUse" x1="1199.27" y1="391.47" x2="1342.96" y2="336.57"><stop offset="0" stop-color="#ffffff"/><stop offset="0.5" stop-color="#ff9157"/><stop offset="0.65" stop-color="#ff7e3a"/><stop offset="0.8" stop-color="#ff6d20"/><stop offset="0.9" stop-color="#ff6210"/><stop offset="1.0" stop-color="#ff5800"/></linearGradient>
<linearGradient id="iw288" gradientUnits="userSpaceOnUse" x1="1199.27" y1="391.47" x2="1343.96" y2="337.13"><stop offset="0" stop-color="#ffffff"/><stop offset="0.5" stop-color="#ff9057"/><stop offset="0.65" stop-color="#ff7d3a"/><stop offset="0.8" stop-color="#ff6c20"/><stop offset="0.9" stop-color="#ff6110"/><stop offset="1.0" stop-color="#ff5700"/></linearGradient>
<linearGradient id="iw289" gradientUnits="userSpaceOnUse" x1="1199.27" y1="391.47" x2="1344.97" y2="337.68"><stop offset="0" stop-color="#ffffff"/><stop offset="0.5" stop-color="#ff8f57"/><stop offset="0.65" stop-color="#ff7c3a"/><stop offset="0.8" stop-color="#ff6b20"/><stop offset="0.9" stop-color="#ff6010"/><stop offset="1.0" stop-color="#ff5500"/></linearGradient>
<clipPath id="tblclip"><rect x="308" y="600" width="1290" height="190"/></clipPath>
<linearGradient id="sbtn" x1="0" y1="0" x2="0" y2="1"><stop offset="0" stop-color="#a6a6a6"/><stop offset="0.5" stop-color="#8c8c8c"/><stop offset="1" stop-color="#606060"/></linearGradient>
<clipPath id="swbar"><rect x="0" y="800" width="1276.5" height="70"/></clipPath>
<linearGradient id="cbtn" x1="0" y1="0" x2="0" y2="1"><stop offset="0" stop-color="#b0b0b0"/><stop offset="1" stop-color="#6e6e6e"/></linearGradient>
<linearGradient id="cdark" x1="0" y1="0" x2="0" y2="1"><stop offset="0" stop-color="#3a3a3a"/><stop offset="1" stop-color="#262626"/></linearGradient>
<linearGradient id="ccirc" x1="0" y1="0" x2="0" y2="1"><stop offset="0" stop-color="#7a7a7a"/><stop offset="1" stop-color="#a8a8a8"/></linearGradient>
<linearGradient id="ccircd" x1="0" y1="0" x2="0" y2="1"><stop offset="0" stop-color="#2a2a2a"/><stop offset="1" stop-color="#3a3a3a"/></linearGradient></defs>
<rect x="0" y="0" width="1600" height="870" fill="#232323" />
<rect x="0" y="0" width="1600" height="23" fill="#0199be" />
<path d="M10.30 10.80 L10.20 3.30 A7.5 7.5 0 0 1 11.71 3.43 Z" fill="#7fff00"/>
<path d="M10.30 10.80 L11.50 3.40 A7.5 7.5 0 0 1 12.96 3.79 Z" fill="#aaff00"/>
<path d="M10.30 10.80 L12.77 3.72 A7.5 7.5 0 0 1 14.14 4.36 Z" fill="#d4ff00"/>
<path d="M10.30 10.80 L13.96 4.25 A7.5 7.5 0 0 1 15.20 5.12 Z" fill="#ffff00"/>
<path d="M10.30 10.80 L15.04 4.99 A7.5 7.5 0 0 1 16.11 6.06 Z" fill="#ffd400"/>
<path d="M10.30 10.80 L15.98 5.90 A7.5 7.5 0 0 1 16.85 7.14 Z" fill="#ffaa00"/>
<path d="M10.30 10.80 L16.74 6.96 A7.5 7.5 0 0 1 17.38 8.33 Z" fill="#ff7f00"/>
<path d="M10.30 10.80 L17.31 8.14 A7.5 7.5 0 0 1 17.70 9.60 Z" fill="#ff5400"/>
<path d="M10.30 10.80 L17.67 9.39 A7.5 7.5 0 0 1 17.80 10.90 Z" fill="#ff2a00"/>
<path d="M10.30 10.80 L17.80 10.70 A7.5 7.5 0 0 1 17.67 12.21 Z" fill="#ff0000"/>
<path d="M10.30 10.80 L17.70 12.00 A7.5 7.5 0 0 1 17.31 13.46 Z" fill="#ff002a"/>
<path d="M10.30 10.80 L17.38 13.27 A7.5 7.5 0 0 1 16.74 14.64 Z" fill="#ff0055"/>
<path d="M10.30 10.80 L16.85 14.46 A7.5 7.5 0 0 1 15.98 15.70 Z" fill="#ff007f"/>
<path d="M10.30 10.80 L16.11 15.54 A7.5 7.5 0 0 1 15.04 16.61 Z" fill="#ff00aa"/>
<path d="M10.30 10.80 L15.20 16.48 A7.5 7.5 0 0 1 13.96 17.35 Z" fill="#ff00d4"/>
<path d="M10.30 10.80 L14.14 17.24 A7.5 7.5 0 0 1 12.77 17.88 Z" fill="#ff00ff"/>
<path d="M10.30 10.80 L12.96 17.81 A7.5 7.5 0 0 1 11.50 18.20 Z" fill="#d400ff"/>
<path d="M10.30 10.80 L11.71 18.17 A7.5 7.5 0 0 1 10.20 18.30 Z" fill="#aa00ff"/>
<path d="M10.30 10.80 L10.40 18.30 A7.5 7.5 0 0 1 8.89 18.17 Z" fill="#7f00ff"/>
<path d="M10.30 10.80 L9.10 18.20 A7.5 7.5 0 0 1 7.64 17.81 Z" fill="#5400ff"/>
<path d="M10.30 10.80 L7.83 17.88 A7.5 7.5 0 0 1 6.46 17.24 Z" fill="#2a00ff"/>
<path d="M10.30 10.80 L6.64 17.35 A7.5 7.5 0 0 1 5.40 16.48 Z" fill="#0000ff"/>
<path d="M10.30 10.80 L5.56 16.61 A7.5 7.5 0 0 1 4.49 15.54 Z" fill="#002aff"/>
<path d="M10.30 10.80 L4.62 15.70 A7.5 7.5 0 0 1 3.75 14.46 Z" fill="#0054ff"/>
<path d="M10.30 10.80 L3.86 14.64 A7.5 7.5 0 0 1 3.22 13.27 Z" fill="#007fff"/>
<path d="M10.30 10.80 L3.29 13.46 A7.5 7.5 0 0 1 2.90 12.00 Z" fill="#00a9ff"/>
<path d="M10.30 10.80 L2.93 12.21 A7.5 7.5 0 0 1 2.80 10.70 Z" fill="#00d4ff"/>
<path d="M10.30 10.80 L2.80 10.90 A7.5 7.5 0 0 1 2.93 9.39 Z" fill="#00ffff"/>
<path d="M10.30 10.80 L2.90 9.60 A7.5 7.5 0 0 1 3.29 8.14 Z" fill="#00ffd4"/>
<path d="M10.30 10.80 L3.22 8.33 A7.5 7.5 0 0 1 3.86 6.96 Z" fill="#00ffa9"/>
<path d="M10.30 10.80 L3.75 7.14 A7.5 7.5 0 0 1 4.62 5.90 Z" fill="#00ff7f"/>
<path d="M10.30 10.80 L4.49 6.06 A7.5 7.5 0 0 1 5.56 4.99 Z" fill="#00ff55"/>
<path d="M10.30 10.80 L5.40 5.12 A7.5 7.5 0 0 1 6.64 4.25 Z" fill="#00ff2a"/>
<path d="M10.30 10.80 L6.46 4.36 A7.5 7.5 0 0 1 7.83 3.72 Z" fill="#00ff00"/>
<path d="M10.30 10.80 L7.64 3.79 A7.5 7.5 0 0 1 9.10 3.40 Z" fill="#2aff00"/>
<path d="M10.30 10.80 L8.89 3.43 A7.5 7.5 0 0 1 10.40 3.30 Z" fill="#54ff00"/>
<circle cx="10.3" cy="10.8" r="5.6" fill="#000"/>
<text x="10.4" y="13.5" font-size="7.40" fill="#fff" text-anchor="middle" font-weight="bold" textLength="9.2" lengthAdjust="spacingAndGlyphs" >CM</text>
<text x="24.0" y="15.5" font-size="11.70" fill="#ffffff" textLength="341.0" lengthAdjust="spacingAndGlyphs" >CalMAN 2016 CalMAN Ultimate for Business 109 Days Remaining</text>
<rect x="1479" y="10" width="10" height="1" fill="#fff" />
<rect x="1524.5" y="7.5" width="8" height="8" fill="none" stroke="#fff" stroke-width="1"/>
<path d="M1526.5 7.5 V5.5 H1534.5 V13.5 H1532.5" fill="none" stroke="#fff" stroke-width="1"/>
<path d="M1570 5 L1580 15 M1580 5 L1570 15" stroke="#fff" stroke-width="1.1"/>
<path d="M0 23 H183 V49 Q183 53 179 53 H4 Q0 53 0 49 Z" fill="#f4f4f4"/>
<path d="M1 23 H182 V48.5 Q182 52 178.5 52 H4.5 Q1 52 1 48.5 Z" fill="url(#gbtn)"/>
<text x="14.0" y="48.5" font-size="28.80" fill="#1a5a10" textLength="128.5" lengthAdjust="spacingAndGlyphs" opacity="0.5" stroke="#1a5a10" stroke-width="0.6">CalMAN</text>
<text x="13.5" y="47.6" font-size="28.80" fill="#ffffff" textLength="128.5" lengthAdjust="spacingAndGlyphs" stroke="#ffffff" stroke-width="0.6">CalMAN</text>
<ellipse cx="166" cy="37" rx="9.5" ry="10" fill="url(#gdd)"/>
<path d="M161 36 H171 L166 41 Z" fill="#fff"/>
<rect x="190" y="35.5" width="1410" height="5" fill="url(#rainbow)" />
<rect x="-3" y="58.5" width="30" height="27" rx="3" fill="url(#btn1)" stroke="#c8c8c8" stroke-width="1"/>
<ellipse cx="13" cy="72" rx="10" ry="10" fill="url(#btnc)"/>
<path d="M10 67 L17 71.8 L10 76.5 Z" fill="#fff"/>
<path d="M29.5 88 V62 Q29.5 58.5 33 58.5 H117.5 Q121 58.5 121 62 V88" fill="url(#tab)" stroke="#6a6a6a" stroke-width="1"/>
<rect x="88" y="59" width="1" height="29" fill="#5e5e5e" />
<text x="35.5" y="78.5" font-size="11.50" fill="#e0e0e0" textLength="46.0" lengthAdjust="spacingAndGlyphs" >History 1</text>
<circle cx="103" cy="75" r="9.5" fill="#3a3a3a"/>
<path d="M103 71.5 V78.5 M99.5 75 H106.5" stroke="#6e6e6e" stroke-width="0.9"/>
<rect x="1" y="88" width="1599" height="782" fill="#333333" />
<path d="M1058.5 88 V62 Q1058.5 58 1062.5 58 H1208.5 Q1212.5 58 1212.5 62 V88 Z" fill="url(#dd)"/>
<path d="M1058.5 88 V62 Q1058.5 58 1062.5 58 H1064.0 V88 Z" fill="#00dd00"/>
<text x="1067.5" y="70.0" font-size="11.50" fill="#e8e8e8" textLength="66.0" lengthAdjust="spacingAndGlyphs" >X-Rite i1Pro 2</text>
<text x="1067.5" y="83.5" font-size="11.50" fill="#e8e8e8" textLength="77.0" lengthAdjust="spacingAndGlyphs" >LCD Direct View</text>
<ellipse cx="1157.5" cy="73" rx="9.5" ry="9.5" fill="url(#ddc)"/>
<path d="M1152.5 71 H1162.5 L1157.5 76 Z" fill="#fff"/>
<rect x="1177" y="61" width="1" height="27" fill="#4a4a4a" />
<circle cx="1197.5" cy="73" r="12.5" fill="#0000ee" stroke="#e8e8ff" stroke-width="1"/>
<text x="1197.5" y="77.0" font-size="10.50" fill="#fff" text-anchor="middle" textLength="16.0" lengthAdjust="spacingAndGlyphs" >229</text>
<path d="M1219 88 V62 Q1219 58 1223 58 H1345 Q1349 58 1349 62 V88 Z" fill="url(#dd)"/>
<path d="M1219 88 V62 Q1219 58 1223 58 H1224.5 V88 Z" fill="#e8e800"/>
<text x="1228.0" y="70.0" font-size="11.50" fill="#e8e8e8" textLength="33.0" lengthAdjust="spacingAndGlyphs" >Source</text>
<ellipse cx="1332.5" cy="73" rx="9.5" ry="9.5" fill="url(#ddc)"/>
<path d="M1327.5 71 H1337.5 L1332.5 76 Z" fill="#fff"/>
<path d="M1355 88 V62 Q1355 58 1359 58 H1494 Q1498 58 1498 62 V88 Z" fill="url(#dd)"/>
<path d="M1355 88 V62 Q1355 58 1359 58 H1360.5 V88 Z" fill="#e8e800"/>
<text x="1364.0" y="70.0" font-size="11.50" fill="#e8e8e8" textLength="105.0" lengthAdjust="spacingAndGlyphs" >Direct Display Control</text>
<ellipse cx="1482" cy="73" rx="9.5" ry="9.5" fill="url(#ddc)"/>
<path d="M1477 71 H1487 L1482 76 Z" fill="#fff"/>
<rect x="1501.0" y="58.5" width="33.5" height="28" rx="3.5" fill="url(#btn1)" stroke="#d0d0d0" stroke-width="1"/>
<ellipse cx="1517.75" cy="72.5" rx="10" ry="10" fill="url(#btnc)"/>
<rect x="1516.45" y="65.00" width="2.6" height="3.5" fill="#d8d8d8" transform="rotate(0 1517.75 72.5)"/><rect x="1516.45" y="65.00" width="2.6" height="3.5" fill="#d8d8d8" transform="rotate(45 1517.75 72.5)"/><rect x="1516.45" y="65.00" width="2.6" height="3.5" fill="#d8d8d8" transform="rotate(90 1517.75 72.5)"/><rect x="1516.45" y="65.00" width="2.6" height="3.5" fill="#d8d8d8" transform="rotate(135 1517.75 72.5)"/><rect x="1516.45" y="65.00" width="2.6" height="3.5" fill="#d8d8d8" transform="rotate(180 1517.75 72.5)"/><rect x="1516.45" y="65.00" width="2.6" height="3.5" fill="#d8d8d8" transform="rotate(225 1517.75 72.5)"/><rect x="1516.45" y="65.00" width="2.6" height="3.5" fill="#d8d8d8" transform="rotate(270 1517.75 72.5)"/><rect x="1516.45" y="65.00" width="2.6" height="3.5" fill="#d8d8d8" transform="rotate(315 1517.75 72.5)"/><circle cx="1517.75" cy="72.5" r="4.8" fill="none" stroke="#d8d8d8" stroke-width="1.8"/>
<rect x="1537.0" y="58.5" width="33.5" height="28" rx="3.5" fill="url(#btn1)" stroke="#d0d0d0" stroke-width="1"/>
<ellipse cx="1553.75" cy="72.5" rx="10" ry="10" fill="url(#btnc)"/>
<text x="1553.75" y="78.5" font-size="17" font-weight="bold" fill="#f0f0f0" text-anchor="middle">?</text>
<rect x="1573.0" y="58.5" width="38.5" height="28" rx="3.5" fill="url(#btn1)" stroke="#d0d0d0" stroke-width="1"/>
<ellipse cx="1592.25" cy="72.5" rx="10" ry="10" fill="url(#btnc)"/>
<path d="M1591 67 L1585 72.5 L1591 78 Z" fill="#f0f0f0"/>
<text x="24.5" y="140.0" font-size="35.70" fill="#f0f0f0" textLength="224.0" lengthAdjust="spacingAndGlyphs" >ColorChecker</text>
<text x="24.0" y="165.0" font-size="14.20" fill="#f0f0f0" textLength="318.0" lengthAdjust="spacingAndGlyphs" stroke="#f0f0f0" stroke-width="0.3">Display analysis is performed with the X-Rite/</text>
<text x="24.0" y="184.5" font-size="14.20" fill="#f0f0f0" textLength="261.0" lengthAdjust="spacingAndGlyphs" stroke="#f0f0f0" stroke-width="0.3">Pantone ColorChecker® target colors.</text>
<text x="180.0" y="220.0" font-size="12.50" fill="#c8c8c8" text-anchor="middle" textLength="75.0" lengthAdjust="spacingAndGlyphs" >DeltaE 2000</text>
<rect x="19.5" y="224.5" width="320.5" height="280" fill="#232323" stroke="#9a9a9a" stroke-width="1"/>
<rect x="104.6" y="225" width="1.2" height="279" fill="#8a8a8a" />
<rect x="147.4" y="225" width="1.2" height="279" fill="#8a8a8a" />
<rect x="190.2" y="225" width="1.2" height="279" fill="#8a8a8a" />
<rect x="233.0" y="225" width="1.2" height="279" fill="#8a8a8a" />
<rect x="275.8" y="225" width="1.2" height="279" fill="#8a8a8a" />
<rect x="318.6" y="225" width="1.2" height="279" fill="#8a8a8a" />
<rect x="61.7" y="225" width="1.2" height="279" fill="#4a4a4a" stroke-dasharray="1 3"/>
<text x="19.5" y="524.0" font-size="12.50" fill="#c0c0c0" text-anchor="middle" >0</text>
<text x="62.3" y="524.0" font-size="12.50" fill="#c0c0c0" text-anchor="middle" >2</text>
<text x="105.1" y="524.0" font-size="12.50" fill="#c0c0c0" text-anchor="middle" >4</text>
<text x="147.9" y="524.0" font-size="12.50" fill="#c0c0c0" text-anchor="middle" >6</text>
<text x="190.7" y="524.0" font-size="12.50" fill="#c0c0c0" text-anchor="middle" >8</text>
<text x="233.5" y="524.0" font-size="12.50" fill="#c0c0c0" text-anchor="middle" >10</text>
<text x="276.3" y="524.0" font-size="12.50" fill="#c0c0c0" text-anchor="middle" >12</text>
<text x="319.1" y="524.0" font-size="12.50" fill="#c0c0c0" text-anchor="middle" >14</text>
<rect x="20" y="225.60" width="72.59" height="7.2" fill="#000"/>
<rect x="21" y="226.60" width="70.59" height="5.2" fill="#ffff00"/>
<rect x="21" y="226.60" width="70.59" height="5.2" fill="url(#bg0)"/>
<rect x="20" y="234.85" width="98.91" height="7.2" fill="#000"/>
<rect x="21" y="235.85" width="96.91" height="5.2" fill="#ff00ff"/>
<rect x="21" y="235.85" width="96.91" height="5.2" fill="url(#bg1)"/>
<rect x="20" y="244.10" width="68.95" height="7.2" fill="#000"/>
<rect x="21" y="245.10" width="66.95" height="5.2" fill="#00ffff"/>
<rect x="21" y="245.10" width="66.95" height="5.2" fill="url(#bg2)"/>
<rect x="20" y="253.35" width="174.24" height="7.2" fill="#000"/>
<rect x="21" y="254.35" width="172.24" height="5.2" fill="#0000ff"/>
<rect x="21" y="254.35" width="172.24" height="5.2" fill="url(#bg3)"/>
<rect x="20" y="262.60" width="95.91" height="7.2" fill="#000"/>
<rect x="21" y="263.60" width="93.91" height="5.2" fill="#00ff00"/>
<rect x="21" y="263.60" width="93.91" height="5.2" fill="url(#bg4)"/>
<rect x="20" y="271.85" width="75.16" height="7.2" fill="#000"/>
<rect x="21" y="272.85" width="73.16" height="5.2" fill="#ff2020"/>
<rect x="21" y="272.85" width="73.16" height="5.2" fill="url(#bg5)"/>
<rect x="20" y="281.10" width="77.72" height="7.2" fill="#000"/>
<rect x="21" y="282.10" width="75.72" height="5.2" fill="#0890b0"/>
<rect x="21" y="282.10" width="75.72" height="5.2" fill="url(#bg6)"/>
<rect x="20" y="290.35" width="48.83" height="7.2" fill="#000"/>
<rect x="21" y="291.35" width="46.83" height="5.2" fill="#c050a0"/>
<rect x="21" y="291.35" width="46.83" height="5.2" fill="url(#bg7)"/>
<rect x="20" y="299.60" width="114.75" height="7.2" fill="#000"/>
<rect x="21" y="300.60" width="112.75" height="5.2" fill="#f0c820"/>
<rect x="21" y="300.60" width="112.75" height="5.2" fill="url(#bg8)"/>
<rect x="20" y="308.85" width="40.06" height="7.2" fill="#000"/>
<rect x="21" y="309.85" width="38.06" height="5.2" fill="#c03040"/>
<rect x="21" y="309.85" width="38.06" height="5.2" fill="url(#bg9)"/>
<rect x="20" y="318.10" width="59.96" height="7.2" fill="#000"/>
<rect x="21" y="319.10" width="57.96" height="5.2" fill="#409040"/>
<rect x="21" y="319.10" width="57.96" height="5.2" fill="url(#bg10)"/>
<rect x="20" y="327.35" width="110.68" height="7.2" fill="#000"/>
<rect x="21" y="328.35" width="108.68" height="5.2" fill="#3038a0"/>
<rect x="21" y="328.35" width="108.68" height="5.2" fill="url(#bg11)"/>
<rect x="20" y="336.60" width="155.62" height="7.2" fill="#000"/>
<rect x="21" y="337.60" width="153.62" height="5.2" fill="#f0a830"/>
<rect x="21" y="337.60" width="153.62" height="5.2" fill="url(#bg12)"/>
<rect x="20" y="345.85" width="51.83" height="7.2" fill="#000"/>
<rect x="21" y="346.85" width="49.83" height="5.2" fill="#a8c050"/>
<rect x="21" y="346.85" width="49.83" height="5.2" fill="url(#bg13)"/>
<rect x="20" y="355.10" width="67.02" height="7.2" fill="#000"/>
<rect x="21" y="356.10" width="65.02" height="5.2" fill="#6a4080"/>
<rect x="21" y="356.10" width="65.02" height="5.2" fill="url(#bg14)"/>
<rect x="20" y="364.35" width="48.19" height="7.2" fill="#000"/>
<rect x="21" y="365.35" width="46.19" height="5.2" fill="#d05868"/>
<rect x="21" y="365.35" width="46.19" height="5.2" fill="url(#bg15)"/>
<rect x="20" y="373.60" width="91.63" height="7.2" fill="#000"/>
<rect x="21" y="374.60" width="89.63" height="5.2" fill="#4858b0"/>
<rect x="21" y="374.60" width="89.63" height="5.2" fill="url(#bg16)"/>
<rect x="20" y="382.85" width="150.70" height="7.2" fill="#000"/>
<rect x="21" y="383.85" width="148.70" height="5.2" fill="#e08030"/>
<rect x="21" y="383.85" width="148.70" height="5.2" fill="url(#bg17)"/>
<rect x="20" y="392.10" width="54.18" height="7.2" fill="#000"/>
<rect x="21" y="393.10" width="52.18" height="5.2" fill="#68c0a8"/>
<rect x="21" y="393.10" width="52.18" height="5.2" fill="url(#bg18)"/>
<rect x="20" y="401.35" width="45.62" height="7.2" fill="#000"/>
<rect x="21" y="402.35" width="43.62" height="5.2" fill="#8a8ac8"/>
<rect x="21" y="402.35" width="43.62" height="5.2" fill="url(#bg19)"/>
<rect x="20" y="410.60" width="38.13" height="7.2" fill="#000"/>
<rect x="21" y="411.60" width="36.13" height="5.2" fill="#566a40"/>
<rect x="21" y="411.60" width="36.13" height="5.2" fill="url(#bg20)"/>
<rect x="20" y="419.85" width="79.22" height="7.2" fill="#000"/>
<rect x="21" y="420.85" width="77.22" height="5.2" fill="#6a88b0"/>
<rect x="21" y="420.85" width="77.22" height="5.2" fill="url(#bg21)"/>
<rect x="20" y="429.10" width="81.36" height="7.2" fill="#000"/>
<rect x="21" y="430.10" width="79.36" height="5.2" fill="#c49888"/>
<rect x="21" y="430.10" width="79.36" height="5.2" fill="url(#bg22)"/>
<rect x="20" y="438.35" width="43.27" height="7.2" fill="#000"/>
<rect x="21" y="439.35" width="41.27" height="5.2" fill="#775545"/>
<rect x="21" y="439.35" width="41.27" height="5.2" fill="url(#bg23)"/>
<rect x="20" y="447.60" width="28.08" height="7.2" fill="#000"/>
<rect x="21" y="448.60" width="26.08" height="5.2" fill="#111111"/>
<rect x="21" y="448.60" width="26.08" height="5.2" fill="url(#bg24)"/>
<rect x="20" y="456.85" width="23.37" height="7.2" fill="#000"/>
<rect x="21" y="457.85" width="21.37" height="5.2" fill="#a0a0a0"/>
<rect x="21" y="457.85" width="21.37" height="5.2" fill="url(#bg25)"/>
<rect x="20" y="466.10" width="27.86" height="7.2" fill="#000"/>
<rect x="21" y="467.10" width="25.86" height="5.2" fill="#bababa"/>
<rect x="21" y="467.10" width="25.86" height="5.2" fill="url(#bg26)"/>
<rect x="20" y="475.35" width="30.00" height="7.2" fill="#000"/>
<rect x="21" y="476.35" width="28.00" height="5.2" fill="#d0d0d0"/>
<rect x="21" y="476.35" width="28.00" height="5.2" fill="url(#bg27)"/>
<rect x="20" y="484.60" width="32.78" height="7.2" fill="#000"/>
<rect x="21" y="485.60" width="30.78" height="5.2" fill="#e4e4e4"/>
<rect x="21" y="485.60" width="30.78" height="5.2" fill="url(#bg28)"/>
<rect x="20" y="493.85" width="33.64" height="7.2" fill="#000"/>
<rect x="21" y="494.85" width="31.64" height="5.2" fill="#ffffff"/>
<rect x="21" y="494.85" width="31.64" height="5.2" fill="url(#bg29)"/>
<text x="84.0" y="561.5" font-size="27.00" fill="#f0f0f0" textLength="206.5" lengthAdjust="spacingAndGlyphs" >Avg dE2000: 3.4</text>
<text x="79.0" y="595.5" font-size="27.00" fill="#f0f0f0" textLength="215.0" lengthAdjust="spacingAndGlyphs" >Max dE2000: 8.2</text>
<text x="15.0" y="644.2" font-size="23.50" fill="#f0f0f0" textLength="209.0" lengthAdjust="spacingAndGlyphs" >Current Reading</text>
<text x="14.5" y="681.6" font-size="21.00" fill="#f0f0f0" textLength="84.5" lengthAdjust="spacingAndGlyphs" >x: 0.419</text>
<text x="14.5" y="717.0" font-size="21.00" fill="#f0f0f0" textLength="98.0" lengthAdjust="spacingAndGlyphs" >y: 0.5312</text>
<text x="14.5" y="752.5" font-size="21.00" fill="#f0f0f0" textLength="92.0" lengthAdjust="spacingAndGlyphs" >fL: 47.32</text>
<text x="14.5" y="787.7" font-size="21.00" fill="#f0f0f0" textLength="153.0" lengthAdjust="spacingAndGlyphs" >cd/m²: 162.12</text>
<text x="448.0" y="124.0" font-size="12.20" fill="#c8c8c8" text-anchor="middle" textLength="39.5" lengthAdjust="spacingAndGlyphs" >DeltaL</text>
<rect x="383.5" y="128.5" width="147.0" height="296.0" fill="#232323" stroke="#9a9a9a" stroke-width="1.2"/>
<rect x="378.0" y="127.90" width="5.5" height="1.2" fill="#9a9a9a"/>
<text x="378.5" y="133.5" font-size="13.00" fill="#c8c8c8" text-anchor="end" >4</text>
<rect x="383.5" y="164.90" width="147.0" height="1.2" fill="#8a8a8a"/>
<rect x="378.0" y="164.90" width="5.5" height="1.2" fill="#9a9a9a"/>
<text x="378.5" y="170.5" font-size="13.00" fill="#c8c8c8" text-anchor="end" >3</text>
<rect x="383.5" y="201.90" width="147.0" height="1.2" fill="#8a8a8a"/>
<rect x="378.0" y="201.90" width="5.5" height="1.2" fill="#9a9a9a"/>
<text x="378.5" y="207.5" font-size="13.00" fill="#c8c8c8" text-anchor="end" >2</text>
<rect x="383.5" y="238.90" width="147.0" height="1.2" fill="#8a8a8a"/>
<rect x="378.0" y="238.90" width="5.5" height="1.2" fill="#9a9a9a"/>
<text x="378.5" y="244.5" font-size="13.00" fill="#c8c8c8" text-anchor="end" >1</text>
<rect x="383.5" y="275.90" width="147.0" height="1.2" fill="#8a8a8a"/>
<rect x="378.0" y="275.90" width="5.5" height="1.2" fill="#9a9a9a"/>
<text x="378.5" y="281.5" font-size="13.00" fill="#c8c8c8" text-anchor="end" >0</text>
<rect x="383.5" y="312.90" width="147.0" height="1.2" fill="#8a8a8a"/>
<rect x="378.0" y="312.90" width="5.5" height="1.2" fill="#9a9a9a"/>
<text x="378.5" y="318.5" font-size="13.00" fill="#c8c8c8" text-anchor="end" >-1</text>
<rect x="383.5" y="349.90" width="147.0" height="1.2" fill="#8a8a8a"/>
<rect x="378.0" y="349.90" width="5.5" height="1.2" fill="#9a9a9a"/>
<text x="378.5" y="355.5" font-size="13.00" fill="#c8c8c8" text-anchor="end" >-2</text>
<rect x="383.5" y="386.90" width="147.0" height="1.2" fill="#8a8a8a"/>
<rect x="378.0" y="386.90" width="5.5" height="1.2" fill="#9a9a9a"/>
<text x="378.5" y="392.5" font-size="13.00" fill="#c8c8c8" text-anchor="end" >-3</text>
<rect x="378.0" y="423.90" width="5.5" height="1.2" fill="#9a9a9a"/>
<text x="378.5" y="429.5" font-size="13.00" fill="#c8c8c8" text-anchor="end" >-4</text>
<rect x="397.5" y="258.5" width="117.0" height="19.0" fill="#000"/>
<rect x="398.7" y="259.7" width="114.6" height="16.6" fill="url(#ybar)"/>
<text x="637.0" y="124.0" font-size="12.20" fill="#c8c8c8" text-anchor="middle" textLength="41.2" lengthAdjust="spacingAndGlyphs" >DeltaC</text>
<rect x="580.5" y="128.5" width="139.0" height="296.0" fill="#232323" stroke="#9a9a9a" stroke-width="1.2"/>
<rect x="575.0" y="127.90" width="5.5" height="1.2" fill="#9a9a9a"/>
<text x="575.5" y="133.5" font-size="13.00" fill="#c8c8c8" text-anchor="end" >20</text>
<rect x="580.5" y="164.90" width="139.0" height="1.2" fill="#8a8a8a"/>
<rect x="575.0" y="164.90" width="5.5" height="1.2" fill="#9a9a9a"/>
<text x="575.5" y="170.5" font-size="13.00" fill="#c8c8c8" text-anchor="end" >15</text>
<rect x="580.5" y="201.90" width="139.0" height="1.2" fill="#8a8a8a"/>
<rect x="575.0" y="201.90" width="5.5" height="1.2" fill="#9a9a9a"/>
<text x="575.5" y="207.5" font-size="13.00" fill="#c8c8c8" text-anchor="end" >10</text>
<rect x="580.5" y="238.90" width="139.0" height="1.2" fill="#8a8a8a"/>
<rect x="575.0" y="238.90" width="5.5" height="1.2" fill="#9a9a9a"/>
<text x="575.5" y="244.5" font-size="13.00" fill="#c8c8c8" text-anchor="end" >5</text>
<rect x="580.5" y="275.90" width="139.0" height="1.2" fill="#8a8a8a"/>
<rect x="575.0" y="275.90" width="5.5" height="1.2" fill="#9a9a9a"/>
<text x="575.5" y="281.5" font-size="13.00" fill="#c8c8c8" text-anchor="end" >0</text>
<rect x="580.5" y="312.90" width="139.0" height="1.2" fill="#8a8a8a"/>
<rect x="575.0" y="312.90" width="5.5" height="1.2" fill="#9a9a9a"/>
<text x="575.5" y="318.5" font-size="13.00" fill="#c8c8c8" text-anchor="end" >-5</text>
<rect x="580.5" y="349.90" width="139.0" height="1.2" fill="#8a8a8a"/>
<rect x="575.0" y="349.90" width="5.5" height="1.2" fill="#9a9a9a"/>
<text x="575.5" y="355.5" font-size="13.00" fill="#c8c8c8" text-anchor="end" >-10</text>
<rect x="580.5" y="386.90" width="139.0" height="1.2" fill="#8a8a8a"/>
<rect x="575.0" y="386.90" width="5.5" height="1.2" fill="#9a9a9a"/>
<text x="575.5" y="392.5" font-size="13.00" fill="#c8c8c8" text-anchor="end" >-15</text>
<rect x="575.0" y="423.90" width="5.5" height="1.2" fill="#9a9a9a"/>
<text x="575.5" y="429.5" font-size="13.00" fill="#c8c8c8" text-anchor="end" >-20</text>
<rect x="594.5" y="156.0" width="111.0" height="121.5" fill="#000"/>
<rect x="595.7" y="157.2" width="108.6" height="119.1" fill="url(#ybar)"/>
<text x="826.0" y="124.0" font-size="12.20" fill="#c8c8c8" text-anchor="middle" textLength="42.0" lengthAdjust="spacingAndGlyphs" >DeltaH</text>
<rect x="761.5" y="128.5" width="147.0" height="296.0" fill="#232323" stroke="#9a9a9a" stroke-width="1.2"/>
<rect x="756.0" y="127.90" width="5.5" height="1.2" fill="#9a9a9a"/>
<text x="756.5" y="133.5" font-size="13.00" fill="#c8c8c8" text-anchor="end" >6</text>
<rect x="761.5" y="177.23" width="147.0" height="1.2" fill="#8a8a8a"/>
<rect x="756.0" y="177.23" width="5.5" height="1.2" fill="#9a9a9a"/>
<text x="756.5" y="182.8" font-size="13.00" fill="#c8c8c8" text-anchor="end" >4</text>
<rect x="761.5" y="226.57" width="147.0" height="1.2" fill="#8a8a8a"/>
<rect x="756.0" y="226.57" width="5.5" height="1.2" fill="#9a9a9a"/>
<text x="756.5" y="232.2" font-size="13.00" fill="#c8c8c8" text-anchor="end" >2</text>
<rect x="761.5" y="275.90" width="147.0" height="1.2" fill="#8a8a8a"/>
<rect x="756.0" y="275.90" width="5.5" height="1.2" fill="#9a9a9a"/>
<text x="756.5" y="281.5" font-size="13.00" fill="#c8c8c8" text-anchor="end" >0</text>
<rect x="761.5" y="325.23" width="147.0" height="1.2" fill="#8a8a8a"/>
<rect x="756.0" y="325.23" width="5.5" height="1.2" fill="#9a9a9a"/>
<text x="756.5" y="330.8" font-size="13.00" fill="#c8c8c8" text-anchor="end" >-2</text>
<rect x="761.5" y="374.57" width="147.0" height="1.2" fill="#8a8a8a"/>
<rect x="756.0" y="374.57" width="5.5" height="1.2" fill="#9a9a9a"/>
<text x="756.5" y="380.2" font-size="13.00" fill="#c8c8c8" text-anchor="end" >-4</text>
<rect x="756.0" y="423.90" width="5.5" height="1.2" fill="#9a9a9a"/>
<text x="756.5" y="429.5" font-size="13.00" fill="#c8c8c8" text-anchor="end" >-6</text>
<rect x="775.5" y="175.0" width="117.5" height="102.5" fill="#000"/>
<rect x="776.7" y="176.2" width="115.1" height="100.1" fill="url(#ybar)"/>
<rect x="360" y="437" width="567" height="141" fill="#000" />
<text x="373.0" y="461.0" font-size="10.00" fill="#fff" ></text>
<text transform="translate(372.5 481) rotate(-90)" font-size="11" fill="#f0f0f0" textLength="30" lengthAdjust="spacingAndGlyphs">Actual</text>
<text transform="translate(372.5 539) rotate(-90)" font-size="11" fill="#f0f0f0" textLength="31" lengthAdjust="spacingAndGlyphs">Target</text>
<g clip-path="url(#swclip)">
<rect x="376.2" y="442" width="56.6" height="104" fill="#f4f4f4"/>
<rect x="377.4" y="443.2" width="54.2" height="50.8" fill="#f8fbfe"/>
<rect x="377.4" y="494" width="54.2" height="50.8" fill="#fbfbfb"/>
<text x="404.2" y="559.0" font-size="12.00" fill="#f4f4f4" text-anchor="middle" >White</text>
<rect x="441.4" y="442" width="56.6" height="104" fill="#f4f4f4"/>
<rect x="442.6" y="443.2" width="54.2" height="50.8" fill="#e2e4e3"/>
<rect x="442.6" y="494" width="54.2" height="50.8" fill="#e4e4e4"/>
<text x="469.4" y="559.0" font-size="12.00" fill="#f4f4f4" text-anchor="middle" >Gray 80</text>
<rect x="506.6" y="442" width="56.6" height="104" fill="#f4f4f4"/>
<rect x="507.8" y="443.2" width="54.2" height="50.8" fill="#d0d2d0"/>
<rect x="507.8" y="494" width="54.2" height="50.8" fill="#cfcfcf"/>
<text x="534.6" y="559.0" font-size="12.00" fill="#f4f4f4" text-anchor="middle" >Gray 65</text>
<rect x="571.8" y="442" width="56.6" height="104" fill="#f4f4f4"/>
<rect x="573.0" y="443.2" width="54.2" height="50.8" fill="#bbbbbb"/>
<rect x="573.0" y="494" width="54.2" height="50.8" fill="#b8b8b8"/>
<text x="599.8" y="559.0" font-size="12.00" fill="#f4f4f4" text-anchor="middle" >Gray 50</text>
<rect x="637.0" y="442" width="56.6" height="104" fill="#f4f4f4"/>
<rect x="638.2" y="443.2" width="54.2" height="50.8" fill="#a3a3a3"/>
<rect x="638.2" y="494" width="54.2" height="50.8" fill="#9e9e9e"/>
<text x="665.0" y="559.0" font-size="12.00" fill="#f4f4f4" text-anchor="middle" >Gray 35</text>
<rect x="702.2" y="442" width="56.6" height="104" fill="#f4f4f4"/>
<rect x="703.4" y="443.2" width="54.2" height="50.8" fill="#0a0a0c"/>
<rect x="703.4" y="494" width="54.2" height="50.8" fill="#020202"/>
<text x="730.2" y="559.0" font-size="12.00" fill="#f4f4f4" text-anchor="middle" >Black</text>
<rect x="767.4" y="442" width="56.6" height="104" fill="#f4f4f4"/>
<rect x="768.6" y="443.2" width="54.2" height="50.8" fill="#745646"/>
<rect x="768.6" y="494" width="54.2" height="50.8" fill="#76574a"/>
<text x="795.4" y="559.0" font-size="12.00" fill="#f4f4f4" text-anchor="middle" >Dark Skin</text>
<rect x="832.6" y="442" width="56.6" height="104" fill="#f4f4f4"/>
<rect x="833.8" y="443.2" width="54.2" height="50.8" fill="#bd9a84"/>
<rect x="833.8" y="494" width="54.2" height="50.8" fill="#c49380"/>
<text x="860.6" y="559.0" font-size="12.00" fill="#f4f4f4" text-anchor="middle" >Light Skin</text>
<rect x="897.8" y="442" width="56.6" height="104" fill="#f4f4f4"/>
<rect x="899.0" y="443.2" width="54.2" height="50.8" fill="#6a7ea8"/>
<rect x="899.0" y="494" width="54.2" height="50.8" fill="#5f7ea5"/>
<text x="925.8" y="559.0" font-size="12.00" fill="#f4f4f4" text-anchor="middle" >Blue Sky</text>
</g>
<rect x="360" y="578" width="568" height="14" fill="#5c5c5c" />
<rect x="376" y="579.5" width="152" height="11" rx="5.5" fill="#484848"/>
<rect x="361" y="579" width="13" height="12" rx="2" fill="#7c7c7c"/>
<path d="M370.5 581 L365.5 585 L370.5 589 Z" fill="#4a4a4a"/>
<rect x="912" y="579" width="13" height="12" rx="2" fill="#7c7c7c"/>
<path d="M915.5 581 L920.5 585 L915.5 589 Z" fill="#4a4a4a"/>
<rect x="933" y="101" width="666" height="491" fill="#1b1b1b" />
<rect x="940" y="107" width="652" height="479" fill="#333333" />
<text x="1266.4" y="122.9" font-size="12.00" fill="#d0d0d0" text-anchor="middle" textLength="72.0" lengthAdjust="spacingAndGlyphs" >CIE 1931 xy</text>
<rect x="968.5" y="127.9" width="621" height="433.5" fill="#232323" stroke="#a0a0a0" stroke-width="1.1"/>
<rect x="967.95" y="561.4" width="1.1" height="5.5" fill="#a0a0a0"/>
<text x="968.5" y="581.0" font-size="13.40" fill="#d0d0d0" text-anchor="middle" >0</text>
<rect x="963" y="560.85" width="5.5" height="1.1" fill="#a0a0a0"/>
<text x="962.4" y="566.7" font-size="13.40" fill="#d0d0d0" text-anchor="end" >0</text>
<rect x="1041.75" y="561.4" width="1.1" height="5.5" fill="#a0a0a0"/>
<text x="1042.3" y="581.0" font-size="13.40" fill="#d0d0d0" text-anchor="middle" >0.1</text>
<rect x="963" y="509.29" width="5.5" height="1.1" fill="#a0a0a0"/>
<text x="962.4" y="515.1" font-size="13.40" fill="#d0d0d0" text-anchor="end" >0.1</text>
<rect x="1115.55" y="561.4" width="1.1" height="5.5" fill="#a0a0a0"/>
<text x="1116.1" y="581.0" font-size="13.40" fill="#d0d0d0" text-anchor="middle" >0.2</text>
<rect x="963" y="457.73" width="5.5" height="1.1" fill="#a0a0a0"/>
<text x="962.4" y="463.6" font-size="13.40" fill="#d0d0d0" text-anchor="end" >0.2</text>
<rect x="1189.35" y="561.4" width="1.1" height="5.5" fill="#a0a0a0"/>
<text x="1189.9" y="581.0" font-size="13.40" fill="#d0d0d0" text-anchor="middle" >0.3</text>
<rect x="963" y="406.17" width="5.5" height="1.1" fill="#a0a0a0"/>
<text x="962.4" y="412.0" font-size="13.40" fill="#d0d0d0" text-anchor="end" >0.3</text>
<rect x="1263.15" y="561.4" width="1.1" height="5.5" fill="#a0a0a0"/>
<text x="1263.7" y="581.0" font-size="13.40" fill="#d0d0d0" text-anchor="middle" >0.4</text>
<rect x="963" y="354.61" width="5.5" height="1.1" fill="#a0a0a0"/>
<text x="962.4" y="360.5" font-size="13.40" fill="#d0d0d0" text-anchor="end" >0.4</text>
<rect x="1336.95" y="561.4" width="1.1" height="5.5" fill="#a0a0a0"/>
<text x="1337.5" y="581.0" font-size="13.40" fill="#d0d0d0" text-anchor="middle" >0.5</text>
<rect x="963" y="303.05" width="5.5" height="1.1" fill="#a0a0a0"/>
<text x="962.4" y="308.9" font-size="13.40" fill="#d0d0d0" text-anchor="end" >0.5</text>
<rect x="1410.75" y="561.4" width="1.1" height="5.5" fill="#a0a0a0"/>
<text x="1411.3" y="581.0" font-size="13.40" fill="#d0d0d0" text-anchor="middle" >0.6</text>
<rect x="963" y="251.49" width="5.5" height="1.1" fill="#a0a0a0"/>
<text x="962.4" y="257.3" font-size="13.40" fill="#d0d0d0" text-anchor="end" >0.6</text>
<rect x="1484.55" y="561.4" width="1.1" height="5.5" fill="#a0a0a0"/>
<text x="1485.1" y="581.0" font-size="13.40" fill="#d0d0d0" text-anchor="middle" >0.7</text>
<rect x="963" y="199.93" width="5.5" height="1.1" fill="#a0a0a0"/>
<text x="962.4" y="205.8" font-size="13.40" fill="#d0d0d0" text-anchor="end" >0.7</text>
<rect x="1558.35" y="561.4" width="1.1" height="5.5" fill="#a0a0a0"/>
<text x="1558.9" y="581.0" font-size="13.40" fill="#d0d0d0" text-anchor="middle" >0.8</text>
<rect x="963" y="148.37" width="5.5" height="1.1" fill="#a0a0a0"/>
<text x="962.4" y="154.2" font-size="13.40" fill="#d0d0d0" text-anchor="end" >0.8</text>
<g id="ciecol">
<g clip-path="url(#locclip)"><path d="M1199.3 391.5 L2099 385 L2099 408Z" fill="#960001"/><path d="M1199.3 391.5 L2099 396 L2099 419Z" fill="#960003"/><path d="M1199.3 391.5 L2099 406 L2098 429Z" fill="#960004"/><path d="M1199.3 391.5 L2099 417 L2098 440Z" fill="#960006"/><path d="M1199.3 391.5 L2099 427 L2097 450Z" fill="#960007"/><path d="M1199.3 391.5 L2098 438 L2097 461Z" fill="#960009"/><path d="M1199.3 391.5 L2097 448 L2096 471Z" fill="#96000a"/><path d="M1199.3 391.5 L2097 458 L2095 481Z" fill="#96000c"/><path d="M1199.3 391.5 L2096 469 L2094 492Z" fill="#96000d"/><path d="M1199.3 391.5 L2095 479 L2092 502Z" fill="#96000e"/><path d="M1199.3 391.5 L2094 490 L2091 513Z" fill="#960010"/><path d="M1199.3 391.5 L2093 500 L2090 523Z" fill="#960011"/><path d="M1199.3 391.5 L2091 511 L2088 533Z" fill="#960012"/><path d="M1199.3 391.5 L2090 521 L2086 544Z" fill="#960014"/><path d="M1199.3 391.5 L2088 531 L2084 554Z" fill="#960015"/><path d="M1199.3 391.5 L2087 542 L2083 564Z" fill="#960016"/><path d="M1199.3 391.5 L2085 552 L2080 574Z" fill="#960018"/><path d="M1199.3 391.5 L2083 562 L2078 585Z" fill="#960019"/><path d="M1199.3 391.5 L2081 572 L2076 595Z" fill="#96001a"/><path d="M1199.3 391.5 L2079 583 L2074 605Z" fill="#96001b"/><path d="M1199.3 391.5 L2076 593 L2071 615Z" fill="#96001c"/><path d="M1199.3 391.5 L2074 603 L2068 625Z" fill="#96001e"/><path d="M1199.3 391.5 L2072 613 L2066 636Z" fill="#96001f"/><path d="M1199.3 391.5 L2069 623 L2063 646Z" fill="#960020"/><path d="M1199.3 391.5 L2066 633 L2060 656Z" fill="#960021"/><path d="M1199.3 391.5 L2063 644 L2057 666Z" fill="#960022"/><path d="M1199.3 391.5 L2060 654 L2053 676Z" fill="#960023"/><path d="M1199.3 391.5 L2057 664 L2050 685Z" fill="#960024"/><path d="M1199.3 391.5 L2054 674 L2046 695Z" fill="#960025"/><path d="M1199.3 391.5 L2051 683 L2043 705Z" fill="#960026"/><path d="M1199.3 391.5 L2047 693 L2039 715Z" fill="#960028"/><path d="M1199.3 391.5 L2044 703 L2035 725Z" fill="#960029"/><path d="M1199.3 391.5 L2040 713 L2031 734Z" fill="#96002a"/><path d="M1199.3 391.5 L2036 723 L2027 744Z" fill="#96002b"/><path d="M1199.3 391.5 L2032 732 L2023 754Z" fill="#96002c"/><path d="M1199.3 391.5 L2028 742 L2019 763Z" fill="#96002d"/><path d="M1199.3 391.5 L2024 752 L2015 773Z" fill="#96002e"/><path d="M1199.3 391.5 L2020 761 L2010 782Z" fill="#96002f"/><path d="M1199.3 391.5 L2015 771 L2005 792Z" fill="#960030"/><path d="M1199.3 391.5 L2011 780 L2001 801Z" fill="#960031"/><path d="M1199.3 391.5 L2006 790 L1996 810Z" fill="#960032"/><path d="M1199.3 391.5 L2002 799 L1991 820Z" fill="#960033"/><path d="M1199.3 391.5 L1997 808 L1986 829Z" fill="#960034"/><path d="M1199.3 391.5 L1992 818 L1981 838Z" fill="#960035"/><path d="M1199.3 391.5 L1987 827 L1976 847Z" fill="#960036"/><path d="M1199.3 391.5 L1982 836 L1970 856Z" fill="#960037"/><path d="M1199.3 391.5 L1977 845 L1965 865Z" fill="#960038"/><path d="M1199.3 391.5 L1971 854 L1959 874Z" fill="#960039"/><path d="M1199.3 391.5 L1966 863 L1954 883Z" fill="#96003a"/><path d="M1199.3 391.5 L1960 872 L1948 891Z" fill="#96003a"/><path d="M1199.3 391.5 L1955 881 L1942 900Z" fill="#96003b"/><path d="M1199.3 391.5 L1949 890 L1936 909Z" fill="#96003c"/><path d="M1199.3 391.5 L1943 898 L1930 917Z" fill="#96003d"/><path d="M1199.3 391.5 L1937 907 L1924 926Z" fill="#96003e"/><path d="M1199.3 391.5 L1931 915 L1917 934Z" fill="#96003f"/><path d="M1199.3 391.5 L1925 924 L1911 942Z" fill="#960040"/><path d="M1199.3 391.5 L1919 932 L1905 951Z" fill="#960041"/><path d="M1199.3 391.5 L1912 941 L1898 959Z" fill="#960042"/><path d="M1199.3 391.5 L1906 949 L1891 967Z" fill="#960043"/><path d="M1199.3 391.5 L1899 957 L1885 975Z" fill="#960044"/><path d="M1199.3 391.5 L1893 965 L1878 983Z" fill="#960045"/><path d="M1199.3 391.5 L1886 973 L1871 991Z" fill="#960046"/><path d="M1199.3 391.5 L1879 981 L1864 998Z" fill="#960047"/><path d="M1199.3 391.5 L1872 989 L1857 1006Z" fill="#960048"/><path d="M1199.3 391.5 L1865 997 L1850 1014Z" fill="#960049"/><path d="M1199.3 391.5 L1858 1005 L1842 1021Z" fill="#960049"/><path d="M1199.3 391.5 L1851 1012 L1835 1029Z" fill="#96004a"/><path d="M1199.3 391.5 L1844 1020 L1827 1036Z" fill="#96004b"/><path d="M1199.3 391.5 L1836 1027 L1820 1043Z" fill="#96004c"/><path d="M1199.3 391.5 L1829 1034 L1812 1050Z" fill="#96004d"/><path d="M1199.3 391.5 L1821 1042 L1805 1057Z" fill="#96004e"/><path d="M1199.3 391.5 L1814 1049 L1797 1064Z" fill="#96004f"/><path d="M1199.3 391.5 L1806 1056 L1789 1071Z" fill="#960050"/><path d="M1199.3 391.5 L1798 1063 L1781 1078Z" fill="#960051"/><path d="M1199.3 391.5 L1791 1070 L1773 1085Z" fill="#960052"/><path d="M1199.3 391.5 L1783 1077 L1765 1092Z" fill="#960053"/><path d="M1199.3 391.5 L1775 1084 L1757 1098Z" fill="#960054"/><path d="M1199.3 391.5 L1766 1090 L1748 1105Z" fill="#960055"/><path d="M1199.3 391.5 L1758 1097 L1740 1111Z" fill="#960056"/><path d="M1199.3 391.5 L1750 1103 L1732 1117Z" fill="#960057"/><path d="M1199.3 391.5 L1742 1110 L1723 1123Z" fill="#960058"/><path d="M1199.3 391.5 L1733 1116 L1715 1129Z" fill="#960059"/><path d="M1199.3 391.5 L1725 1122 L1706 1135Z" fill="#96005a"/><path d="M1199.3 391.5 L1716 1128 L1697 1141Z" fill="#96005b"/><path d="M1199.3 391.5 L1708 1134 L1689 1147Z" fill="#96005c"/><path d="M1199.3 391.5 L1699 1140 L1680 1152Z" fill="#96005d"/><path d="M1199.3 391.5 L1690 1146 L1671 1158Z" fill="#96005e"/><path d="M1199.3 391.5 L1682 1151 L1662 1163Z" fill="#96005f"/><path d="M1199.3 391.5 L1673 1157 L1653 1169Z" fill="#960060"/><path d="M1199.3 391.5 L1664 1162 L1644 1174Z" fill="#960061"/><path d="M1199.3 391.5 L1655 1168 L1635 1179Z" fill="#960062"/><path d="M1199.3 391.5 L1646 1173 L1625 1184Z" fill="#960063"/><path d="M1199.3 391.5 L1637 1178 L1616 1189Z" fill="#960064"/><path d="M1199.3 391.5 L1627 1183 L1607 1194Z" fill="#960065"/><path d="M1199.3 391.5 L1618 1188 L1598 1199Z" fill="#960066"/><path d="M1199.3 391.5 L1609 1193 L1588 1203Z" fill="#960067"/><path d="M1199.3 391.5 L1599 1198 L1579 1208Z" fill="#960068"/><path d="M1199.3 391.5 L1590 1202 L1569 1212Z" fill="#960069"/><path d="M1199.3 391.5 L1581 1207 L1560 1216Z" fill="#96006b"/><path d="M1199.3 391.5 L1571 1211 L1550 1220Z" fill="#96006c"/><path d="M1199.3 391.5 L1562 1215 L1540 1224Z" fill="#96006d"/><path d="M1199.3 391.5 L1552 1220 L1531 1228Z" fill="#96006e"/><path d="M1199.3 391.5 L1542 1224 L1521 1232Z" fill="#96006f"/><path d="M1199.3 391.5 L1533 1227 L1511 1236Z" fill="#960070"/><path d="M1199.3 391.5 L1523 1231 L1501 1239Z" fill="#960072"/><path d="M1199.3 391.5 L1513 1235 L1491 1243Z" fill="#960073"/><path d="M1199.3 391.5 L1503 1239 L1481 1246Z" fill="#960074"/><path d="M1199.3 391.5 L1493 1242 L1471 1249Z" fill="#960075"/><path d="M1199.3 391.5 L1483 1245 L1461 1252Z" fill="#960077"/><path d="M1199.3 391.5 L1473 1249 L1451 1255Z" fill="#960078"/><path d="M1199.3 391.5 L1463 1252 L1441 1258Z" fill="#960079"/><path d="M1199.3 391.5 L1453 1255 L1431 1261Z" fill="#96007a"/><path d="M1199.3 391.5 L1443 1258 L1421 1264Z" fill="#96007c"/><path d="M1199.3 391.5 L1433 1261 L1411 1266Z" fill="#96007d"/><path d="M1199.3 391.5 L1423 1263 L1401 1269Z" fill="#96007f"/><path d="M1199.3 391.5 L1413 1266 L1390 1271Z" fill="#960080"/><path d="M1199.3 391.5 L1403 1268 L1380 1273Z" fill="#960081"/><path d="M1199.3 391.5 L1393 1270 L1370 1275Z" fill="#960083"/><path d="M1199.3 391.5 L1382 1273 L1360 1277Z" fill="#960084"/><path d="M1199.3 391.5 L1372 1275 L1349 1279Z" fill="#960086"/><path d="M1199.3 391.5 L1362 1277 L1339 1281Z" fill="#960087"/><path d="M1199.3 391.5 L1351 1279 L1329 1282Z" fill="#960089"/><path d="M1199.3 391.5 L1341 1280 L1318 1284Z" fill="#96008b"/><path d="M1199.3 391.5 L1331 1282 L1308 1285Z" fill="#96008c"/><path d="M1199.3 391.5 L1320 1283 L1298 1286Z" fill="#96008e"/><path d="M1199.3 391.5 L1310 1285 L1287 1287Z" fill="#960090"/><path d="M1199.3 391.5 L1300 1286 L1277 1288Z" fill="#960091"/><path d="M1199.3 391.5 L1289 1287 L1266 1289Z" fill="#960093"/><path d="M1199.3 391.5 L1279 1288 L1256 1290Z" fill="#960095"/><path d="M1199.3 391.5 L1268 1289 L1245 1290Z" fill="#960096"/><path d="M1199.3 391.5 L1258 1290 L1235 1291Z" fill="#940096"/><path d="M1199.3 391.5 L1247 1290 L1224 1291Z" fill="#920096"/><path d="M1199.3 391.5 L1237 1291 L1214 1291Z" fill="#900096"/><path d="M1199.3 391.5 L1226 1291 L1203 1291Z" fill="#8e0096"/><path d="M1199.3 391.5 L1216 1291 L1193 1291Z" fill="#8d0096"/><path d="M1199.3 391.5 L1206 1291 L1183 1291Z" fill="#8b0096"/><path d="M1199.3 391.5 L1195 1291 L1172 1291Z" fill="#890096"/><path d="M1199.3 391.5 L1185 1291 L1162 1291Z" fill="#870096"/><path d="M1199.3 391.5 L1174 1291 L1151 1290Z" fill="#850096"/><path d="M1199.3 391.5 L1164 1291 L1141 1290Z" fill="#830096"/><path d="M1199.3 391.5 L1153 1290 L1130 1289Z" fill="#810096"/><path d="M1199.3 391.5 L1143 1290 L1120 1288Z" fill="#7f0096"/><path d="M1199.3 391.5 L1132 1289 L1109 1287Z" fill="#7e0096"/><path d="M1199.3 391.5 L1122 1288 L1099 1286Z" fill="#7c0096"/><path d="M1199.3 391.5 L1111 1287 L1089 1285Z" fill="#7a0096"/><path d="M1199.3 391.5 L1101 1286 L1078 1283Z" fill="#780096"/><path d="M1199.3 391.5 L1091 1285 L1068 1282Z" fill="#760096"/><path d="M1199.3 391.5 L1080 1284 L1057 1280Z" fill="#740096"/><path d="M1199.3 391.5 L1070 1282 L1047 1279Z" fill="#720096"/><path d="M1199.3 391.5 L1060 1281 L1037 1277Z" fill="#700096"/><path d="M1199.3 391.5 L1049 1279 L1027 1275Z" fill="#6e0096"/><path d="M1199.3 391.5 L1039 1277 L1016 1273Z" fill="#6c0096"/><path d="M1199.3 391.5 L1029 1275 L1006 1270Z" fill="#6a0096"/><path d="M1199.3 391.5 L1018 1273 L996 1268Z" fill="#680096"/><path d="M1199.3 391.5 L1008 1271 L986 1266Z" fill="#660096"/><path d="M1199.3 391.5 L998 1269 L975 1263Z" fill="#640096"/><path d="M1199.3 391.5 L988 1266 L965 1261Z" fill="#620096"/><path d="M1199.3 391.5 L977 1264 L955 1258Z" fill="#600096"/><path d="M1199.3 391.5 L967 1261 L945 1255Z" fill="#5e0096"/><path d="M1199.3 391.5 L957 1258 L935 1252Z" fill="#5c0096"/><path d="M1199.3 391.5 L947 1255 L925 1249Z" fill="#5a0096"/><path d="M1199.3 391.5 L937 1252 L915 1245Z" fill="#580096"/><path d="M1199.3 391.5 L927 1249 L905 1242Z" fill="#560096"/><path d="M1199.3 391.5 L917 1246 L895 1239Z" fill="#540096"/><path d="M1199.3 391.5 L907 1243 L886 1235Z" fill="#520096"/><path d="M1199.3 391.5 L897 1239 L876 1231Z" fill="#500096"/><path d="M1199.3 391.5 L888 1236 L866 1227Z" fill="#4e0096"/><path d="M1199.3 391.5 L878 1232 L856 1224Z" fill="#4b0096"/><path d="M1199.3 391.5 L868 1228 L847 1220Z" fill="#490096"/><path d="M1199.3 391.5 L858 1224 L837 1215Z" fill="#470096"/><path d="M1199.3 391.5 L849 1220 L827 1211Z" fill="#450096"/><path d="M1199.3 391.5 L839 1216 L818 1207Z" fill="#430096"/><path d="M1199.3 391.5 L829 1212 L809 1202Z" fill="#400096"/><path d="M1199.3 391.5 L820 1208 L799 1198Z" fill="#3e0096"/><path d="M1199.3 391.5 L810 1203 L790 1193Z" fill="#3c0096"/><path d="M1199.3 391.5 L801 1199 L780 1188Z" fill="#390096"/><path d="M1199.3 391.5 L792 1194 L771 1183Z" fill="#370096"/><path d="M1199.3 391.5 L782 1189 L762 1178Z" fill="#350096"/><path d="M1199.3 391.5 L773 1184 L753 1173Z" fill="#320096"/><path d="M1199.3 391.5 L764 1179 L744 1168Z" fill="#300096"/><path d="M1199.3 391.5 L755 1174 L735 1162Z" fill="#2d0096"/><path d="M1199.3 391.5 L746 1169 L726 1157Z" fill="#2b0096"/><path d="M1199.3 391.5 L737 1163 L717 1151Z" fill="#280096"/><path d="M1199.3 391.5 L728 1158 L708 1146Z" fill="#250096"/><path d="M1199.3 391.5 L719 1152 L699 1140Z" fill="#230096"/><path d="M1199.3 391.5 L710 1147 L691 1134Z" fill="#200096"/><path d="M1199.3 391.5 L701 1141 L682 1128Z" fill="#1d0096"/><path d="M1199.3 391.5 L693 1135 L674 1122Z" fill="#1b0096"/><path d="M1199.3 391.5 L684 1129 L665 1116Z" fill="#180096"/><path d="M1199.3 391.5 L675 1123 L657 1110Z" fill="#150096"/><path d="M1199.3 391.5 L667 1117 L648 1103Z" fill="#120096"/><path d="M1199.3 391.5 L658 1111 L640 1097Z" fill="#0f0096"/><path d="M1199.3 391.5 L650 1105 L632 1090Z" fill="#0c0096"/><path d="M1199.3 391.5 L642 1098 L624 1084Z" fill="#090096"/><path d="M1199.3 391.5 L634 1092 L616 1077Z" fill="#060096"/><path d="M1199.3 391.5 L626 1085 L608 1070Z" fill="#020096"/><path d="M1199.3 391.5 L618 1078 L600 1063Z" fill="#000096"/><path d="M1199.3 391.5 L610 1071 L592 1056Z" fill="#000096"/><path d="M1199.3 391.5 L602 1064 L585 1049Z" fill="#000096"/><path d="M1199.3 391.5 L594 1057 L577 1042Z" fill="#000096"/><path d="M1199.3 391.5 L586 1050 L570 1034Z" fill="#000096"/><path d="M1199.3 391.5 L579 1043 L562 1027Z" fill="#000096"/><path d="M1199.3 391.5 L571 1036 L555 1020Z" fill="#000196"/><path d="M1199.3 391.5 L564 1029 L548 1012Z" fill="#000196"/><path d="M1199.3 391.5 L556 1021 L540 1005Z" fill="#000196"/><path d="M1199.3 391.5 L549 1014 L533 997Z" fill="#000296"/><path d="M1199.3 391.5 L542 1006 L526 989Z" fill="#000296"/><path d="M1199.3 391.5 L535 998 L519 981Z" fill="#000396"/><path d="M1199.3 391.5 L528 991 L513 973Z" fill="#000496"/><path d="M1199.3 391.5 L521 983 L506 965Z" fill="#000496"/><path d="M1199.3 391.5 L514 975 L499 957Z" fill="#000596"/><path d="M1199.3 391.5 L507 967 L493 949Z" fill="#000696"/><path d="M1199.3 391.5 L501 959 L486 941Z" fill="#000796"/><path d="M1199.3 391.5 L494 951 L480 932Z" fill="#000896"/><path d="M1199.3 391.5 L487 942 L474 924Z" fill="#000996"/><path d="M1199.3 391.5 L481 934 L467 915Z" fill="#000a96"/><path d="M1199.3 391.5 L475 926 L461 907Z" fill="#000b96"/><path d="M1199.3 391.5 L469 917 L455 898Z" fill="#000c96"/><path d="M1199.3 391.5 L463 909 L450 890Z" fill="#000d96"/><path d="M1199.3 391.5 L457 900 L444 881Z" fill="#000f96"/><path d="M1199.3 391.5 L451 891 L438 872Z" fill="#001096"/><path d="M1199.3 391.5 L445 883 L433 863Z" fill="#001196"/><path d="M1199.3 391.5 L439 874 L427 854Z" fill="#001396"/><path d="M1199.3 391.5 L434 865 L422 845Z" fill="#001496"/><path d="M1199.3 391.5 L428 856 L417 836Z" fill="#001696"/><path d="M1199.3 391.5 L423 847 L412 827Z" fill="#001896"/><path d="M1199.3 391.5 L418 838 L407 818Z" fill="#001996"/><path d="M1199.3 391.5 L413 829 L402 808Z" fill="#001b96"/><path d="M1199.3 391.5 L408 820 L397 799Z" fill="#001d96"/><path d="M1199.3 391.5 L403 810 L392 790Z" fill="#001f96"/><path d="M1199.3 391.5 L398 801 L388 780Z" fill="#002196"/><path d="M1199.3 391.5 L393 792 L383 771Z" fill="#002396"/><path d="M1199.3 391.5 L389 782 L379 761Z" fill="#002596"/><path d="M1199.3 391.5 L384 773 L375 752Z" fill="#002796"/><path d="M1199.3 391.5 L380 763 L370 742Z" fill="#002996"/><path d="M1199.3 391.5 L375 754 L366 732Z" fill="#002b96"/><path d="M1199.3 391.5 L371 744 L362 723Z" fill="#002d96"/><path d="M1199.3 391.5 L367 734 L359 713Z" fill="#002f96"/><path d="M1199.3 391.5 L363 725 L355 703Z" fill="#003296"/><path d="M1199.3 391.5 L359 715 L351 693Z" fill="#003496"/><path d="M1199.3 391.5 L356 705 L348 683Z" fill="#003696"/><path d="M1199.3 391.5 L352 695 L345 674Z" fill="#003996"/><path d="M1199.3 391.5 L349 685 L341 664Z" fill="#003b96"/><path d="M1199.3 391.5 L345 676 L338 654Z" fill="#003e96"/><path d="M1199.3 391.5 L342 666 L335 644Z" fill="#004196"/><path d="M1199.3 391.5 L339 656 L332 633Z" fill="#004396"/><path d="M1199.3 391.5 L336 646 L330 623Z" fill="#004696"/><path d="M1199.3 391.5 L333 636 L327 613Z" fill="#004996"/><path d="M1199.3 391.5 L330 625 L325 603Z" fill="#004c96"/><path d="M1199.3 391.5 L328 615 L322 593Z" fill="#004f96"/><path d="M1199.3 391.5 L325 605 L320 583Z" fill="#005196"/><path d="M1199.3 391.5 L323 595 L318 572Z" fill="#005496"/><path d="M1199.3 391.5 L320 585 L316 562Z" fill="#005896"/><path d="M1199.3 391.5 L318 574 L314 552Z" fill="#005b96"/><path d="M1199.3 391.5 L316 564 L312 542Z" fill="#005e96"/><path d="M1199.3 391.5 L314 554 L310 531Z" fill="#006196"/><path d="M1199.3 391.5 L312 544 L309 521Z" fill="#006496"/><path d="M1199.3 391.5 L311 533 L307 511Z" fill="#006896"/><path d="M1199.3 391.5 L309 523 L306 500Z" fill="#006b96"/><path d="M1199.3 391.5 L307 513 L305 490Z" fill="#006f96"/><path d="M1199.3 391.5 L306 502 L304 479Z" fill="#007296"/><path d="M1199.3 391.5 L305 492 L303 469Z" fill="#007696"/><path d="M1199.3 391.5 L304 481 L302 458Z" fill="#007996"/><path d="M1199.3 391.5 L303 471 L301 448Z" fill="#007d96"/><path d="M1199.3 391.5 L302 461 L300 438Z" fill="#008196"/><path d="M1199.3 391.5 L301 450 L300 427Z" fill="#008596"/><path d="M1199.3 391.5 L301 440 L300 417Z" fill="#008996"/><path d="M1199.3 391.5 L300 429 L299 406Z" fill="#008d96"/><path d="M1199.3 391.5 L300 419 L299 396Z" fill="#009196"/><path d="M1199.3 391.5 L299 408 L299 385Z" fill="#009596"/><path d="M1199.3 391.5 L299 398 L299 375Z" fill="#009694"/><path d="M1199.3 391.5 L299 387 L300 364Z" fill="#009690"/><path d="M1199.3 391.5 L299 377 L300 354Z" fill="#00968c"/><path d="M1199.3 391.5 L300 366 L301 343Z" fill="#009688"/><path d="M1199.3 391.5 L300 356 L301 333Z" fill="#009684"/><path d="M1199.3 391.5 L300 345 L302 322Z" fill="#009681"/><path d="M1199.3 391.5 L301 335 L303 312Z" fill="#00967d"/><path d="M1199.3 391.5 L302 325 L304 302Z" fill="#00967a"/><path d="M1199.3 391.5 L303 314 L305 291Z" fill="#009677"/><path d="M1199.3 391.5 L304 304 L306 281Z" fill="#009674"/><path d="M1199.3 391.5 L305 293 L307 270Z" fill="#009671"/><path d="M1199.3 391.5 L306 283 L309 260Z" fill="#00966e"/><path d="M1199.3 391.5 L307 272 L311 250Z" fill="#00966b"/><path d="M1199.3 391.5 L309 262 L312 239Z" fill="#009668"/><path d="M1199.3 391.5 L310 252 L314 229Z" fill="#009666"/><path d="M1199.3 391.5 L312 241 L316 219Z" fill="#009663"/><path d="M1199.3 391.5 L314 231 L318 208Z" fill="#009661"/><path d="M1199.3 391.5 L316 221 L320 198Z" fill="#00965e"/><path d="M1199.3 391.5 L318 211 L323 188Z" fill="#00965c"/><path d="M1199.3 391.5 L320 200 L325 178Z" fill="#00965a"/><path d="M1199.3 391.5 L322 190 L328 168Z" fill="#009657"/><path d="M1199.3 391.5 L325 180 L330 158Z" fill="#009655"/><path d="M1199.3 391.5 L327 170 L333 147Z" fill="#009653"/><path d="M1199.3 391.5 L330 160 L336 137Z" fill="#009651"/><path d="M1199.3 391.5 L332 149 L339 127Z" fill="#00964f"/><path d="M1199.3 391.5 L335 139 L342 117Z" fill="#00964d"/><path d="M1199.3 391.5 L338 129 L345 107Z" fill="#00964b"/><path d="M1199.3 391.5 L341 119 L349 97Z" fill="#009649"/><path d="M1199.3 391.5 L345 109 L352 88Z" fill="#009648"/><path d="M1199.3 391.5 L348 99 L356 78Z" fill="#009646"/><path d="M1199.3 391.5 L351 90 L359 68Z" fill="#009644"/><path d="M1199.3 391.5 L355 80 L363 58Z" fill="#009642"/><path d="M1199.3 391.5 L359 70 L367 49Z" fill="#009641"/><path d="M1199.3 391.5 L362 60 L371 39Z" fill="#00963f"/><path d="M1199.3 391.5 L366 50 L375 29Z" fill="#00963e"/><path d="M1199.3 391.5 L370 41 L380 20Z" fill="#00963c"/><path d="M1199.3 391.5 L375 31 L384 10Z" fill="#00963b"/><path d="M1199.3 391.5 L379 22 L389 1Z" fill="#009639"/><path d="M1199.3 391.5 L383 12 L393 -9Z" fill="#009638"/><path d="M1199.3 391.5 L388 3 L398 -18Z" fill="#009636"/><path d="M1199.3 391.5 L392 -7 L403 -27Z" fill="#009635"/><path d="M1199.3 391.5 L397 -16 L408 -37Z" fill="#009634"/><path d="M1199.3 391.5 L402 -25 L413 -46Z" fill="#009632"/><path d="M1199.3 391.5 L407 -35 L418 -55Z" fill="#009631"/><path d="M1199.3 391.5 L412 -44 L423 -64Z" fill="#009630"/><path d="M1199.3 391.5 L417 -53 L428 -73Z" fill="#00962f"/><path d="M1199.3 391.5 L422 -62 L434 -82Z" fill="#00962d"/><path d="M1199.3 391.5 L427 -71 L439 -91Z" fill="#00962c"/><path d="M1199.3 391.5 L433 -80 L445 -100Z" fill="#00962b"/><path d="M1199.3 391.5 L438 -89 L451 -108Z" fill="#00962a"/><path d="M1199.3 391.5 L444 -98 L457 -117Z" fill="#009629"/><path d="M1199.3 391.5 L450 -107 L463 -126Z" fill="#009628"/><path d="M1199.3 391.5 L455 -115 L469 -134Z" fill="#009627"/><path d="M1199.3 391.5 L461 -124 L475 -143Z" fill="#009626"/><path d="M1199.3 391.5 L467 -132 L481 -151Z" fill="#009625"/><path d="M1199.3 391.5 L474 -141 L487 -159Z" fill="#009624"/><path d="M1199.3 391.5 L480 -149 L494 -168Z" fill="#009623"/><path d="M1199.3 391.5 L486 -158 L501 -176Z" fill="#009622"/><path d="M1199.3 391.5 L493 -166 L507 -184Z" fill="#009621"/><path d="M1199.3 391.5 L499 -174 L514 -192Z" fill="#009620"/><path d="M1199.3 391.5 L506 -182 L521 -200Z" fill="#00961f"/><path d="M1199.3 391.5 L513 -190 L528 -208Z" fill="#00961e"/><path d="M1199.3 391.5 L519 -198 L535 -215Z" fill="#00961d"/><path d="M1199.3 391.5 L526 -206 L542 -223Z" fill="#00961c"/><path d="M1199.3 391.5 L533 -214 L549 -231Z" fill="#00961b"/><path d="M1199.3 391.5 L540 -222 L556 -238Z" fill="#00961a"/><path d="M1199.3 391.5 L548 -229 L564 -246Z" fill="#00961a"/><path d="M1199.3 391.5 L555 -237 L571 -253Z" fill="#009619"/><path d="M1199.3 391.5 L562 -244 L579 -260Z" fill="#009618"/><path d="M1199.3 391.5 L570 -252 L586 -267Z" fill="#009617"/><path d="M1199.3 391.5 L577 -259 L594 -275Z" fill="#009616"/><path d="M1199.3 391.5 L585 -266 L602 -282Z" fill="#009616"/><path d="M1199.3 391.5 L592 -273 L610 -288Z" fill="#009615"/><path d="M1199.3 391.5 L600 -280 L618 -295Z" fill="#009614"/><path d="M1199.3 391.5 L608 -287 L626 -302Z" fill="#009613"/><path d="M1199.3 391.5 L616 -294 L634 -309Z" fill="#009613"/><path d="M1199.3 391.5 L624 -301 L642 -315Z" fill="#009612"/><path d="M1199.3 391.5 L632 -307 L650 -322Z" fill="#009611"/><path d="M1199.3 391.5 L640 -314 L658 -328Z" fill="#009611"/><path d="M1199.3 391.5 L648 -320 L667 -334Z" fill="#009610"/><path d="M1199.3 391.5 L657 -327 L675 -340Z" fill="#00960f"/><path d="M1199.3 391.5 L665 -333 L684 -346Z" fill="#00960f"/><path d="M1199.3 391.5 L674 -339 L693 -352Z" fill="#00960e"/><path d="M1199.3 391.5 L682 -345 L701 -358Z" fill="#00960e"/><path d="M1199.3 391.5 L691 -351 L710 -364Z" fill="#00960d"/><path d="M1199.3 391.5 L699 -357 L719 -370Z" fill="#00960c"/><path d="M1199.3 391.5 L708 -363 L728 -375Z" fill="#00960c"/><path d="M1199.3 391.5 L717 -368 L737 -381Z" fill="#00960b"/><path d="M1199.3 391.5 L726 -374 L746 -386Z" fill="#00960b"/><path d="M1199.3 391.5 L735 -379 L755 -391Z" fill="#00960a"/><path d="M1199.3 391.5 L744 -385 L764 -396Z" fill="#00960a"/><path d="M1199.3 391.5 L753 -390 L773 -401Z" fill="#009609"/><path d="M1199.3 391.5 L762 -395 L782 -406Z" fill="#009609"/><path d="M1199.3 391.5 L771 -400 L792 -411Z" fill="#009608"/><path d="M1199.3 391.5 L780 -405 L801 -416Z" fill="#009608"/><path d="M1199.3 391.5 L790 -410 L810 -420Z" fill="#009607"/><path d="M1199.3 391.5 L799 -415 L820 -425Z" fill="#009607"/><path d="M1199.3 391.5 L809 -419 L829 -429Z" fill="#009607"/><path d="M1199.3 391.5 L818 -424 L839 -433Z" fill="#009606"/><path d="M1199.3 391.5 L827 -428 L849 -437Z" fill="#009606"/><path d="M1199.3 391.5 L837 -432 L858 -441Z" fill="#009605"/><path d="M1199.3 391.5 L847 -437 L868 -445Z" fill="#009605"/><path d="M1199.3 391.5 L856 -441 L878 -449Z" fill="#009605"/><path d="M1199.3 391.5 L866 -445 L888 -453Z" fill="#009604"/><path d="M1199.3 391.5 L876 -448 L897 -456Z" fill="#009604"/><path d="M1199.3 391.5 L886 -452 L907 -460Z" fill="#009604"/><path d="M1199.3 391.5 L895 -456 L917 -463Z" fill="#009603"/><path d="M1199.3 391.5 L905 -459 L927 -466Z" fill="#009603"/><path d="M1199.3 391.5 L915 -463 L937 -470Z" fill="#009603"/><path d="M1199.3 391.5 L925 -466 L947 -473Z" fill="#009602"/><path d="M1199.3 391.5 L935 -469 L957 -475Z" fill="#009602"/><path d="M1199.3 391.5 L945 -472 L967 -478Z" fill="#009602"/><path d="M1199.3 391.5 L955 -475 L977 -481Z" fill="#009602"/><path d="M1199.3 391.5 L965 -478 L988 -483Z" fill="#009601"/><path d="M1199.3 391.5 L975 -480 L998 -486Z" fill="#009601"/><path d="M1199.3 391.5 L986 -483 L1008 -488Z" fill="#009601"/><path d="M1199.3 391.5 L996 -485 L1018 -490Z" fill="#009601"/><path d="M1199.3 391.5 L1006 -488 L1029 -492Z" fill="#009601"/><path d="M1199.3 391.5 L1016 -490 L1039 -494Z" fill="#009601"/><path d="M1199.3 391.5 L1027 -492 L1049 -496Z" fill="#009600"/><path d="M1199.3 391.5 L1037 -494 L1060 -498Z" fill="#009600"/><path d="M1199.3 391.5 L1047 -496 L1070 -499Z" fill="#009600"/><path d="M1199.3 391.5 L1057 -497 L1080 -501Z" fill="#009600"/><path d="M1199.3 391.5 L1068 -499 L1091 -502Z" fill="#009600"/><path d="M1199.3 391.5 L1078 -500 L1101 -503Z" fill="#009600"/><path d="M1199.3 391.5 L1089 -502 L1111 -504Z" fill="#009600"/><path d="M1199.3 391.5 L1099 -503 L1122 -505Z" fill="#009600"/><path d="M1199.3 391.5 L1109 -504 L1132 -506Z" fill="#009600"/><path d="M1199.3 391.5 L1120 -505 L1143 -507Z" fill="#009600"/><path d="M1199.3 391.5 L1130 -506 L1153 -507Z" fill="#009600"/><path d="M1199.3 391.5 L1141 -507 L1164 -508Z" fill="#029600"/><path d="M1199.3 391.5 L1151 -507 L1174 -508Z" fill="#049600"/><path d="M1199.3 391.5 L1162 -508 L1185 -508Z" fill="#069600"/><path d="M1199.3 391.5 L1172 -508 L1195 -509Z" fill="#089600"/><path d="M1199.3 391.5 L1183 -508 L1206 -509Z" fill="#0a9600"/><path d="M1199.3 391.5 L1193 -509 L1216 -508Z" fill="#0c9600"/><path d="M1199.3 391.5 L1203 -509 L1226 -508Z" fill="#0e9600"/><path d="M1199.3 391.5 L1214 -508 L1237 -508Z" fill="#0f9600"/><path d="M1199.3 391.5 L1224 -508 L1247 -507Z" fill="#119600"/><path d="M1199.3 391.5 L1235 -508 L1258 -507Z" fill="#139600"/><path d="M1199.3 391.5 L1245 -507 L1268 -506Z" fill="#159600"/><path d="M1199.3 391.5 L1256 -507 L1279 -505Z" fill="#179600"/><path d="M1199.3 391.5 L1266 -506 L1289 -504Z" fill="#199600"/><path d="M1199.3 391.5 L1277 -505 L1300 -503Z" fill="#1b9600"/><path d="M1199.3 391.5 L1287 -504 L1310 -502Z" fill="#1d9600"/><path d="M1199.3 391.5 L1298 -503 L1320 -500Z" fill="#1f9600"/><path d="M1199.3 391.5 L1308 -502 L1331 -499Z" fill="#219600"/><path d="M1199.3 391.5 L1318 -501 L1341 -497Z" fill="#229600"/><path d="M1199.3 391.5 L1329 -499 L1351 -496Z" fill="#249600"/><path d="M1199.3 391.5 L1339 -498 L1362 -494Z" fill="#269600"/><path d="M1199.3 391.5 L1349 -496 L1372 -492Z" fill="#289600"/><path d="M1199.3 391.5 L1360 -494 L1382 -490Z" fill="#2a9600"/><path d="M1199.3 391.5 L1370 -492 L1393 -488Z" fill="#2c9600"/><path d="M1199.3 391.5 L1380 -490 L1403 -485Z" fill="#2e9600"/><path d="M1199.3 391.5 L1390 -488 L1413 -483Z" fill="#309600"/><path d="M1199.3 391.5 L1401 -486 L1423 -480Z" fill="#329600"/><path d="M1199.3 391.5 L1411 -483 L1433 -478Z" fill="#349600"/><path d="M1199.3 391.5 L1421 -481 L1443 -475Z" fill="#369600"/><path d="M1199.3 391.5 L1431 -478 L1453 -472Z" fill="#389600"/><path d="M1199.3 391.5 L1441 -475 L1463 -469Z" fill="#3a9600"/><path d="M1199.3 391.5 L1451 -473 L1473 -466Z" fill="#3c9600"/><path d="M1199.3 391.5 L1461 -470 L1483 -463Z" fill="#3e9600"/><path d="M1199.3 391.5 L1471 -466 L1493 -459Z" fill="#409600"/><path d="M1199.3 391.5 L1481 -463 L1503 -456Z" fill="#429600"/><path d="M1199.3 391.5 L1491 -460 L1513 -452Z" fill="#449600"/><path d="M1199.3 391.5 L1501 -456 L1523 -448Z" fill="#479600"/><path d="M1199.3 391.5 L1511 -453 L1533 -445Z" fill="#499600"/><path d="M1199.3 391.5 L1521 -449 L1542 -441Z" fill="#4b9600"/><path d="M1199.3 391.5 L1531 -445 L1552 -437Z" fill="#4d9600"/><path d="M1199.3 391.5 L1540 -441 L1562 -432Z" fill="#4f9600"/><path d="M1199.3 391.5 L1550 -437 L1571 -428Z" fill="#529600"/><path d="M1199.3 391.5 L1560 -433 L1581 -424Z" fill="#549600"/><path d="M1199.3 391.5 L1569 -429 L1590 -419Z" fill="#569600"/><path d="M1199.3 391.5 L1579 -425 L1599 -415Z" fill="#589600"/><path d="M1199.3 391.5 L1588 -420 L1609 -410Z" fill="#5b9600"/><path d="M1199.3 391.5 L1598 -416 L1618 -405Z" fill="#5d9600"/><path d="M1199.3 391.5 L1607 -411 L1627 -400Z" fill="#5f9600"/><path d="M1199.3 391.5 L1616 -406 L1637 -395Z" fill="#629600"/><path d="M1199.3 391.5 L1625 -401 L1646 -390Z" fill="#649600"/><path d="M1199.3 391.5 L1635 -396 L1655 -385Z" fill="#679600"/><path d="M1199.3 391.5 L1644 -391 L1664 -379Z" fill="#699600"/><path d="M1199.3 391.5 L1653 -386 L1673 -374Z" fill="#6c9600"/><path d="M1199.3 391.5 L1662 -381 L1682 -368Z" fill="#6e9600"/><path d="M1199.3 391.5 L1671 -375 L1690 -363Z" fill="#719600"/><path d="M1199.3 391.5 L1680 -370 L1699 -357Z" fill="#749600"/><path d="M1199.3 391.5 L1689 -364 L1708 -351Z" fill="#769600"/><path d="M1199.3 391.5 L1697 -358 L1716 -345Z" fill="#799600"/><path d="M1199.3 391.5 L1706 -352 L1725 -339Z" fill="#7c9600"/><path d="M1199.3 391.5 L1715 -346 L1733 -333Z" fill="#7f9600"/><path d="M1199.3 391.5 L1723 -340 L1742 -327Z" fill="#829600"/><path d="M1199.3 391.5 L1732 -334 L1750 -320Z" fill="#859600"/><path d="M1199.3 391.5 L1740 -328 L1758 -314Z" fill="#879600"/><path d="M1199.3 391.5 L1748 -322 L1766 -307Z" fill="#8b9600"/><path d="M1199.3 391.5 L1757 -315 L1775 -301Z" fill="#8e9600"/><path d="M1199.3 391.5 L1765 -309 L1783 -294Z" fill="#919600"/><path d="M1199.3 391.5 L1773 -302 L1791 -287Z" fill="#949600"/><path d="M1199.3 391.5 L1781 -295 L1798 -280Z" fill="#969600"/><path d="M1199.3 391.5 L1789 -288 L1806 -273Z" fill="#969200"/><path d="M1199.3 391.5 L1797 -282 L1814 -266Z" fill="#968f00"/><path d="M1199.3 391.5 L1805 -275 L1821 -259Z" fill="#968c00"/><path d="M1199.3 391.5 L1812 -267 L1829 -252Z" fill="#968900"/><path d="M1199.3 391.5 L1820 -260 L1836 -244Z" fill="#968600"/><path d="M1199.3 391.5 L1827 -253 L1844 -237Z" fill="#968300"/><path d="M1199.3 391.5 L1835 -246 L1851 -229Z" fill="#968000"/><path d="M1199.3 391.5 L1842 -238 L1858 -222Z" fill="#967e00"/><path d="M1199.3 391.5 L1850 -231 L1865 -214Z" fill="#967b00"/><path d="M1199.3 391.5 L1857 -223 L1872 -206Z" fill="#967800"/><path d="M1199.3 391.5 L1864 -215 L1879 -198Z" fill="#967600"/><path d="M1199.3 391.5 L1871 -208 L1886 -190Z" fill="#967300"/><path d="M1199.3 391.5 L1878 -200 L1893 -182Z" fill="#967100"/><path d="M1199.3 391.5 L1885 -192 L1899 -174Z" fill="#966e00"/><path d="M1199.3 391.5 L1891 -184 L1906 -166Z" fill="#966c00"/><path d="M1199.3 391.5 L1898 -176 L1912 -158Z" fill="#966900"/><path d="M1199.3 391.5 L1905 -168 L1919 -149Z" fill="#966700"/><path d="M1199.3 391.5 L1911 -159 L1925 -141Z" fill="#966400"/><path d="M1199.3 391.5 L1917 -151 L1931 -132Z" fill="#966200"/><path d="M1199.3 391.5 L1924 -143 L1937 -124Z" fill="#966000"/><path d="M1199.3 391.5 L1930 -134 L1943 -115Z" fill="#965e00"/><path d="M1199.3 391.5 L1936 -126 L1949 -107Z" fill="#965b00"/><path d="M1199.3 391.5 L1942 -117 L1955 -98Z" fill="#965900"/><path d="M1199.3 391.5 L1948 -108 L1960 -89Z" fill="#965700"/><path d="M1199.3 391.5 L1954 -100 L1966 -80Z" fill="#965500"/><path d="M1199.3 391.5 L1959 -91 L1971 -71Z" fill="#965300"/><path d="M1199.3 391.5 L1965 -82 L1977 -62Z" fill="#965100"/><path d="M1199.3 391.5 L1970 -73 L1982 -53Z" fill="#964f00"/><path d="M1199.3 391.5 L1976 -64 L1987 -44Z" fill="#964d00"/><path d="M1199.3 391.5 L1981 -55 L1992 -35Z" fill="#964b00"/><path d="M1199.3 391.5 L1986 -46 L1997 -25Z" fill="#964900"/><path d="M1199.3 391.5 L1991 -37 L2002 -16Z" fill="#964700"/><path d="M1199.3 391.5 L1996 -27 L2006 -7Z" fill="#964500"/><path d="M1199.3 391.5 L2001 -18 L2011 3Z" fill="#964300"/><path d="M1199.3 391.5 L2005 -9 L2015 12Z" fill="#964100"/><path d="M1199.3 391.5 L2010 1 L2020 22Z" fill="#963f00"/><path d="M1199.3 391.5 L2015 10 L2024 31Z" fill="#963d00"/><path d="M1199.3 391.5 L2019 20 L2028 41Z" fill="#963b00"/><path d="M1199.3 391.5 L2023 29 L2032 50Z" fill="#963a00"/><path d="M1199.3 391.5 L2027 39 L2036 60Z" fill="#963800"/><path d="M1199.3 391.5 L2031 49 L2040 70Z" fill="#963600"/><path d="M1199.3 391.5 L2035 58 L2044 80Z" fill="#963400"/><path d="M1199.3 391.5 L2039 68 L2047 90Z" fill="#963200"/><path d="M1199.3 391.5 L2043 78 L2051 99Z" fill="#963100"/><path d="M1199.3 391.5 L2046 88 L2054 109Z" fill="#962f00"/><path d="M1199.3 391.5 L2050 97 L2057 119Z" fill="#962d00"/><path d="M1199.3 391.5 L2053 107 L2060 129Z" fill="#962b00"/><path d="M1199.3 391.5 L2057 117 L2063 139Z" fill="#962a00"/><path d="M1199.3 391.5 L2060 127 L2066 149Z" fill="#962800"/><path d="M1199.3 391.5 L2063 137 L2069 160Z" fill="#962600"/><path d="M1199.3 391.5 L2066 147 L2072 170Z" fill="#962500"/><path d="M1199.3 391.5 L2068 158 L2074 180Z" fill="#962300"/><path d="M1199.3 391.5 L2071 168 L2076 190Z" fill="#962100"/><path d="M1199.3 391.5 L2074 178 L2079 200Z" fill="#962000"/><path d="M1199.3 391.5 L2076 188 L2081 211Z" fill="#961e00"/><path d="M1199.3 391.5 L2078 198 L2083 221Z" fill="#961c00"/><path d="M1199.3 391.5 L2080 208 L2085 231Z" fill="#961b00"/><path d="M1199.3 391.5 L2083 219 L2087 241Z" fill="#961900"/><path d="M1199.3 391.5 L2084 229 L2088 252Z" fill="#961700"/><path d="M1199.3 391.5 L2086 239 L2090 262Z" fill="#961600"/><path d="M1199.3 391.5 L2088 250 L2091 272Z" fill="#961400"/><path d="M1199.3 391.5 L2090 260 L2093 283Z" fill="#961200"/><path d="M1199.3 391.5 L2091 270 L2094 293Z" fill="#961100"/><path d="M1199.3 391.5 L2092 281 L2095 304Z" fill="#960f00"/><path d="M1199.3 391.5 L2094 291 L2096 314Z" fill="#960e00"/><path d="M1199.3 391.5 L2095 302 L2097 325Z" fill="#960c00"/><path d="M1199.3 391.5 L2096 312 L2097 335Z" fill="#960a00"/><path d="M1199.3 391.5 L2097 322 L2098 345Z" fill="#960900"/><path d="M1199.3 391.5 L2097 333 L2099 356Z" fill="#960700"/><path d="M1199.3 391.5 L2098 343 L2099 366Z" fill="#960500"/><path d="M1199.3 391.5 L2098 354 L2099 377Z" fill="#960400"/><path d="M1199.3 391.5 L2099 364 L2099 387Z" fill="#960200"/><path d="M1199.3 391.5 L2099 375 L2099 398Z" fill="#960100"/></g>
<g clip-path="url(#triclip)"><path d="M1199.27 391.47 L1187.39 250.11 L1196.59 255.22Z" fill="url(#w0)"/><path d="M1199.27 391.47 L1191.57 252.43 L1200.77 257.54Z" fill="url(#w1)"/><path d="M1199.27 391.47 L1195.75 254.75 L1204.96 259.87Z" fill="url(#w2)"/><path d="M1199.27 391.47 L1199.94 257.08 L1209.14 262.19Z" fill="url(#w3)"/><path d="M1199.27 391.47 L1204.12 259.40 L1213.32 264.52Z" fill="url(#w4)"/><path d="M1199.27 391.47 L1208.30 261.73 L1217.50 266.84Z" fill="url(#w5)"/><path d="M1199.27 391.47 L1212.48 264.05 L1221.68 269.16Z" fill="url(#w6)"/><path d="M1199.27 391.47 L1216.66 266.38 L1225.87 271.49Z" fill="url(#w7)"/><path d="M1199.27 391.47 L1220.85 268.70 L1230.05 273.81Z" fill="url(#w8)"/><path d="M1199.27 391.47 L1225.03 271.02 L1234.23 276.14Z" fill="url(#w9)"/><path d="M1199.27 391.47 L1229.21 273.35 L1238.41 278.46Z" fill="url(#w10)"/><path d="M1199.27 391.47 L1233.39 275.67 L1242.59 280.79Z" fill="url(#w11)"/><path d="M1199.27 391.47 L1237.57 278.00 L1246.78 283.11Z" fill="url(#w12)"/><path d="M1199.27 391.47 L1241.76 280.32 L1250.96 285.43Z" fill="url(#w13)"/><path d="M1199.27 391.47 L1245.94 282.64 L1255.14 287.76Z" fill="url(#w14)"/><path d="M1199.27 391.47 L1250.12 284.97 L1259.32 290.08Z" fill="url(#w15)"/><path d="M1199.27 391.47 L1254.30 287.29 L1263.50 292.41Z" fill="url(#w16)"/><path d="M1199.27 391.47 L1258.48 289.62 L1267.69 294.73Z" fill="url(#w17)"/><path d="M1199.27 391.47 L1262.67 291.94 L1271.87 297.06Z" fill="url(#w18)"/><path d="M1199.27 391.47 L1266.85 294.27 L1276.05 299.38Z" fill="url(#w19)"/><path d="M1199.27 391.47 L1271.03 296.59 L1280.23 301.70Z" fill="url(#w20)"/><path d="M1199.27 391.47 L1275.21 298.91 L1284.41 304.03Z" fill="url(#w21)"/><path d="M1199.27 391.47 L1279.39 301.24 L1288.60 306.35Z" fill="url(#w22)"/><path d="M1199.27 391.47 L1283.58 303.56 L1292.78 308.68Z" fill="url(#w23)"/><path d="M1199.27 391.47 L1287.76 305.89 L1296.96 311.00Z" fill="url(#w24)"/><path d="M1199.27 391.47 L1291.94 308.21 L1301.14 313.33Z" fill="url(#w25)"/><path d="M1199.27 391.47 L1296.12 310.54 L1305.32 315.65Z" fill="url(#w26)"/><path d="M1199.27 391.47 L1300.30 312.86 L1309.51 317.97Z" fill="url(#w27)"/><path d="M1199.27 391.47 L1304.49 315.18 L1313.69 320.30Z" fill="url(#w28)"/><path d="M1199.27 391.47 L1308.67 317.51 L1317.87 322.62Z" fill="url(#w29)"/><path d="M1199.27 391.47 L1312.85 319.83 L1322.05 324.95Z" fill="url(#w30)"/><path d="M1199.27 391.47 L1317.03 322.16 L1326.23 327.27Z" fill="url(#w31)"/><path d="M1199.27 391.47 L1321.21 324.48 L1330.42 329.59Z" fill="url(#w32)"/><path d="M1199.27 391.47 L1325.40 326.81 L1334.60 331.92Z" fill="url(#w33)"/><path d="M1199.27 391.47 L1329.58 329.13 L1338.78 334.24Z" fill="url(#w34)"/><path d="M1199.27 391.47 L1333.76 331.45 L1342.96 336.57Z" fill="url(#w35)"/><path d="M1199.27 391.47 L1337.94 333.78 L1347.14 338.89Z" fill="url(#w36)"/><path d="M1199.27 391.47 L1342.12 336.10 L1351.33 341.22Z" fill="url(#w37)"/><path d="M1199.27 391.47 L1346.31 338.43 L1355.51 343.54Z" fill="url(#w38)"/><path d="M1199.27 391.47 L1350.49 340.75 L1359.69 345.86Z" fill="url(#w39)"/><path d="M1199.27 391.47 L1354.67 343.08 L1363.87 348.19Z" fill="url(#w40)"/><path d="M1199.27 391.47 L1358.85 345.40 L1368.05 350.51Z" fill="url(#w41)"/><path d="M1199.27 391.47 L1363.03 347.72 L1372.24 352.84Z" fill="url(#w42)"/><path d="M1199.27 391.47 L1367.22 350.05 L1376.42 355.16Z" fill="url(#w43)"/><path d="M1199.27 391.47 L1371.40 352.37 L1380.60 357.49Z" fill="url(#w44)"/><path d="M1199.27 391.47 L1375.58 354.70 L1384.78 359.81Z" fill="url(#w45)"/><path d="M1199.27 391.47 L1379.76 357.02 L1388.96 362.13Z" fill="url(#w46)"/><path d="M1199.27 391.47 L1383.94 359.35 L1393.15 364.46Z" fill="url(#w47)"/><path d="M1199.27 391.47 L1388.13 361.67 L1397.33 366.78Z" fill="url(#w48)"/><path d="M1199.27 391.47 L1392.31 363.99 L1401.51 369.11Z" fill="url(#w49)"/><path d="M1199.27 391.47 L1396.49 366.32 L1405.69 371.43Z" fill="url(#w50)"/><path d="M1199.27 391.47 L1400.67 368.64 L1409.87 373.76Z" fill="url(#w51)"/><path d="M1199.27 391.47 L1404.85 370.97 L1414.06 376.08Z" fill="url(#w52)"/><path d="M1199.27 391.47 L1409.04 373.29 L1418.24 378.40Z" fill="url(#w53)"/><path d="M1199.27 391.47 L1413.22 375.61 L1422.42 380.73Z" fill="url(#w54)"/><path d="M1199.27 391.47 L1417.40 377.94 L1426.60 383.05Z" fill="url(#w55)"/><path d="M1199.27 391.47 L1421.58 380.26 L1430.78 385.38Z" fill="url(#w56)"/><path d="M1199.27 391.47 L1425.76 382.59 L1434.97 387.70Z" fill="url(#w57)"/><path d="M1199.27 391.47 L1429.95 384.91 L1439.15 390.03Z" fill="url(#w58)"/><path d="M1199.27 391.47 L1434.13 387.24 L1443.33 392.35Z" fill="url(#w59)"/><path d="M1199.27 391.47 L1444.44 389.56 L1431.18 394.67Z" fill="url(#w60)"/><path d="M1199.27 391.47 L1438.41 391.88 L1425.15 397.00Z" fill="url(#w61)"/><path d="M1199.27 391.47 L1432.38 394.21 L1419.12 399.32Z" fill="url(#w62)"/><path d="M1199.27 391.47 L1426.36 396.53 L1413.10 401.65Z" fill="url(#w63)"/><path d="M1199.27 391.47 L1420.33 398.86 L1407.07 403.97Z" fill="url(#w64)"/><path d="M1199.27 391.47 L1414.30 401.18 L1401.04 406.30Z" fill="url(#w65)"/><path d="M1199.27 391.47 L1408.27 403.51 L1395.01 408.62Z" fill="url(#w66)"/><path d="M1199.27 391.47 L1402.25 405.83 L1388.99 410.94Z" fill="url(#w67)"/><path d="M1199.27 391.47 L1396.22 408.15 L1382.96 413.27Z" fill="url(#w68)"/><path d="M1199.27 391.47 L1390.19 410.48 L1376.93 415.59Z" fill="url(#w69)"/><path d="M1199.27 391.47 L1384.17 412.80 L1370.91 417.92Z" fill="url(#w70)"/><path d="M1199.27 391.47 L1378.14 415.13 L1364.88 420.24Z" fill="url(#w71)"/><path d="M1199.27 391.47 L1372.11 417.45 L1358.85 422.56Z" fill="url(#w72)"/><path d="M1199.27 391.47 L1366.09 419.78 L1352.83 424.89Z" fill="url(#w73)"/><path d="M1199.27 391.47 L1360.06 422.10 L1346.80 427.21Z" fill="url(#w74)"/><path d="M1199.27 391.47 L1354.03 424.42 L1340.77 429.54Z" fill="url(#w75)"/><path d="M1199.27 391.47 L1348.00 426.75 L1334.74 431.86Z" fill="url(#w76)"/><path d="M1199.27 391.47 L1341.98 429.07 L1328.72 434.19Z" fill="url(#w77)"/><path d="M1199.27 391.47 L1335.95 431.40 L1322.69 436.51Z" fill="url(#w78)"/><path d="M1199.27 391.47 L1329.92 433.72 L1316.66 438.83Z" fill="url(#w79)"/><path d="M1199.27 391.47 L1323.90 436.05 L1310.64 441.16Z" fill="url(#w80)"/><path d="M1199.27 391.47 L1317.87 438.37 L1304.61 443.48Z" fill="url(#w81)"/><path d="M1199.27 391.47 L1311.84 440.69 L1298.58 445.81Z" fill="url(#w82)"/><path d="M1199.27 391.47 L1305.82 443.02 L1292.56 448.13Z" fill="url(#w83)"/><path d="M1199.27 391.47 L1299.79 445.34 L1286.53 450.46Z" fill="url(#w84)"/><path d="M1199.27 391.47 L1293.76 447.67 L1280.50 452.78Z" fill="url(#w85)"/><path d="M1199.27 391.47 L1287.73 449.99 L1274.47 455.10Z" fill="url(#w86)"/><path d="M1199.27 391.47 L1281.71 452.32 L1268.45 457.43Z" fill="url(#w87)"/><path d="M1199.27 391.47 L1275.68 454.64 L1262.42 459.75Z" fill="url(#w88)"/><path d="M1199.27 391.47 L1269.65 456.96 L1256.39 462.08Z" fill="url(#w89)"/><path d="M1199.27 391.47 L1263.63 459.29 L1250.37 464.40Z" fill="url(#w90)"/><path d="M1199.27 391.47 L1257.60 461.61 L1244.34 466.73Z" fill="url(#w91)"/><path d="M1199.27 391.47 L1251.57 463.94 L1238.31 469.05Z" fill="url(#w92)"/><path d="M1199.27 391.47 L1245.55 466.26 L1232.29 471.37Z" fill="url(#w93)"/><path d="M1199.27 391.47 L1239.52 468.58 L1226.26 473.70Z" fill="url(#w94)"/><path d="M1199.27 391.47 L1233.49 470.91 L1220.23 476.02Z" fill="url(#w95)"/><path d="M1199.27 391.47 L1227.46 473.23 L1214.20 478.35Z" fill="url(#w96)"/><path d="M1199.27 391.47 L1221.44 475.56 L1208.18 480.67Z" fill="url(#w97)"/><path d="M1199.27 391.47 L1215.41 477.88 L1202.15 483.00Z" fill="url(#w98)"/><path d="M1199.27 391.47 L1209.38 480.21 L1196.12 485.32Z" fill="url(#w99)"/><path d="M1199.27 391.47 L1203.36 482.53 L1190.10 487.64Z" fill="url(#w100)"/><path d="M1199.27 391.47 L1197.33 484.85 L1184.07 489.97Z" fill="url(#w101)"/><path d="M1199.27 391.47 L1191.30 487.18 L1178.04 492.29Z" fill="url(#w102)"/><path d="M1199.27 391.47 L1185.28 489.50 L1172.02 494.62Z" fill="url(#w103)"/><path d="M1199.27 391.47 L1179.25 491.83 L1165.99 496.94Z" fill="url(#w104)"/><path d="M1199.27 391.47 L1173.22 494.15 L1159.96 499.27Z" fill="url(#w105)"/><path d="M1199.27 391.47 L1167.19 496.48 L1153.93 501.59Z" fill="url(#w106)"/><path d="M1199.27 391.47 L1161.17 498.80 L1147.91 503.91Z" fill="url(#w107)"/><path d="M1199.27 391.47 L1155.14 501.12 L1141.88 506.24Z" fill="url(#w108)"/><path d="M1199.27 391.47 L1149.11 503.45 L1135.85 508.56Z" fill="url(#w109)"/><path d="M1199.27 391.47 L1143.09 505.77 L1129.83 510.89Z" fill="url(#w110)"/><path d="M1199.27 391.47 L1137.06 508.10 L1123.80 513.21Z" fill="url(#w111)"/><path d="M1199.27 391.47 L1131.03 510.42 L1117.77 515.53Z" fill="url(#w112)"/><path d="M1199.27 391.47 L1125.01 512.75 L1111.75 517.86Z" fill="url(#w113)"/><path d="M1199.27 391.47 L1118.98 515.07 L1105.72 520.18Z" fill="url(#w114)"/><path d="M1199.27 391.47 L1112.95 517.39 L1099.69 522.51Z" fill="url(#w115)"/><path d="M1199.27 391.47 L1106.92 519.72 L1093.66 524.83Z" fill="url(#w116)"/><path d="M1199.27 391.47 L1100.90 522.04 L1087.64 527.16Z" fill="url(#w117)"/><path d="M1199.27 391.47 L1094.87 524.37 L1081.61 529.48Z" fill="url(#w118)"/><path d="M1199.27 391.47 L1088.84 526.69 L1075.58 531.80Z" fill="url(#w119)"/><path d="M1199.27 391.47 L1078.09 533.20 L1082.15 522.97Z" fill="url(#w120)"/><path d="M1199.27 391.47 L1079.94 528.55 L1084.00 518.32Z" fill="url(#w121)"/><path d="M1199.27 391.47 L1081.78 523.90 L1085.84 513.68Z" fill="url(#w122)"/><path d="M1199.27 391.47 L1083.63 519.25 L1087.69 509.03Z" fill="url(#w123)"/><path d="M1199.27 391.47 L1085.47 514.61 L1089.53 504.38Z" fill="url(#w124)"/><path d="M1199.27 391.47 L1087.32 509.96 L1091.38 499.73Z" fill="url(#w125)"/><path d="M1199.27 391.47 L1089.16 505.31 L1093.22 495.08Z" fill="url(#w126)"/><path d="M1199.27 391.47 L1091.01 500.66 L1095.07 490.43Z" fill="url(#w127)"/><path d="M1199.27 391.47 L1092.85 496.01 L1096.91 485.78Z" fill="url(#w128)"/><path d="M1199.27 391.47 L1094.70 491.36 L1098.76 481.14Z" fill="url(#w129)"/><path d="M1199.27 391.47 L1096.54 486.71 L1100.60 476.49Z" fill="url(#w130)"/><path d="M1199.27 391.47 L1098.39 482.07 L1102.45 471.84Z" fill="url(#w131)"/><path d="M1199.27 391.47 L1100.23 477.42 L1104.29 467.19Z" fill="url(#w132)"/><path d="M1199.27 391.47 L1102.08 472.77 L1106.14 462.54Z" fill="url(#w133)"/><path d="M1199.27 391.47 L1103.92 468.12 L1107.98 457.89Z" fill="url(#w134)"/><path d="M1199.27 391.47 L1105.77 463.47 L1109.83 453.24Z" fill="url(#w135)"/><path d="M1199.27 391.47 L1107.61 458.82 L1111.67 448.60Z" fill="url(#w136)"/><path d="M1199.27 391.47 L1109.46 454.17 L1113.52 443.95Z" fill="url(#w137)"/><path d="M1199.27 391.47 L1111.30 449.53 L1115.36 439.30Z" fill="url(#w138)"/><path d="M1199.27 391.47 L1113.15 444.88 L1117.21 434.65Z" fill="url(#w139)"/><path d="M1199.27 391.47 L1114.99 440.23 L1119.05 430.00Z" fill="url(#w140)"/><path d="M1199.27 391.47 L1116.84 435.58 L1120.90 425.35Z" fill="url(#w141)"/><path d="M1199.27 391.47 L1118.68 430.93 L1122.74 420.71Z" fill="url(#w142)"/><path d="M1199.27 391.47 L1120.53 426.28 L1124.59 416.06Z" fill="url(#w143)"/><path d="M1199.27 391.47 L1122.37 421.64 L1126.43 411.41Z" fill="url(#w144)"/><path d="M1199.27 391.47 L1124.22 416.99 L1128.28 406.76Z" fill="url(#w145)"/><path d="M1199.27 391.47 L1126.06 412.34 L1130.12 402.11Z" fill="url(#w146)"/><path d="M1199.27 391.47 L1127.91 407.69 L1131.97 397.46Z" fill="url(#w147)"/><path d="M1199.27 391.47 L1129.75 403.04 L1133.81 392.81Z" fill="url(#w148)"/><path d="M1199.27 391.47 L1131.60 398.39 L1135.66 388.17Z" fill="url(#w149)"/><path d="M1199.27 391.47 L1133.44 393.74 L1137.50 383.52Z" fill="url(#w150)"/><path d="M1199.27 391.47 L1135.29 389.10 L1139.35 378.87Z" fill="url(#w151)"/><path d="M1199.27 391.47 L1137.13 384.45 L1141.19 374.22Z" fill="url(#w152)"/><path d="M1199.27 391.47 L1138.98 379.80 L1143.04 369.57Z" fill="url(#w153)"/><path d="M1199.27 391.47 L1140.82 375.15 L1144.88 364.92Z" fill="url(#w154)"/><path d="M1199.27 391.47 L1142.67 370.50 L1146.73 360.27Z" fill="url(#w155)"/><path d="M1199.27 391.47 L1144.51 365.85 L1148.57 355.63Z" fill="url(#w156)"/><path d="M1199.27 391.47 L1146.36 361.20 L1150.42 350.98Z" fill="url(#w157)"/><path d="M1199.27 391.47 L1148.20 356.56 L1152.26 346.33Z" fill="url(#w158)"/><path d="M1199.27 391.47 L1150.05 351.91 L1154.11 341.68Z" fill="url(#w159)"/><path d="M1199.27 391.47 L1151.89 347.26 L1155.95 337.03Z" fill="url(#w160)"/><path d="M1199.27 391.47 L1153.74 342.61 L1157.80 332.38Z" fill="url(#w161)"/><path d="M1199.27 391.47 L1155.58 337.96 L1159.64 327.74Z" fill="url(#w162)"/><path d="M1199.27 391.47 L1157.43 333.31 L1161.49 323.09Z" fill="url(#w163)"/><path d="M1199.27 391.47 L1159.27 328.67 L1163.33 318.44Z" fill="url(#w164)"/><path d="M1199.27 391.47 L1161.12 324.02 L1165.18 313.79Z" fill="url(#w165)"/><path d="M1199.27 391.47 L1162.96 319.37 L1167.02 309.14Z" fill="url(#w166)"/><path d="M1199.27 391.47 L1164.81 314.72 L1168.87 304.49Z" fill="url(#w167)"/><path d="M1199.27 391.47 L1166.65 310.07 L1170.71 299.84Z" fill="url(#w168)"/><path d="M1199.27 391.47 L1168.50 305.42 L1172.56 295.20Z" fill="url(#w169)"/><path d="M1199.27 391.47 L1170.34 300.77 L1174.40 290.55Z" fill="url(#w170)"/><path d="M1199.27 391.47 L1172.19 296.13 L1176.25 285.90Z" fill="url(#w171)"/><path d="M1199.27 391.47 L1174.03 291.48 L1178.09 281.25Z" fill="url(#w172)"/><path d="M1199.27 391.47 L1175.88 286.83 L1179.94 276.60Z" fill="url(#w173)"/><path d="M1199.27 391.47 L1177.72 282.18 L1181.78 271.95Z" fill="url(#w174)"/><path d="M1199.27 391.47 L1179.57 277.53 L1183.63 267.30Z" fill="url(#w175)"/><path d="M1199.27 391.47 L1181.41 272.88 L1185.47 262.66Z" fill="url(#w176)"/><path d="M1199.27 391.47 L1183.26 268.23 L1187.32 258.01Z" fill="url(#w177)"/><path d="M1199.27 391.47 L1185.10 263.59 L1189.16 253.36Z" fill="url(#w178)"/><path d="M1199.27 391.47 L1186.95 258.94 L1191.01 248.71Z" fill="url(#w179)"/></g>
<circle cx="1199.3" cy="391.5" r="14" fill="url(#wglow)"/>
</g>
<g><rect x="1182.6" y="244.6" width="12.6" height="12.6" fill="none" stroke="#ffffff" stroke-width="1.5"/><rect x="1186.7" y="301.0" width="12.6" height="12.6" fill="none" stroke="#ffffff" stroke-width="1.5"/><rect x="1238.6" y="299.5" width="12.6" height="12.6" fill="none" stroke="#ffffff" stroke-width="1.5"/><rect x="1271.6" y="293.5" width="12.6" height="12.6" fill="none" stroke="#ffffff" stroke-width="1.5"/><rect x="1292.0" y="309.0" width="12.6" height="12.6" fill="none" stroke="#ffffff" stroke-width="1.5"/><rect x="1311.6" y="327.1" width="12.6" height="12.6" fill="none" stroke="#ffffff" stroke-width="1.5"/><rect x="1340.6" y="344.0" width="12.6" height="12.6" fill="none" stroke="#ffffff" stroke-width="1.5"/><rect x="1212.5" y="333.1" width="12.6" height="12.6" fill="none" stroke="#ffffff" stroke-width="1.5"/><rect x="1155.0" y="368.2" width="12.6" height="12.6" fill="none" stroke="#ffffff" stroke-width="1.5"/><rect x="1241.7" y="369.8" width="12.6" height="12.6" fill="none" stroke="#ffffff" stroke-width="1.5"/><rect x="1257.2" y="365.3" width="12.6" height="12.6" fill="none" stroke="#ffffff" stroke-width="1.5"/><rect x="1127.5" y="385.1" width="12.6" height="12.6" fill="none" stroke="#ffffff" stroke-width="1.5"/><rect x="1302.7" y="393.0" width="12.6" height="12.6" fill="none" stroke="#ffffff" stroke-width="1.5"/><rect x="1358.5" y="390.9" width="12.6" height="12.6" fill="none" stroke="#ffffff" stroke-width="1.5"/><rect x="1434.7" y="383.7" width="12.6" height="12.6" fill="none" stroke="#ffffff" stroke-width="1.5"/><rect x="1114.7" y="415.1" width="12.6" height="12.6" fill="none" stroke="#ffffff" stroke-width="1.5"/><rect x="1145.9" y="417.0" width="12.6" height="12.6" fill="none" stroke="#ffffff" stroke-width="1.5"/><rect x="1159.2" y="423.2" width="12.6" height="12.6" fill="none" stroke="#ffffff" stroke-width="1.5"/><rect x="1237.6" y="427.1" width="12.6" height="12.6" fill="none" stroke="#ffffff" stroke-width="1.5"/><rect x="1176.1" y="440.2" width="12.6" height="12.6" fill="none" stroke="#ffffff" stroke-width="1.5"/><rect x="1121.5" y="455.0" width="12.6" height="12.6" fill="none" stroke="#ffffff" stroke-width="1.5"/><rect x="1198.1" y="474.7" width="12.6" height="12.6" fill="none" stroke="#ffffff" stroke-width="1.5"/><rect x="1103.1" y="482.1" width="12.6" height="12.6" fill="none" stroke="#ffffff" stroke-width="1.5"/><rect x="1071.7" y="522.5" width="12.6" height="12.6" fill="none" stroke="#ffffff" stroke-width="1.5"/><ellipse cx="1205.9" cy="241.1" rx="4.4" ry="3.9" fill="#00ff10" stroke="#000" stroke-width="1.1"/><ellipse cx="1203.3" cy="300.7" rx="4.4" ry="3.9" fill="#4f7f4f" stroke="#000" stroke-width="1.1"/><ellipse cx="1250.4" cy="296.4" rx="4.4" ry="3.9" fill="#9fb050" stroke="#000" stroke-width="1.1"/><ellipse cx="1277.2" cy="285.9" rx="4.4" ry="3.9" fill="#ffee00" stroke="#000" stroke-width="1.1"/><ellipse cx="1293.3" cy="300.9" rx="4.4" ry="3.9" fill="#e8c040" stroke="#000" stroke-width="1.1"/><ellipse cx="1310.3" cy="320.3" rx="4.4" ry="3.9" fill="#e0a848" stroke="#000" stroke-width="1.1"/><ellipse cx="1336.4" cy="338.3" rx="4.4" ry="3.9" fill="#d08040" stroke="#000" stroke-width="1.1"/><ellipse cx="1222.5" cy="334.9" rx="4.4" ry="3.9" fill="#505f40" stroke="#000" stroke-width="1.1"/><ellipse cx="1170.4" cy="372.8" rx="4.4" ry="3.9" fill="#60b0a0" stroke="#000" stroke-width="1.1"/><ellipse cx="1241.2" cy="374.3" rx="4.4" ry="3.9" fill="#c09888" stroke="#000" stroke-width="1.1"/><ellipse cx="1261.9" cy="369.4" rx="4.4" ry="3.9" fill="#6a5045" stroke="#000" stroke-width="1.1"/><ellipse cx="1143.4" cy="392.3" rx="4.4" ry="3.9" fill="#00f0ff" stroke="#000" stroke-width="1.1"/><ellipse cx="1294.5" cy="399.3" rx="4.4" ry="3.9" fill="#c05868" stroke="#000" stroke-width="1.1"/><ellipse cx="1355.7" cy="395.9" rx="4.4" ry="3.9" fill="#a83848" stroke="#000" stroke-width="1.1"/><ellipse cx="1434.6" cy="386.4" rx="4.4" ry="3.9" fill="#ff0000" stroke="#000" stroke-width="1.1"/><ellipse cx="1131.4" cy="422.0" rx="4.4" ry="3.9" fill="#00808f" stroke="#000" stroke-width="1.1"/><ellipse cx="1157.2" cy="424.7" rx="4.4" ry="3.9" fill="#607c98" stroke="#000" stroke-width="1.1"/><ellipse cx="1169.2" cy="431.0" rx="4.4" ry="3.9" fill="#8080a8" stroke="#000" stroke-width="1.1"/><ellipse cx="1231.7" cy="438.0" rx="4.4" ry="3.9" fill="#c05890" stroke="#000" stroke-width="1.1"/><ellipse cx="1166.5" cy="456.8" rx="4.4" ry="3.9" fill="#604070" stroke="#000" stroke-width="1.1"/><ellipse cx="1131.4" cy="465.5" rx="4.4" ry="3.9" fill="#5060a0" stroke="#000" stroke-width="1.1"/><ellipse cx="1190.3" cy="492.8" rx="4.4" ry="3.9" fill="#ff00ff" stroke="#000" stroke-width="1.1"/><ellipse cx="1111.7" cy="496.5" rx="4.4" ry="3.9" fill="#404090" stroke="#000" stroke-width="1.1"/><ellipse cx="1083.4" cy="537.5" rx="4.4" ry="3.9" fill="#0000ff" stroke="#000" stroke-width="1.1"/></g>
<ellipse cx="1177.5" cy="417.5" rx="4.8" ry="4.4" fill="#000"/>
<rect x="1193" y="385.5" width="13" height="11.5" fill="none" stroke="#000" stroke-width="2"/>
<rect x="1194.5" y="387" width="10" height="8.5" fill="#f4e8f0" stroke="#fff" stroke-width="0.8"/>
<ellipse cx="1197.6" cy="390.4" rx="4.6" ry="3.6" fill="#fff" stroke="#000" stroke-width="1"/>
<ellipse cx="1199.7" cy="389.8" rx="4.0" ry="3.5" fill="#999" stroke="#000" stroke-width="1"/>
<rect x="1371" y="131" width="214" height="166.5" fill="#2b2b2b"/>
<g clip-path="url(#insclip)"><rect x="1373.3" y="133.0" width="210.0" height="162.39999999999998" fill="#232323"/><g transform="translate(-4529.33 -1369.05) scale(4.7 5.27)"><use href="#ciecol"/><g clip-path="url(#triclip)"><path d="M1199.27 391.47 L1234.46 276.27 L1236.67 277.49Z" fill="url(#iw180)"/><path d="M1199.27 391.47 L1235.47 276.83 L1237.68 278.05Z" fill="url(#iw181)"/><path d="M1199.27 391.47 L1236.47 277.38 L1238.68 278.61Z" fill="url(#iw182)"/><path d="M1199.27 391.47 L1237.47 277.94 L1239.68 279.17Z" fill="url(#iw183)"/><path d="M1199.27 391.47 L1238.48 278.50 L1240.69 279.73Z" fill="url(#iw184)"/><path d="M1199.27 391.47 L1239.48 279.06 L1241.69 280.28Z" fill="url(#iw185)"/><path d="M1199.27 391.47 L1240.49 279.61 L1242.69 280.84Z" fill="url(#iw186)"/><path d="M1199.27 391.47 L1241.49 280.17 L1243.70 281.40Z" fill="url(#iw187)"/><path d="M1199.27 391.47 L1242.49 280.73 L1244.70 281.96Z" fill="url(#iw188)"/><path d="M1199.27 391.47 L1243.50 281.29 L1245.70 282.51Z" fill="url(#iw189)"/><path d="M1199.27 391.47 L1244.50 281.85 L1246.71 283.07Z" fill="url(#iw190)"/><path d="M1199.27 391.47 L1245.50 282.40 L1247.71 283.63Z" fill="url(#iw191)"/><path d="M1199.27 391.47 L1246.51 282.96 L1248.72 284.19Z" fill="url(#iw192)"/><path d="M1199.27 391.47 L1247.51 283.52 L1249.72 284.75Z" fill="url(#iw193)"/><path d="M1199.27 391.47 L1248.51 284.08 L1250.72 285.30Z" fill="url(#iw194)"/><path d="M1199.27 391.47 L1249.52 284.63 L1251.73 285.86Z" fill="url(#iw195)"/><path d="M1199.27 391.47 L1250.52 285.19 L1252.73 286.42Z" fill="url(#iw196)"/><path d="M1199.27 391.47 L1251.53 285.75 L1253.73 286.98Z" fill="url(#iw197)"/><path d="M1199.27 391.47 L1252.53 286.31 L1254.74 287.54Z" fill="url(#iw198)"/><path d="M1199.27 391.47 L1253.53 286.87 L1255.74 288.09Z" fill="url(#iw199)"/><path d="M1199.27 391.47 L1254.54 287.42 L1256.75 288.65Z" fill="url(#iw200)"/><path d="M1199.27 391.47 L1255.54 287.98 L1257.75 289.21Z" fill="url(#iw201)"/><path d="M1199.27 391.47 L1256.54 288.54 L1258.75 289.77Z" fill="url(#iw202)"/><path d="M1199.27 391.47 L1257.55 289.10 L1259.76 290.32Z" fill="url(#iw203)"/><path d="M1199.27 391.47 L1258.55 289.65 L1260.76 290.88Z" fill="url(#iw204)"/><path d="M1199.27 391.47 L1259.56 290.21 L1261.76 291.44Z" fill="url(#iw205)"/><path d="M1199.27 391.47 L1260.56 290.77 L1262.77 292.00Z" fill="url(#iw206)"/><path d="M1199.27 391.47 L1261.56 291.33 L1263.77 292.56Z" fill="url(#iw207)"/><path d="M1199.27 391.47 L1262.57 291.89 L1264.77 293.11Z" fill="url(#iw208)"/><path d="M1199.27 391.47 L1263.57 292.44 L1265.78 293.67Z" fill="url(#iw209)"/><path d="M1199.27 391.47 L1264.57 293.00 L1266.78 294.23Z" fill="url(#iw210)"/><path d="M1199.27 391.47 L1265.58 293.56 L1267.79 294.79Z" fill="url(#iw211)"/><path d="M1199.27 391.47 L1266.58 294.12 L1268.79 295.34Z" fill="url(#iw212)"/><path d="M1199.27 391.47 L1267.58 294.68 L1269.79 295.90Z" fill="url(#iw213)"/><path d="M1199.27 391.47 L1268.59 295.23 L1270.80 296.46Z" fill="url(#iw214)"/><path d="M1199.27 391.47 L1269.59 295.79 L1271.80 297.02Z" fill="url(#iw215)"/><path d="M1199.27 391.47 L1270.60 296.35 L1272.80 297.58Z" fill="url(#iw216)"/><path d="M1199.27 391.47 L1271.60 296.91 L1273.81 298.13Z" fill="url(#iw217)"/><path d="M1199.27 391.47 L1272.60 297.46 L1274.81 298.69Z" fill="url(#iw218)"/><path d="M1199.27 391.47 L1273.61 298.02 L1275.82 299.25Z" fill="url(#iw219)"/><path d="M1199.27 391.47 L1274.61 298.58 L1276.82 299.81Z" fill="url(#iw220)"/><path d="M1199.27 391.47 L1275.61 299.14 L1277.82 300.37Z" fill="url(#iw221)"/><path d="M1199.27 391.47 L1276.62 299.70 L1278.83 300.92Z" fill="url(#iw222)"/><path d="M1199.27 391.47 L1277.62 300.25 L1279.83 301.48Z" fill="url(#iw223)"/><path d="M1199.27 391.47 L1278.63 300.81 L1280.83 302.04Z" fill="url(#iw224)"/><path d="M1199.27 391.47 L1279.63 301.37 L1281.84 302.60Z" fill="url(#iw225)"/><path d="M1199.27 391.47 L1280.63 301.93 L1282.84 303.15Z" fill="url(#iw226)"/><path d="M1199.27 391.47 L1281.64 302.48 L1283.84 303.71Z" fill="url(#iw227)"/><path d="M1199.27 391.47 L1282.64 303.04 L1284.85 304.27Z" fill="url(#iw228)"/><path d="M1199.27 391.47 L1283.64 303.60 L1285.85 304.83Z" fill="url(#iw229)"/><path d="M1199.27 391.47 L1284.65 304.16 L1286.86 305.39Z" fill="url(#iw230)"/><path d="M1199.27 391.47 L1285.65 304.72 L1287.86 305.94Z" fill="url(#iw231)"/><path d="M1199.27 391.47 L1286.65 305.27 L1288.86 306.50Z" fill="url(#iw232)"/><path d="M1199.27 391.47 L1287.66 305.83 L1289.87 307.06Z" fill="url(#iw233)"/><path d="M1199.27 391.47 L1288.66 306.39 L1290.87 307.62Z" fill="url(#iw234)"/><path d="M1199.27 391.47 L1289.67 306.95 L1291.87 308.17Z" fill="url(#iw235)"/><path d="M1199.27 391.47 L1290.67 307.51 L1292.88 308.73Z" fill="url(#iw236)"/><path d="M1199.27 391.47 L1291.67 308.06 L1293.88 309.29Z" fill="url(#iw237)"/><path d="M1199.27 391.47 L1292.68 308.62 L1294.88 309.85Z" fill="url(#iw238)"/><path d="M1199.27 391.47 L1293.68 309.18 L1295.89 310.41Z" fill="url(#iw239)"/><path d="M1199.27 391.47 L1294.68 309.74 L1296.89 310.96Z" fill="url(#iw240)"/><path d="M1199.27 391.47 L1295.69 310.29 L1297.90 311.52Z" fill="url(#iw241)"/><path d="M1199.27 391.47 L1296.69 310.85 L1298.90 312.08Z" fill="url(#iw242)"/><path d="M1199.27 391.47 L1297.70 311.41 L1299.90 312.64Z" fill="url(#iw243)"/><path d="M1199.27 391.47 L1298.70 311.97 L1300.91 313.19Z" fill="url(#iw244)"/><path d="M1199.27 391.47 L1299.70 312.53 L1301.91 313.75Z" fill="url(#iw245)"/><path d="M1199.27 391.47 L1300.71 313.08 L1302.91 314.31Z" fill="url(#iw246)"/><path d="M1199.27 391.47 L1301.71 313.64 L1303.92 314.87Z" fill="url(#iw247)"/><path d="M1199.27 391.47 L1302.71 314.20 L1304.92 315.43Z" fill="url(#iw248)"/><path d="M1199.27 391.47 L1303.72 314.76 L1305.93 315.98Z" fill="url(#iw249)"/><path d="M1199.27 391.47 L1304.72 315.31 L1306.93 316.54Z" fill="url(#iw250)"/><path d="M1199.27 391.47 L1305.72 315.87 L1307.93 317.10Z" fill="url(#iw251)"/><path d="M1199.27 391.47 L1306.73 316.43 L1308.94 317.66Z" fill="url(#iw252)"/><path d="M1199.27 391.47 L1307.73 316.99 L1309.94 318.22Z" fill="url(#iw253)"/><path d="M1199.27 391.47 L1308.74 317.55 L1310.94 318.77Z" fill="url(#iw254)"/><path d="M1199.27 391.47 L1309.74 318.10 L1311.95 319.33Z" fill="url(#iw255)"/><path d="M1199.27 391.47 L1310.74 318.66 L1312.95 319.89Z" fill="url(#iw256)"/><path d="M1199.27 391.47 L1311.75 319.22 L1313.95 320.45Z" fill="url(#iw257)"/><path d="M1199.27 391.47 L1312.75 319.78 L1314.96 321.00Z" fill="url(#iw258)"/><path d="M1199.27 391.47 L1313.75 320.33 L1315.96 321.56Z" fill="url(#iw259)"/><path d="M1199.27 391.47 L1314.76 320.89 L1316.97 322.12Z" fill="url(#iw260)"/><path d="M1199.27 391.47 L1315.76 321.45 L1317.97 322.68Z" fill="url(#iw261)"/><path d="M1199.27 391.47 L1316.77 322.01 L1318.97 323.24Z" fill="url(#iw262)"/><path d="M1199.27 391.47 L1317.77 322.57 L1319.98 323.79Z" fill="url(#iw263)"/><path d="M1199.27 391.47 L1318.77 323.12 L1320.98 324.35Z" fill="url(#iw264)"/><path d="M1199.27 391.47 L1319.78 323.68 L1321.98 324.91Z" fill="url(#iw265)"/><path d="M1199.27 391.47 L1320.78 324.24 L1322.99 325.47Z" fill="url(#iw266)"/><path d="M1199.27 391.47 L1321.78 324.80 L1323.99 326.02Z" fill="url(#iw267)"/><path d="M1199.27 391.47 L1322.79 325.36 L1325.00 326.58Z" fill="url(#iw268)"/><path d="M1199.27 391.47 L1323.79 325.91 L1326.00 327.14Z" fill="url(#iw269)"/><path d="M1199.27 391.47 L1324.79 326.47 L1327.00 327.70Z" fill="url(#iw270)"/><path d="M1199.27 391.47 L1325.80 327.03 L1328.01 328.26Z" fill="url(#iw271)"/><path d="M1199.27 391.47 L1326.80 327.59 L1329.01 328.81Z" fill="url(#iw272)"/><path d="M1199.27 391.47 L1327.81 328.14 L1330.01 329.37Z" fill="url(#iw273)"/><path d="M1199.27 391.47 L1328.81 328.70 L1331.02 329.93Z" fill="url(#iw274)"/><path d="M1199.27 391.47 L1329.81 329.26 L1332.02 330.49Z" fill="url(#iw275)"/><path d="M1199.27 391.47 L1330.82 329.82 L1333.02 331.05Z" fill="url(#iw276)"/><path d="M1199.27 391.47 L1331.82 330.38 L1334.03 331.60Z" fill="url(#iw277)"/><path d="M1199.27 391.47 L1332.82 330.93 L1335.03 332.16Z" fill="url(#iw278)"/><path d="M1199.27 391.47 L1333.83 331.49 L1336.04 332.72Z" fill="url(#iw279)"/><path d="M1199.27 391.47 L1334.83 332.05 L1337.04 333.28Z" fill="url(#iw280)"/><path d="M1199.27 391.47 L1335.84 332.61 L1338.04 333.83Z" fill="url(#iw281)"/><path d="M1199.27 391.47 L1336.84 333.16 L1339.05 334.39Z" fill="url(#iw282)"/><path d="M1199.27 391.47 L1337.84 333.72 L1340.05 334.95Z" fill="url(#iw283)"/><path d="M1199.27 391.47 L1338.85 334.28 L1341.05 335.51Z" fill="url(#iw284)"/><path d="M1199.27 391.47 L1339.85 334.84 L1342.06 336.07Z" fill="url(#iw285)"/><path d="M1199.27 391.47 L1340.85 335.40 L1343.06 336.62Z" fill="url(#iw286)"/><path d="M1199.27 391.47 L1341.86 335.95 L1344.07 337.18Z" fill="url(#iw287)"/><path d="M1199.27 391.47 L1342.86 336.51 L1345.07 337.74Z" fill="url(#iw288)"/><path d="M1199.27 391.47 L1343.86 337.07 L1346.07 338.30Z" fill="url(#iw289)"/></g></g>
<rect x="1470.5" y="208.0" width="12.6" height="12.6" fill="none" stroke="#fff" stroke-width="1.5"/>
<rect x="1566.4" y="289.7" width="12.6" height="12.6" fill="none" stroke="#fff" stroke-width="1.5"/>
<ellipse cx="1476.8" cy="145.8" rx="4.4" ry="3.6" fill="#ffee00" stroke="#000" stroke-width="1.1"/>
<ellipse cx="1551.5" cy="225" rx="4.4" ry="3.6" fill="#e8c040" stroke="#000" stroke-width="1.1"/>
</g>
<rect x="1373.3" y="133.0" width="210.0" height="162.39999999999998" fill="none" stroke="#9a9a9a" stroke-width="1.2"/>
<rect x="1344.6" y="532.5" width="241.5" height="23.3" fill="#2e2e2e" />
<text x="1345.7" y="550.9" font-size="17.50" fill="#f0f0f0" textLength="201.0" lengthAdjust="spacingAndGlyphs" >RGB Triplet: 255, 255, 0</text>
<g clip-path="url(#tblclip)">
<rect x="318" y="605" width="1280" height="13" fill="#2c2c2c" />
<rect x="318" y="618" width="1280" height="12" fill="#161616" />
<rect x="308" y="605" width="10" height="25" fill="#000" />
<rect x="318" y="630.00" width="1280" height="23.01" fill="#474747" />
<rect x="308" y="630.00" width="10" height="23.01" fill="#262626" />
<rect x="318" y="652.71" width="1280" height="23.01" fill="#7f7f7f" />
<rect x="308" y="652.71" width="10" height="23.01" fill="#1e1e1e" />
<rect x="318" y="675.42" width="1280" height="23.01" fill="#474747" />
<rect x="308" y="675.42" width="10" height="23.01" fill="#262626" />
<rect x="318" y="698.13" width="1280" height="23.01" fill="#7f7f7f" />
<rect x="308" y="698.13" width="10" height="23.01" fill="#1e1e1e" />
<rect x="318" y="720.84" width="1280" height="23.01" fill="#474747" />
<rect x="308" y="720.84" width="10" height="23.01" fill="#262626" />
<rect x="318" y="743.55" width="1280" height="23.01" fill="#7f7f7f" />
<rect x="308" y="743.55" width="10" height="23.01" fill="#1e1e1e" />
<rect x="318" y="766.26" width="1280" height="23.01" fill="#474747" />
<rect x="308" y="766.26" width="10" height="23.01" fill="#262626" />
<rect x="849.3" y="653.9" width="60.1" height="20.9" fill="#f2f2f2" stroke="#c8c8c8" stroke-width="1"/>
<rect x="911.5" y="653.9" width="36.0" height="20.9" fill="#f2f2f2" stroke="#c8c8c8" stroke-width="1"/>
<rect x="949.5" y="653.9" width="62.0" height="20.9" fill="#f2f2f2" stroke="#c8c8c8" stroke-width="1"/>
<rect x="1013.5" y="653.9" width="67.0" height="20.9" fill="#f2f2f2" stroke="#c8c8c8" stroke-width="1"/>
<rect x="1082.3" y="653.9" width="31.8" height="20.9" fill="#f2f2f2" stroke="#c8c8c8" stroke-width="1"/>
<rect x="1116.5" y="653.9" width="62.0" height="20.9" fill="#f2f2f2" stroke="#c8c8c8" stroke-width="1"/>
<rect x="1180.5" y="653.9" width="66.7" height="20.9" fill="#f2f2f2" stroke="#c8c8c8" stroke-width="1"/>
<rect x="1249.3" y="653.9" width="30.7" height="20.9" fill="#f2f2f2" stroke="#c8c8c8" stroke-width="1"/>
<rect x="1281.8" y="653.9" width="30.5" height="20.9" fill="#f2f2f2" stroke="#c8c8c8" stroke-width="1"/>
<text x="394.4" y="622.6" font-size="12.20" fill="#f4f4f4" textLength="24.9" lengthAdjust="spacingAndGlyphs" stroke="#f4f4f4" stroke-width="0.25">White</text>
<text x="432.5" y="622.6" font-size="12.20" fill="#f4f4f4" textLength="34.7" lengthAdjust="spacingAndGlyphs" stroke="#f4f4f4" stroke-width="0.25">Gray 80</text>
<text x="471.9" y="622.6" font-size="12.20" fill="#f4f4f4" textLength="34.7" lengthAdjust="spacingAndGlyphs" stroke="#f4f4f4" stroke-width="0.25">Gray 65</text>
<text x="511.6" y="622.6" font-size="12.20" fill="#f4f4f4" textLength="34.7" lengthAdjust="spacingAndGlyphs" stroke="#f4f4f4" stroke-width="0.25">Gray 50</text>
<text x="551.6" y="622.6" font-size="12.20" fill="#f4f4f4" textLength="34.7" lengthAdjust="spacingAndGlyphs" stroke="#f4f4f4" stroke-width="0.25">Gray 35</text>
<text x="591.2" y="622.6" font-size="12.20" fill="#f4f4f4" textLength="23.9" lengthAdjust="spacingAndGlyphs" stroke="#f4f4f4" stroke-width="0.25">Black</text>
<text x="619.4" y="622.6" font-size="12.20" fill="#f4f4f4" textLength="42.3" lengthAdjust="spacingAndGlyphs" stroke="#f4f4f4" stroke-width="0.25">Dark Skin</text>
<text x="666.6" y="622.6" font-size="12.20" fill="#f4f4f4" textLength="42.9" lengthAdjust="spacingAndGlyphs" stroke="#f4f4f4" stroke-width="0.25">Light Skin</text>
<text x="714.7" y="622.6" font-size="12.20" fill="#f4f4f4" textLength="38.5" lengthAdjust="spacingAndGlyphs" stroke="#f4f4f4" stroke-width="0.25">Blue Sky</text>
<text x="757.2" y="622.6" font-size="12.20" fill="#f4f4f4" textLength="32.0" lengthAdjust="spacingAndGlyphs" stroke="#f4f4f4" stroke-width="0.25">Foliage</text>
<text x="794.4" y="622.6" font-size="12.20" fill="#f4f4f4" textLength="51.5" lengthAdjust="spacingAndGlyphs" stroke="#f4f4f4" stroke-width="0.25">Blue Flower</text>
<text x="852.2" y="622.6" font-size="12.20" fill="#f4f4f4" textLength="56.4" lengthAdjust="spacingAndGlyphs" stroke="#f4f4f4" stroke-width="0.25">Bluish Green</text>
<text x="913.9" y="622.6" font-size="12.20" fill="#f4f4f4" textLength="32.6" lengthAdjust="spacingAndGlyphs" stroke="#f4f4f4" stroke-width="0.25">Orange</text>
<text x="951.9" y="622.6" font-size="12.20" fill="#f4f4f4" textLength="57.5" lengthAdjust="spacingAndGlyphs" stroke="#f4f4f4" stroke-width="0.25">Purplish Blue</text>
<text x="1015.4" y="622.6" font-size="12.20" fill="#f4f4f4" textLength="61.9" lengthAdjust="spacingAndGlyphs" stroke="#f4f4f4" stroke-width="0.25">Moderate Red</text>
<text x="1084.5" y="622.6" font-size="12.20" fill="#f4f4f4" textLength="28.2" lengthAdjust="spacingAndGlyphs" stroke="#f4f4f4" stroke-width="0.25">Purple</text>
<text x="1118.6" y="622.6" font-size="12.20" fill="#f4f4f4" textLength="57.7" lengthAdjust="spacingAndGlyphs" stroke="#f4f4f4" stroke-width="0.25">Yellow Green</text>
<text x="1182.6" y="622.6" font-size="12.20" fill="#f4f4f4" textLength="62.9" lengthAdjust="spacingAndGlyphs" stroke="#f4f4f4" stroke-width="0.25">Orange Yellow</text>
<text x="1251.7" y="622.6" font-size="12.20" fill="#f4f4f4" textLength="19.5" lengthAdjust="spacingAndGlyphs" stroke="#f4f4f4" stroke-width="0.25">Blue</text>
<text x="1283.9" y="622.6" font-size="12.20" fill="#f4f4f4" textLength="27.1" lengthAdjust="spacingAndGlyphs" stroke="#f4f4f4" stroke-width="0.25">Green</text>
<text x="1316.5" y="622.6" font-size="12.20" fill="#f4f4f4" textLength="17.9" lengthAdjust="spacingAndGlyphs" stroke="#f4f4f4" stroke-width="0.25">Red</text>
<text x="1349.3" y="622.6" font-size="12.20" fill="#f4f4f4" textLength="27.9" lengthAdjust="spacingAndGlyphs" stroke="#f4f4f4" stroke-width="0.25">Yellow</text>
<text x="1387.3" y="622.6" font-size="12.20" fill="#f4f4f4" textLength="38.0" lengthAdjust="spacingAndGlyphs" stroke="#f4f4f4" stroke-width="0.25">Magenta</text>
<text x="1432.5" y="622.6" font-size="12.20" fill="#f4f4f4" textLength="22.8" lengthAdjust="spacingAndGlyphs" stroke="#f4f4f4" stroke-width="0.25">Cyan</text>
<text x="1465.3" y="622.6" font-size="12.20" fill="#f4f4f4" textLength="45.6" lengthAdjust="spacingAndGlyphs" stroke="#f4f4f4" stroke-width="0.25">100% Red</text>
<text x="1514.6" y="622.6" font-size="12.20" fill="#f4f4f4" textLength="54.8" lengthAdjust="spacingAndGlyphs" stroke="#f4f4f4" stroke-width="0.25">100% Green</text>
<text x="1574.5" y="622.6" font-size="12.20" fill="#f4f4f4" textLength="47.2" lengthAdjust="spacingAndGlyphs" stroke="#f4f4f4" stroke-width="0.25">100% Blue</text>
<text x="320.3" y="646.8" font-size="13.40" fill="#f4f4f4" textLength="37.8" lengthAdjust="spacingAndGlyphs" stroke="#f4f4f4" stroke-width="0.25">x: CIE31</text>
<text x="394.4" y="646.8" font-size="13.40" fill="#f4f4f4" textLength="19.7" lengthAdjust="spacingAndGlyphs" stroke="#f4f4f4" stroke-width="0.25">0.31</text>
<text x="432.5" y="646.8" font-size="13.40" fill="#f4f4f4" textLength="19.7" lengthAdjust="spacingAndGlyphs" stroke="#f4f4f4" stroke-width="0.25">0.31</text>
<text x="471.9" y="646.8" font-size="13.40" fill="#f4f4f4" textLength="19.7" lengthAdjust="spacingAndGlyphs" stroke="#f4f4f4" stroke-width="0.25">0.31</text>
<text x="511.6" y="646.8" font-size="13.40" fill="#f4f4f4" textLength="19.7" lengthAdjust="spacingAndGlyphs" stroke="#f4f4f4" stroke-width="0.25">0.31</text>
<text x="551.6" y="646.8" font-size="13.40" fill="#f4f4f4" textLength="19.7" lengthAdjust="spacingAndGlyphs" stroke="#f4f4f4" stroke-width="0.25">0.31</text>
<text x="591.2" y="646.8" font-size="13.40" fill="#f4f4f4" textLength="19.7" lengthAdjust="spacingAndGlyphs" stroke="#f4f4f4" stroke-width="0.25">0.28</text>
<text x="619.4" y="646.8" font-size="13.40" fill="#f4f4f4" textLength="19.7" lengthAdjust="spacingAndGlyphs" stroke="#f4f4f4" stroke-width="0.25">0.40</text>
<text x="666.6" y="646.8" font-size="13.40" fill="#f4f4f4" textLength="19.7" lengthAdjust="spacingAndGlyphs" stroke="#f4f4f4" stroke-width="0.25">0.37</text>
<text x="714.7" y="646.8" font-size="13.40" fill="#f4f4f4" textLength="19.7" lengthAdjust="spacingAndGlyphs" stroke="#f4f4f4" stroke-width="0.25">0.26</text>
<text x="757.2" y="646.8" font-size="13.40" fill="#f4f4f4" textLength="19.7" lengthAdjust="spacingAndGlyphs" stroke="#f4f4f4" stroke-width="0.25">0.35</text>
<text x="794.4" y="646.8" font-size="13.40" fill="#f4f4f4" textLength="19.7" lengthAdjust="spacingAndGlyphs" stroke="#f4f4f4" stroke-width="0.25">0.27</text>
<text x="852.2" y="646.8" font-size="13.40" fill="#f4f4f4" textLength="19.7" lengthAdjust="spacingAndGlyphs" stroke="#f4f4f4" stroke-width="0.25">0.27</text>
<text x="913.9" y="646.8" font-size="13.40" fill="#f4f4f4" textLength="19.7" lengthAdjust="spacingAndGlyphs" stroke="#f4f4f4" stroke-width="0.25">0.50</text>
<text x="951.9" y="646.8" font-size="13.40" fill="#f4f4f4" textLength="19.7" lengthAdjust="spacingAndGlyphs" stroke="#f4f4f4" stroke-width="0.25">0.22</text>
<text x="1015.4" y="646.8" font-size="13.40" fill="#f4f4f4" textLength="19.7" lengthAdjust="spacingAndGlyphs" stroke="#f4f4f4" stroke-width="0.25">0.44</text>
<text x="1084.5" y="646.8" font-size="13.40" fill="#f4f4f4" textLength="19.7" lengthAdjust="spacingAndGlyphs" stroke="#f4f4f4" stroke-width="0.25">0.27</text>
<text x="1118.6" y="646.8" font-size="13.40" fill="#f4f4f4" textLength="19.7" lengthAdjust="spacingAndGlyphs" stroke="#f4f4f4" stroke-width="0.25">0.38</text>
<text x="1182.6" y="646.8" font-size="13.40" fill="#f4f4f4" textLength="19.7" lengthAdjust="spacingAndGlyphs" stroke="#f4f4f4" stroke-width="0.25">0.46</text>
<text x="1251.7" y="646.8" font-size="13.40" fill="#f4f4f4" textLength="19.7" lengthAdjust="spacingAndGlyphs" stroke="#f4f4f4" stroke-width="0.25">0.20</text>
<text x="1283.9" y="646.8" font-size="13.40" fill="#f4f4f4" textLength="19.7" lengthAdjust="spacingAndGlyphs" stroke="#f4f4f4" stroke-width="0.25">0.32</text>
<text x="1316.5" y="646.8" font-size="13.40" fill="#f4f4f4" textLength="19.7" lengthAdjust="spacingAndGlyphs" stroke="#f4f4f4" stroke-width="0.25">0.53</text>
<text x="1349.3" y="646.8" font-size="13.40" fill="#f4f4f4" textLength="19.7" lengthAdjust="spacingAndGlyphs" stroke="#f4f4f4" stroke-width="0.25">0.44</text>
<text x="1387.3" y="646.8" font-size="13.40" fill="#f4f4f4" textLength="19.7" lengthAdjust="spacingAndGlyphs" stroke="#f4f4f4" stroke-width="0.25">0.36</text>
<text x="1432.5" y="646.8" font-size="13.40" fill="#f4f4f4" textLength="19.7" lengthAdjust="spacingAndGlyphs" stroke="#f4f4f4" stroke-width="0.25">0.22</text>
<text x="1465.3" y="646.8" font-size="13.40" fill="#f4f4f4" textLength="19.7" lengthAdjust="spacingAndGlyphs" stroke="#f4f4f4" stroke-width="0.25">0.63</text>
<text x="1514.6" y="646.8" font-size="13.40" fill="#f4f4f4" textLength="19.7" lengthAdjust="spacingAndGlyphs" stroke="#f4f4f4" stroke-width="0.25">0.32</text>
<text x="1574.5" y="646.8" font-size="13.40" fill="#f4f4f4" textLength="19.7" lengthAdjust="spacingAndGlyphs" stroke="#f4f4f4" stroke-width="0.25">0.16</text>
<text x="320.3" y="669.5" font-size="13.40" fill="#f4f4f4" textLength="37.8" lengthAdjust="spacingAndGlyphs" stroke="#f4f4f4" stroke-width="0.25">y: CIE31</text>
<text x="394.4" y="669.5" font-size="13.40" fill="#f4f4f4" textLength="19.7" lengthAdjust="spacingAndGlyphs" stroke="#f4f4f4" stroke-width="0.25">0.33</text>
<text x="432.5" y="669.5" font-size="13.40" fill="#f4f4f4" textLength="19.7" lengthAdjust="spacingAndGlyphs" stroke="#f4f4f4" stroke-width="0.25">0.33</text>
<text x="471.9" y="669.5" font-size="13.40" fill="#f4f4f4" textLength="19.7" lengthAdjust="spacingAndGlyphs" stroke="#f4f4f4" stroke-width="0.25">0.33</text>
<text x="511.6" y="669.5" font-size="13.40" fill="#f4f4f4" textLength="19.7" lengthAdjust="spacingAndGlyphs" stroke="#f4f4f4" stroke-width="0.25">0.33</text>
<text x="551.6" y="669.5" font-size="13.40" fill="#f4f4f4" textLength="19.7" lengthAdjust="spacingAndGlyphs" stroke="#f4f4f4" stroke-width="0.25">0.33</text>
<text x="591.2" y="669.5" font-size="13.40" fill="#f4f4f4" textLength="19.7" lengthAdjust="spacingAndGlyphs" stroke="#f4f4f4" stroke-width="0.25">0.28</text>
<text x="619.4" y="669.5" font-size="13.40" fill="#f4f4f4" textLength="19.7" lengthAdjust="spacingAndGlyphs" stroke="#f4f4f4" stroke-width="0.25">0.37</text>
<text x="666.6" y="669.5" font-size="13.40" fill="#f4f4f4" textLength="19.7" lengthAdjust="spacingAndGlyphs" stroke="#f4f4f4" stroke-width="0.25">0.36</text>
<text x="714.7" y="669.5" font-size="13.40" fill="#f4f4f4" textLength="19.7" lengthAdjust="spacingAndGlyphs" stroke="#f4f4f4" stroke-width="0.25">0.26</text>
<text x="757.2" y="669.5" font-size="13.40" fill="#f4f4f4" textLength="19.7" lengthAdjust="spacingAndGlyphs" stroke="#f4f4f4" stroke-width="0.25">0.44</text>
<text x="794.4" y="669.5" font-size="13.40" fill="#f4f4f4" textLength="19.7" lengthAdjust="spacingAndGlyphs" stroke="#f4f4f4" stroke-width="0.25">0.25</text>
<text x="852.2" y="669.5" font-size="13.40" fill="#2a2a2a" textLength="19.7" lengthAdjust="spacingAndGlyphs" stroke="#2a2a2a" stroke-width="0.25">0.36</text>
<text x="913.9" y="669.5" font-size="13.40" fill="#2a2a2a" textLength="19.7" lengthAdjust="spacingAndGlyphs" stroke="#2a2a2a" stroke-width="0.25">0.43</text>
<text x="951.9" y="669.5" font-size="13.40" fill="#2a2a2a" textLength="19.7" lengthAdjust="spacingAndGlyphs" stroke="#2a2a2a" stroke-width="0.25">0.18</text>
<text x="1015.4" y="669.5" font-size="13.40" fill="#2a2a2a" textLength="19.7" lengthAdjust="spacingAndGlyphs" stroke="#2a2a2a" stroke-width="0.25">0.31</text>
<text x="1084.5" y="669.5" font-size="13.40" fill="#2a2a2a" textLength="19.7" lengthAdjust="spacingAndGlyphs" stroke="#2a2a2a" stroke-width="0.25">0.20</text>
<text x="1118.6" y="669.5" font-size="13.40" fill="#2a2a2a" textLength="19.7" lengthAdjust="spacingAndGlyphs" stroke="#2a2a2a" stroke-width="0.25">0.51</text>
<text x="1182.6" y="669.5" font-size="13.40" fill="#2a2a2a" textLength="19.7" lengthAdjust="spacingAndGlyphs" stroke="#2a2a2a" stroke-width="0.25">0.47</text>
<text x="1251.7" y="669.5" font-size="13.40" fill="#2a2a2a" textLength="19.7" lengthAdjust="spacingAndGlyphs" stroke="#2a2a2a" stroke-width="0.25">0.12</text>
<text x="1283.9" y="669.5" font-size="13.40" fill="#2a2a2a" textLength="19.7" lengthAdjust="spacingAndGlyphs" stroke="#2a2a2a" stroke-width="0.25">0.50</text>
<text x="1316.5" y="669.5" font-size="13.40" fill="#f4f4f4" textLength="19.7" lengthAdjust="spacingAndGlyphs" stroke="#f4f4f4" stroke-width="0.25">0.32</text>
<text x="1349.3" y="669.5" font-size="13.40" fill="#f4f4f4" textLength="19.7" lengthAdjust="spacingAndGlyphs" stroke="#f4f4f4" stroke-width="0.25">0.50</text>
<text x="1387.3" y="669.5" font-size="13.40" fill="#f4f4f4" textLength="19.7" lengthAdjust="spacingAndGlyphs" stroke="#f4f4f4" stroke-width="0.25">0.24</text>
<text x="1432.5" y="669.5" font-size="13.40" fill="#f4f4f4" textLength="19.7" lengthAdjust="spacingAndGlyphs" stroke="#f4f4f4" stroke-width="0.25">0.27</text>
<text x="1465.3" y="669.5" font-size="13.40" fill="#f4f4f4" textLength="19.7" lengthAdjust="spacingAndGlyphs" stroke="#f4f4f4" stroke-width="0.25">0.34</text>
<text x="1514.6" y="669.5" font-size="13.40" fill="#f4f4f4" textLength="19.7" lengthAdjust="spacingAndGlyphs" stroke="#f4f4f4" stroke-width="0.25">0.62</text>
<text x="1574.5" y="669.5" font-size="13.40" fill="#f4f4f4" textLength="19.7" lengthAdjust="spacingAndGlyphs" stroke="#f4f4f4" stroke-width="0.25">0.04</text>
<text x="320.3" y="692.2" font-size="13.40" fill="#f4f4f4" textLength="6.6" lengthAdjust="spacingAndGlyphs" stroke="#f4f4f4" stroke-width="0.25">Y</text>
<text x="394.4" y="692.2" font-size="13.40" fill="#f4f4f4" textLength="30.9" lengthAdjust="spacingAndGlyphs" stroke="#f4f4f4" stroke-width="0.25">172.39</text>
<text x="432.5" y="692.2" font-size="13.40" fill="#f4f4f4" textLength="30.9" lengthAdjust="spacingAndGlyphs" stroke="#f4f4f4" stroke-width="0.25">134.79</text>
<text x="471.9" y="692.2" font-size="13.40" fill="#f4f4f4" textLength="30.2" lengthAdjust="spacingAndGlyphs" stroke="#f4f4f4" stroke-width="0.25">110.65</text>
<text x="511.6" y="692.2" font-size="13.40" fill="#f4f4f4" textLength="25.3" lengthAdjust="spacingAndGlyphs" stroke="#f4f4f4" stroke-width="0.25">87.73</text>
<text x="551.6" y="692.2" font-size="13.40" fill="#f4f4f4" textLength="25.3" lengthAdjust="spacingAndGlyphs" stroke="#f4f4f4" stroke-width="0.25">61.75</text>
<text x="591.2" y="692.2" font-size="13.40" fill="#f4f4f4" textLength="19.7" lengthAdjust="spacingAndGlyphs" stroke="#f4f4f4" stroke-width="0.25">0.24</text>
<text x="619.4" y="692.2" font-size="13.40" fill="#f4f4f4" textLength="25.3" lengthAdjust="spacingAndGlyphs" stroke="#f4f4f4" stroke-width="0.25">17.61</text>
<text x="666.6" y="692.2" font-size="13.40" fill="#f4f4f4" textLength="25.3" lengthAdjust="spacingAndGlyphs" stroke="#f4f4f4" stroke-width="0.25">62.18</text>
<text x="714.7" y="692.2" font-size="13.40" fill="#f4f4f4" textLength="25.3" lengthAdjust="spacingAndGlyphs" stroke="#f4f4f4" stroke-width="0.25">33.84</text>
<text x="757.2" y="692.2" font-size="13.40" fill="#f4f4f4" textLength="25.3" lengthAdjust="spacingAndGlyphs" stroke="#f4f4f4" stroke-width="0.25">23.69</text>
<text x="794.4" y="692.2" font-size="13.40" fill="#f4f4f4" textLength="25.3" lengthAdjust="spacingAndGlyphs" stroke="#f4f4f4" stroke-width="0.25">41.95</text>
<text x="852.2" y="692.2" font-size="13.40" fill="#f4f4f4" textLength="25.3" lengthAdjust="spacingAndGlyphs" stroke="#f4f4f4" stroke-width="0.25">76.24</text>
<text x="913.9" y="692.2" font-size="13.40" fill="#f4f4f4" textLength="25.3" lengthAdjust="spacingAndGlyphs" stroke="#f4f4f4" stroke-width="0.25">48.32</text>
<text x="951.9" y="692.2" font-size="13.40" fill="#f4f4f4" textLength="25.3" lengthAdjust="spacingAndGlyphs" stroke="#f4f4f4" stroke-width="0.25">20.27</text>
<text x="1015.4" y="692.2" font-size="13.40" fill="#f4f4f4" textLength="25.3" lengthAdjust="spacingAndGlyphs" stroke="#f4f4f4" stroke-width="0.25">31.20</text>
<text x="1084.5" y="692.2" font-size="13.40" fill="#f4f4f4" textLength="25.3" lengthAdjust="spacingAndGlyphs" stroke="#f4f4f4" stroke-width="0.25">10.23</text>
<text x="1118.6" y="692.2" font-size="13.40" fill="#f4f4f4" textLength="25.3" lengthAdjust="spacingAndGlyphs" stroke="#f4f4f4" stroke-width="0.25">77.69</text>
<text x="1182.6" y="692.2" font-size="13.40" fill="#f4f4f4" textLength="25.3" lengthAdjust="spacingAndGlyphs" stroke="#f4f4f4" stroke-width="0.25">73.92</text>
<text x="1251.7" y="692.2" font-size="13.40" fill="#f4f4f4" textLength="19.7" lengthAdjust="spacingAndGlyphs" stroke="#f4f4f4" stroke-width="0.25">9.79</text>
<text x="1283.9" y="692.2" font-size="13.40" fill="#f4f4f4" textLength="25.3" lengthAdjust="spacingAndGlyphs" stroke="#f4f4f4" stroke-width="0.25">42.34</text>
<text x="1316.5" y="692.2" font-size="13.40" fill="#f4f4f4" textLength="25.3" lengthAdjust="spacingAndGlyphs" stroke="#f4f4f4" stroke-width="0.25">18.51</text>
<text x="1349.3" y="692.2" font-size="13.40" fill="#f4f4f4" textLength="30.9" lengthAdjust="spacingAndGlyphs" stroke="#f4f4f4" stroke-width="0.25">102.48</text>
<text x="1387.3" y="692.2" font-size="13.40" fill="#f4f4f4" textLength="25.3" lengthAdjust="spacingAndGlyphs" stroke="#f4f4f4" stroke-width="0.25">31.45</text>
<text x="1432.5" y="692.2" font-size="13.40" fill="#f4f4f4" textLength="25.3" lengthAdjust="spacingAndGlyphs" stroke="#f4f4f4" stroke-width="0.25">34.10</text>
<text x="1465.3" y="692.2" font-size="13.40" fill="#f4f4f4" textLength="25.3" lengthAdjust="spacingAndGlyphs" stroke="#f4f4f4" stroke-width="0.25">32.21</text>
<text x="1514.6" y="692.2" font-size="13.40" fill="#f4f4f4" textLength="30.9" lengthAdjust="spacingAndGlyphs" stroke="#f4f4f4" stroke-width="0.25">128.76</text>
<text x="1574.5" y="692.2" font-size="13.40" fill="#f4f4f4" textLength="19.7" lengthAdjust="spacingAndGlyphs" stroke="#f4f4f4" stroke-width="0.25">8.86</text>
<text x="320.3" y="714.9" font-size="13.40" fill="#f4f4f4" textLength="65.1" lengthAdjust="spacingAndGlyphs" stroke="#f4f4f4" stroke-width="0.25">Target x:CIE31</text>
<text x="394.4" y="714.9" font-size="13.40" fill="#f4f4f4" textLength="19.7" lengthAdjust="spacingAndGlyphs" stroke="#f4f4f4" stroke-width="0.25">0.31</text>
<text x="432.5" y="714.9" font-size="13.40" fill="#f4f4f4" textLength="19.7" lengthAdjust="spacingAndGlyphs" stroke="#f4f4f4" stroke-width="0.25">0.31</text>
<text x="471.9" y="714.9" font-size="13.40" fill="#f4f4f4" textLength="19.7" lengthAdjust="spacingAndGlyphs" stroke="#f4f4f4" stroke-width="0.25">0.31</text>
<text x="511.6" y="714.9" font-size="13.40" fill="#f4f4f4" textLength="19.7" lengthAdjust="spacingAndGlyphs" stroke="#f4f4f4" stroke-width="0.25">0.31</text>
<text x="551.6" y="714.9" font-size="13.40" fill="#f4f4f4" textLength="19.7" lengthAdjust="spacingAndGlyphs" stroke="#f4f4f4" stroke-width="0.25">0.31</text>
<text x="591.2" y="714.9" font-size="13.40" fill="#f4f4f4" textLength="19.7" lengthAdjust="spacingAndGlyphs" stroke="#f4f4f4" stroke-width="0.25">0.31</text>
<text x="619.4" y="714.9" font-size="13.40" fill="#f4f4f4" textLength="19.7" lengthAdjust="spacingAndGlyphs" stroke="#f4f4f4" stroke-width="0.25">0.40</text>
<text x="666.6" y="714.9" font-size="13.40" fill="#f4f4f4" textLength="19.7" lengthAdjust="spacingAndGlyphs" stroke="#f4f4f4" stroke-width="0.25">0.38</text>
<text x="714.7" y="714.9" font-size="13.40" fill="#f4f4f4" textLength="19.7" lengthAdjust="spacingAndGlyphs" stroke="#f4f4f4" stroke-width="0.25">0.25</text>
<text x="757.2" y="714.9" font-size="13.40" fill="#f4f4f4" textLength="19.7" lengthAdjust="spacingAndGlyphs" stroke="#f4f4f4" stroke-width="0.25">0.34</text>
<text x="794.4" y="714.9" font-size="13.40" fill="#f4f4f4" textLength="19.7" lengthAdjust="spacingAndGlyphs" stroke="#f4f4f4" stroke-width="0.25">0.27</text>
<text x="852.2" y="714.9" font-size="13.40" fill="#f4f4f4" textLength="19.7" lengthAdjust="spacingAndGlyphs" stroke="#f4f4f4" stroke-width="0.25">0.26</text>
<text x="913.9" y="714.9" font-size="13.40" fill="#f4f4f4" textLength="19.7" lengthAdjust="spacingAndGlyphs" stroke="#f4f4f4" stroke-width="0.25">0.51</text>
<text x="951.9" y="714.9" font-size="13.40" fill="#f4f4f4" textLength="19.7" lengthAdjust="spacingAndGlyphs" stroke="#f4f4f4" stroke-width="0.25">0.22</text>
<text x="1015.4" y="714.9" font-size="13.40" fill="#f4f4f4" textLength="19.7" lengthAdjust="spacingAndGlyphs" stroke="#f4f4f4" stroke-width="0.25">0.46</text>
<text x="1084.5" y="714.9" font-size="13.40" fill="#f4f4f4" textLength="19.7" lengthAdjust="spacingAndGlyphs" stroke="#f4f4f4" stroke-width="0.25">0.29</text>
<text x="1118.6" y="714.9" font-size="13.40" fill="#f4f4f4" textLength="19.7" lengthAdjust="spacingAndGlyphs" stroke="#f4f4f4" stroke-width="0.25">0.38</text>
<text x="1182.6" y="714.9" font-size="13.40" fill="#f4f4f4" textLength="19.7" lengthAdjust="spacingAndGlyphs" stroke="#f4f4f4" stroke-width="0.25">0.47</text>
<text x="1251.7" y="714.9" font-size="13.40" fill="#f4f4f4" textLength="19.7" lengthAdjust="spacingAndGlyphs" stroke="#f4f4f4" stroke-width="0.25">0.19</text>
<text x="1283.9" y="714.9" font-size="13.40" fill="#f4f4f4" textLength="19.7" lengthAdjust="spacingAndGlyphs" stroke="#f4f4f4" stroke-width="0.25">0.31</text>
<text x="1316.5" y="714.9" font-size="13.40" fill="#f4f4f4" textLength="19.7" lengthAdjust="spacingAndGlyphs" stroke="#f4f4f4" stroke-width="0.25">0.54</text>
<text x="1349.3" y="714.9" font-size="13.40" fill="#f4f4f4" textLength="19.7" lengthAdjust="spacingAndGlyphs" stroke="#f4f4f4" stroke-width="0.25">0.45</text>
<text x="1387.3" y="714.9" font-size="13.40" fill="#f4f4f4" textLength="19.7" lengthAdjust="spacingAndGlyphs" stroke="#f4f4f4" stroke-width="0.25">0.37</text>
<text x="1432.5" y="714.9" font-size="13.40" fill="#f4f4f4" textLength="19.7" lengthAdjust="spacingAndGlyphs" stroke="#f4f4f4" stroke-width="0.25">0.21</text>
<text x="1465.3" y="714.9" font-size="13.40" fill="#f4f4f4" textLength="19.7" lengthAdjust="spacingAndGlyphs" stroke="#f4f4f4" stroke-width="0.25">0.64</text>
<text x="1514.6" y="714.9" font-size="13.40" fill="#f4f4f4" textLength="19.7" lengthAdjust="spacingAndGlyphs" stroke="#f4f4f4" stroke-width="0.25">0.30</text>
<text x="1574.5" y="714.9" font-size="13.40" fill="#f4f4f4" textLength="19.7" lengthAdjust="spacingAndGlyphs" stroke="#f4f4f4" stroke-width="0.25">0.15</text>
<text x="320.3" y="737.6" font-size="13.40" fill="#f4f4f4" textLength="65.1" lengthAdjust="spacingAndGlyphs" stroke="#f4f4f4" stroke-width="0.25">Target y:CIE31</text>
<text x="394.4" y="737.6" font-size="13.40" fill="#f4f4f4" textLength="19.7" lengthAdjust="spacingAndGlyphs" stroke="#f4f4f4" stroke-width="0.25">0.33</text>
<text x="432.5" y="737.6" font-size="13.40" fill="#f4f4f4" textLength="19.7" lengthAdjust="spacingAndGlyphs" stroke="#f4f4f4" stroke-width="0.25">0.33</text>
<text x="471.9" y="737.6" font-size="13.40" fill="#f4f4f4" textLength="19.7" lengthAdjust="spacingAndGlyphs" stroke="#f4f4f4" stroke-width="0.25">0.33</text>
<text x="511.6" y="737.6" font-size="13.40" fill="#f4f4f4" textLength="19.7" lengthAdjust="spacingAndGlyphs" stroke="#f4f4f4" stroke-width="0.25">0.33</text>
<text x="551.6" y="737.6" font-size="13.40" fill="#f4f4f4" textLength="19.7" lengthAdjust="spacingAndGlyphs" stroke="#f4f4f4" stroke-width="0.25">0.33</text>
<text x="591.2" y="737.6" font-size="13.40" fill="#f4f4f4" textLength="19.7" lengthAdjust="spacingAndGlyphs" stroke="#f4f4f4" stroke-width="0.25">0.33</text>
<text x="619.4" y="737.6" font-size="13.40" fill="#f4f4f4" textLength="19.7" lengthAdjust="spacingAndGlyphs" stroke="#f4f4f4" stroke-width="0.25">0.36</text>
<text x="666.6" y="737.6" font-size="13.40" fill="#f4f4f4" textLength="19.7" lengthAdjust="spacingAndGlyphs" stroke="#f4f4f4" stroke-width="0.25">0.36</text>
<text x="714.7" y="737.6" font-size="13.40" fill="#f4f4f4" textLength="19.7" lengthAdjust="spacingAndGlyphs" stroke="#f4f4f4" stroke-width="0.25">0.27</text>
<text x="757.2" y="737.6" font-size="13.40" fill="#f4f4f4" textLength="19.7" lengthAdjust="spacingAndGlyphs" stroke="#f4f4f4" stroke-width="0.25">0.43</text>
<text x="794.4" y="737.6" font-size="13.40" fill="#f4f4f4" textLength="19.7" lengthAdjust="spacingAndGlyphs" stroke="#f4f4f4" stroke-width="0.25">0.25</text>
<text x="852.2" y="737.6" font-size="13.40" fill="#f4f4f4" textLength="19.7" lengthAdjust="spacingAndGlyphs" stroke="#f4f4f4" stroke-width="0.25">0.36</text>
<text x="913.9" y="737.6" font-size="13.40" fill="#f4f4f4" textLength="19.7" lengthAdjust="spacingAndGlyphs" stroke="#f4f4f4" stroke-width="0.25">0.41</text>
<text x="951.9" y="737.6" font-size="13.40" fill="#f4f4f4" textLength="19.7" lengthAdjust="spacingAndGlyphs" stroke="#f4f4f4" stroke-width="0.25">0.19</text>
<text x="1015.4" y="737.6" font-size="13.40" fill="#f4f4f4" textLength="19.7" lengthAdjust="spacingAndGlyphs" stroke="#f4f4f4" stroke-width="0.25">0.31</text>
<text x="1084.5" y="737.6" font-size="13.40" fill="#f4f4f4" textLength="19.7" lengthAdjust="spacingAndGlyphs" stroke="#f4f4f4" stroke-width="0.25">0.22</text>
<text x="1118.6" y="737.6" font-size="13.40" fill="#f4f4f4" textLength="19.7" lengthAdjust="spacingAndGlyphs" stroke="#f4f4f4" stroke-width="0.25">0.49</text>
<text x="1182.6" y="737.6" font-size="13.40" fill="#f4f4f4" textLength="19.7" lengthAdjust="spacingAndGlyphs" stroke="#f4f4f4" stroke-width="0.25">0.44</text>
<text x="1251.7" y="737.6" font-size="13.40" fill="#f4f4f4" textLength="19.7" lengthAdjust="spacingAndGlyphs" stroke="#f4f4f4" stroke-width="0.25">0.14</text>
<text x="1283.9" y="737.6" font-size="13.40" fill="#f4f4f4" textLength="19.7" lengthAdjust="spacingAndGlyphs" stroke="#f4f4f4" stroke-width="0.25">0.49</text>
<text x="1316.5" y="737.6" font-size="13.40" fill="#f4f4f4" textLength="19.7" lengthAdjust="spacingAndGlyphs" stroke="#f4f4f4" stroke-width="0.25">0.32</text>
<text x="1349.3" y="737.6" font-size="13.40" fill="#f4f4f4" textLength="19.7" lengthAdjust="spacingAndGlyphs" stroke="#f4f4f4" stroke-width="0.25">0.47</text>
<text x="1387.3" y="737.6" font-size="13.40" fill="#f4f4f4" textLength="19.7" lengthAdjust="spacingAndGlyphs" stroke="#f4f4f4" stroke-width="0.25">0.25</text>
<text x="1432.5" y="737.6" font-size="13.40" fill="#f4f4f4" textLength="19.7" lengthAdjust="spacingAndGlyphs" stroke="#f4f4f4" stroke-width="0.25">0.27</text>
<text x="1465.3" y="737.6" font-size="13.40" fill="#f4f4f4" textLength="19.7" lengthAdjust="spacingAndGlyphs" stroke="#f4f4f4" stroke-width="0.25">0.33</text>
<text x="1514.6" y="737.6" font-size="13.40" fill="#f4f4f4" textLength="19.7" lengthAdjust="spacingAndGlyphs" stroke="#f4f4f4" stroke-width="0.25">0.60</text>
<text x="1574.5" y="737.6" font-size="13.40" fill="#f4f4f4" textLength="19.7" lengthAdjust="spacingAndGlyphs" stroke="#f4f4f4" stroke-width="0.25">0.06</text>
<text x="320.3" y="760.3" font-size="13.40" fill="#f4f4f4" textLength="36.5" lengthAdjust="spacingAndGlyphs" stroke="#f4f4f4" stroke-width="0.25">Target Y</text>
<text x="394.4" y="760.3" font-size="13.40" fill="#f4f4f4" textLength="30.9" lengthAdjust="spacingAndGlyphs" stroke="#f4f4f4" stroke-width="0.25">172.39</text>
<text x="432.5" y="760.3" font-size="13.40" fill="#f4f4f4" textLength="30.9" lengthAdjust="spacingAndGlyphs" stroke="#f4f4f4" stroke-width="0.25">136.41</text>
<text x="471.9" y="760.3" font-size="13.40" fill="#f4f4f4" textLength="30.9" lengthAdjust="spacingAndGlyphs" stroke="#f4f4f4" stroke-width="0.25">109.91</text>
<text x="511.6" y="760.3" font-size="13.40" fill="#f4f4f4" textLength="25.3" lengthAdjust="spacingAndGlyphs" stroke="#f4f4f4" stroke-width="0.25">84.65</text>
<text x="551.6" y="760.3" font-size="13.40" fill="#f4f4f4" textLength="25.3" lengthAdjust="spacingAndGlyphs" stroke="#f4f4f4" stroke-width="0.25">58.94</text>
<text x="591.2" y="760.3" font-size="13.40" fill="#f4f4f4" textLength="19.7" lengthAdjust="spacingAndGlyphs" stroke="#f4f4f4" stroke-width="0.25">0.00</text>
<text x="619.4" y="760.3" font-size="13.40" fill="#f4f4f4" textLength="25.3" lengthAdjust="spacingAndGlyphs" stroke="#f4f4f4" stroke-width="0.25">17.36</text>
<text x="666.6" y="760.3" font-size="13.40" fill="#f4f4f4" textLength="25.3" lengthAdjust="spacingAndGlyphs" stroke="#f4f4f4" stroke-width="0.25">60.15</text>
<text x="714.7" y="760.3" font-size="13.40" fill="#f4f4f4" textLength="25.3" lengthAdjust="spacingAndGlyphs" stroke="#f4f4f4" stroke-width="0.25">32.23</text>
<text x="757.2" y="760.3" font-size="13.40" fill="#f4f4f4" textLength="25.3" lengthAdjust="spacingAndGlyphs" stroke="#f4f4f4" stroke-width="0.25">22.47</text>
<text x="794.4" y="760.3" font-size="13.40" fill="#f4f4f4" textLength="25.3" lengthAdjust="spacingAndGlyphs" stroke="#f4f4f4" stroke-width="0.25">40.20</text>
<text x="852.2" y="760.3" font-size="13.40" fill="#f4f4f4" textLength="25.3" lengthAdjust="spacingAndGlyphs" stroke="#f4f4f4" stroke-width="0.25">72.18</text>
<text x="913.9" y="760.3" font-size="13.40" fill="#f4f4f4" textLength="25.3" lengthAdjust="spacingAndGlyphs" stroke="#f4f4f4" stroke-width="0.25">48.87</text>
<text x="951.9" y="760.3" font-size="13.40" fill="#f4f4f4" textLength="25.3" lengthAdjust="spacingAndGlyphs" stroke="#f4f4f4" stroke-width="0.25">20.26</text>
<text x="1015.4" y="760.3" font-size="13.40" fill="#f4f4f4" textLength="25.3" lengthAdjust="spacingAndGlyphs" stroke="#f4f4f4" stroke-width="0.25">32.19</text>
<text x="1084.5" y="760.3" font-size="13.40" fill="#f4f4f4" textLength="24.6" lengthAdjust="spacingAndGlyphs" stroke="#f4f4f4" stroke-width="0.25">11.51</text>
<text x="1118.6" y="760.3" font-size="13.40" fill="#f4f4f4" textLength="25.3" lengthAdjust="spacingAndGlyphs" stroke="#f4f4f4" stroke-width="0.25">73.71</text>
<text x="1182.6" y="760.3" font-size="13.40" fill="#f4f4f4" textLength="25.3" lengthAdjust="spacingAndGlyphs" stroke="#f4f4f4" stroke-width="0.25">73.29</text>
<text x="1251.7" y="760.3" font-size="13.40" fill="#f4f4f4" textLength="25.3" lengthAdjust="spacingAndGlyphs" stroke="#f4f4f4" stroke-width="0.25">10.76</text>
<text x="1283.9" y="760.3" font-size="13.40" fill="#f4f4f4" textLength="25.3" lengthAdjust="spacingAndGlyphs" stroke="#f4f4f4" stroke-width="0.25">39.60</text>
<text x="1316.5" y="760.3" font-size="13.40" fill="#f4f4f4" textLength="25.3" lengthAdjust="spacingAndGlyphs" stroke="#f4f4f4" stroke-width="0.25">20.10</text>
<text x="1349.3" y="760.3" font-size="13.40" fill="#f4f4f4" textLength="30.9" lengthAdjust="spacingAndGlyphs" stroke="#f4f4f4" stroke-width="0.25">101.65</text>
<text x="1387.3" y="760.3" font-size="13.40" fill="#f4f4f4" textLength="25.3" lengthAdjust="spacingAndGlyphs" stroke="#f4f4f4" stroke-width="0.25">32.45</text>
<text x="1432.5" y="760.3" font-size="13.40" fill="#f4f4f4" textLength="25.3" lengthAdjust="spacingAndGlyphs" stroke="#f4f4f4" stroke-width="0.25">33.47</text>
<text x="1465.3" y="760.3" font-size="13.40" fill="#f4f4f4" textLength="25.3" lengthAdjust="spacingAndGlyphs" stroke="#f4f4f4" stroke-width="0.25">36.66</text>
<text x="1514.6" y="760.3" font-size="13.40" fill="#f4f4f4" textLength="30.9" lengthAdjust="spacingAndGlyphs" stroke="#f4f4f4" stroke-width="0.25">123.28</text>
<text x="1574.5" y="760.3" font-size="13.40" fill="#f4f4f4" textLength="25.3" lengthAdjust="spacingAndGlyphs" stroke="#f4f4f4" stroke-width="0.25">12.44</text>
<text x="320.3" y="783.1" font-size="13.40" fill="#f4f4f4" textLength="37.8" lengthAdjust="spacingAndGlyphs" stroke="#f4f4f4" stroke-width="0.25">ΔE 2000</text>
<text x="394.4" y="783.1" font-size="13.40" fill="#f4f4f4" textLength="19.7" lengthAdjust="spacingAndGlyphs" stroke="#f4f4f4" stroke-width="0.25">1.60</text>
<text x="432.5" y="783.1" font-size="13.40" fill="#f4f4f4" textLength="19.7" lengthAdjust="spacingAndGlyphs" stroke="#f4f4f4" stroke-width="0.25">1.56</text>
<text x="471.9" y="783.1" font-size="13.40" fill="#f4f4f4" textLength="19.7" lengthAdjust="spacingAndGlyphs" stroke="#f4f4f4" stroke-width="0.25">1.43</text>
<text x="511.6" y="783.1" font-size="13.40" fill="#f4f4f4" textLength="19.7" lengthAdjust="spacingAndGlyphs" stroke="#f4f4f4" stroke-width="0.25">1.33</text>
<text x="551.6" y="783.1" font-size="13.40" fill="#f4f4f4" textLength="19.7" lengthAdjust="spacingAndGlyphs" stroke="#f4f4f4" stroke-width="0.25">1.12</text>
<text x="591.2" y="783.1" font-size="13.40" fill="#f4f4f4" textLength="19.7" lengthAdjust="spacingAndGlyphs" stroke="#f4f4f4" stroke-width="0.25">1.34</text>
<text x="619.4" y="783.1" font-size="13.40" fill="#f4f4f4" textLength="19.7" lengthAdjust="spacingAndGlyphs" stroke="#f4f4f4" stroke-width="0.25">2.05</text>
<text x="666.6" y="783.1" font-size="13.40" fill="#f4f4f4" textLength="19.7" lengthAdjust="spacingAndGlyphs" stroke="#f4f4f4" stroke-width="0.25">3.83</text>
<text x="714.7" y="783.1" font-size="13.40" fill="#f4f4f4" textLength="19.7" lengthAdjust="spacingAndGlyphs" stroke="#f4f4f4" stroke-width="0.25">3.73</text>
<text x="757.2" y="783.1" font-size="13.40" fill="#f4f4f4" textLength="19.7" lengthAdjust="spacingAndGlyphs" stroke="#f4f4f4" stroke-width="0.25">1.81</text>
<text x="794.4" y="783.1" font-size="13.40" fill="#f4f4f4" textLength="19.7" lengthAdjust="spacingAndGlyphs" stroke="#f4f4f4" stroke-width="0.25">2.16</text>
<text x="852.2" y="783.1" font-size="13.40" fill="#f4f4f4" textLength="19.7" lengthAdjust="spacingAndGlyphs" stroke="#f4f4f4" stroke-width="0.25">2.56</text>
<text x="913.9" y="783.1" font-size="13.40" fill="#f4f4f4" textLength="19.7" lengthAdjust="spacingAndGlyphs" stroke="#f4f4f4" stroke-width="0.25">7.07</text>
<text x="951.9" y="783.1" font-size="13.40" fill="#f4f4f4" textLength="19.7" lengthAdjust="spacingAndGlyphs" stroke="#f4f4f4" stroke-width="0.25">4.31</text>
<text x="1015.4" y="783.1" font-size="13.40" fill="#f4f4f4" textLength="19.7" lengthAdjust="spacingAndGlyphs" stroke="#f4f4f4" stroke-width="0.25">2.28</text>
<text x="1084.5" y="783.1" font-size="13.40" fill="#f4f4f4" textLength="19.7" lengthAdjust="spacingAndGlyphs" stroke="#f4f4f4" stroke-width="0.25">3.16</text>
<text x="1118.6" y="783.1" font-size="13.40" fill="#f4f4f4" textLength="19.7" lengthAdjust="spacingAndGlyphs" stroke="#f4f4f4" stroke-width="0.25">2.45</text>
<text x="1182.6" y="783.1" font-size="13.40" fill="#f4f4f4" textLength="19.7" lengthAdjust="spacingAndGlyphs" stroke="#f4f4f4" stroke-width="0.25">7.30</text>
<text x="1251.7" y="783.1" font-size="13.40" fill="#f4f4f4" textLength="19.7" lengthAdjust="spacingAndGlyphs" stroke="#f4f4f4" stroke-width="0.25">5.20</text>
<text x="1283.9" y="783.1" font-size="13.40" fill="#f4f4f4" textLength="19.7" lengthAdjust="spacingAndGlyphs" stroke="#f4f4f4" stroke-width="0.25">2.83</text>
<text x="1316.5" y="783.1" font-size="13.40" fill="#f4f4f4" textLength="19.7" lengthAdjust="spacingAndGlyphs" stroke="#f4f4f4" stroke-width="0.25">1.90</text>
<text x="1349.3" y="783.1" font-size="13.40" fill="#f4f4f4" textLength="19.7" lengthAdjust="spacingAndGlyphs" stroke="#f4f4f4" stroke-width="0.25">5.39</text>
<text x="1387.3" y="783.1" font-size="13.40" fill="#f4f4f4" textLength="19.7" lengthAdjust="spacingAndGlyphs" stroke="#f4f4f4" stroke-width="0.25">2.31</text>
<text x="1432.5" y="783.1" font-size="13.40" fill="#f4f4f4" textLength="19.7" lengthAdjust="spacingAndGlyphs" stroke="#f4f4f4" stroke-width="0.25">3.66</text>
<text x="1465.3" y="783.1" font-size="13.40" fill="#f4f4f4" textLength="19.7" lengthAdjust="spacingAndGlyphs" stroke="#f4f4f4" stroke-width="0.25">3.54</text>
<text x="1514.6" y="783.1" font-size="13.40" fill="#f4f4f4" textLength="19.7" lengthAdjust="spacingAndGlyphs" stroke="#f4f4f4" stroke-width="0.25">4.51</text>
<text x="1574.5" y="783.1" font-size="13.40" fill="#f4f4f4" textLength="19.7" lengthAdjust="spacingAndGlyphs" stroke="#f4f4f4" stroke-width="0.25">8.17</text>
</g>
<rect x="308" y="789" width="10" height="14.5" fill="#222" />
<rect x="318" y="789" width="1280" height="15" fill="#5a5a5a" />
<rect x="331" y="790.5" width="1077" height="12" rx="6" fill="#444444"/>
<rect x="319" y="790" width="10" height="13" rx="2" fill="#7a7a7a"/>
<path d="M326.5 792.5 L321.5 796.5 L326.5 800.5 Z" fill="#4a4a4a"/>
<rect x="1587" y="790" width="10" height="13" rx="2" fill="#7a7a7a"/>
<path d="M1589.5 792.5 L1594.5 796.5 L1589.5 800.5 Z" fill="#4a4a4a"/>
<rect x="0" y="804" width="1600" height="66" fill="#2e2e2e" />
<g clip-path="url(#swbar)">
<path d="M1.0 857 V812 Q1.0 808 5.0 808 H47.0 Q51.0 808 51.0 812 V857 Z" fill="url(#sbtn)"/>
<rect x="51.0" y="808" width="2" height="49" fill="#333"/>
<rect x="6.2" y="813.3" width="39.8" height="23.7" rx="3.2" fill="#ffffff"/>
<rect x="6.2" y="813.3" width="39.8" height="23.7" rx="3.2" fill="none" stroke="#000" stroke-opacity="0.18" stroke-width="1"/>
<text x="26.0" y="851.8" font-size="11.20" fill="#1e1e1e" text-anchor="middle" textLength="29.2" lengthAdjust="spacingAndGlyphs" stroke="#1e1e1e" stroke-width="0.3">White</text>
<path d="M53.0 857 V812 Q53.0 808 57.0 808 H99.0 Q103.0 808 103.0 812 V857 Z" fill="url(#sbtn)"/>
<rect x="103.0" y="808" width="2" height="49" fill="#333"/>
<rect x="58.2" y="813.3" width="39.8" height="23.7" rx="3.2" fill="#e6e6e6"/>
<rect x="58.2" y="813.3" width="39.8" height="23.7" rx="3.2" fill="none" stroke="#000" stroke-opacity="0.18" stroke-width="1"/>
<text x="78.0" y="851.8" font-size="11.20" fill="#1e1e1e" text-anchor="middle" textLength="38.0" lengthAdjust="spacingAndGlyphs" stroke="#1e1e1e" stroke-width="0.3">Gray 80</text>
<path d="M104.9 857 V812 Q104.9 808 108.9 808 H150.9 Q154.9 808 154.9 812 V857 Z" fill="url(#sbtn)"/>
<rect x="154.9" y="808" width="2" height="49" fill="#333"/>
<rect x="110.1" y="813.3" width="39.8" height="23.7" rx="3.2" fill="#d2d2d2"/>
<rect x="110.1" y="813.3" width="39.8" height="23.7" rx="3.2" fill="none" stroke="#000" stroke-opacity="0.18" stroke-width="1"/>
<text x="129.9" y="851.8" font-size="11.20" fill="#1e1e1e" text-anchor="middle" textLength="38.0" lengthAdjust="spacingAndGlyphs" stroke="#1e1e1e" stroke-width="0.3">Gray 65</text>
<path d="M156.9 857 V812 Q156.9 808 160.9 808 H202.9 Q206.9 808 206.9 812 V857 Z" fill="url(#sbtn)"/>
<rect x="206.9" y="808" width="2" height="49" fill="#333"/>
<rect x="162.1" y="813.3" width="39.8" height="23.7" rx="3.2" fill="#bcbcbc"/>
<rect x="162.1" y="813.3" width="39.8" height="23.7" rx="3.2" fill="none" stroke="#000" stroke-opacity="0.18" stroke-width="1"/>
<text x="181.9" y="851.8" font-size="11.20" fill="#1e1e1e" text-anchor="middle" textLength="38.0" lengthAdjust="spacingAndGlyphs" stroke="#1e1e1e" stroke-width="0.3">Gray 50</text>
<path d="M208.9 857 V812 Q208.9 808 212.9 808 H254.9 Q258.9 808 258.9 812 V857 Z" fill="url(#sbtn)"/>
<rect x="258.9" y="808" width="2" height="49" fill="#333"/>
<rect x="214.1" y="813.3" width="39.8" height="23.7" rx="3.2" fill="#a2a2a2"/>
<rect x="214.1" y="813.3" width="39.8" height="23.7" rx="3.2" fill="none" stroke="#000" stroke-opacity="0.18" stroke-width="1"/>
<text x="233.9" y="851.8" font-size="11.20" fill="#1e1e1e" text-anchor="middle" textLength="38.0" lengthAdjust="spacingAndGlyphs" stroke="#1e1e1e" stroke-width="0.3">Gray 35</text>
<path d="M260.9 857 V812 Q260.9 808 264.9 808 H306.9 Q310.9 808 310.9 812 V857 Z" fill="url(#sbtn)"/>
<rect x="310.9" y="808" width="2" height="49" fill="#333"/>
<rect x="266.1" y="813.3" width="39.8" height="23.7" rx="3.2" fill="#000000"/>
<rect x="266.1" y="813.3" width="39.8" height="23.7" rx="3.2" fill="none" stroke="#000" stroke-opacity="0.18" stroke-width="1"/>
<text x="285.9" y="851.8" font-size="11.20" fill="#1e1e1e" text-anchor="middle" textLength="26.2" lengthAdjust="spacingAndGlyphs" stroke="#1e1e1e" stroke-width="0.3">Black</text>
<path d="M312.8 857 V812 Q312.8 808 316.8 808 H358.8 Q362.8 808 362.8 812 V857 Z" fill="url(#sbtn)"/>
<rect x="362.8" y="808" width="2" height="49" fill="#333"/>
<rect x="318.0" y="813.3" width="39.8" height="23.7" rx="3.2" fill="#735244"/>
<rect x="318.0" y="813.3" width="39.8" height="23.7" rx="3.2" fill="none" stroke="#000" stroke-opacity="0.18" stroke-width="1"/>
<text x="337.8" y="851.8" font-size="11.20" fill="#1e1e1e" text-anchor="middle" textLength="46.4" lengthAdjust="spacingAndGlyphs" stroke="#1e1e1e" stroke-width="0.3">Dark Skin</text>
<path d="M364.8 857 V812 Q364.8 808 368.8 808 H410.8 Q414.8 808 414.8 812 V857 Z" fill="url(#sbtn)"/>
<rect x="414.8" y="808" width="2" height="49" fill="#333"/>
<rect x="370.0" y="813.3" width="39.8" height="23.7" rx="3.2" fill="#c29682"/>
<rect x="370.0" y="813.3" width="39.8" height="23.7" rx="3.2" fill="none" stroke="#000" stroke-opacity="0.18" stroke-width="1"/>
<text x="389.8" y="851.8" font-size="11.20" fill="#1e1e1e" text-anchor="middle" textLength="47.0" lengthAdjust="spacingAndGlyphs" stroke="#1e1e1e" stroke-width="0.3">Light Skin</text>
<path d="M416.8 857 V812 Q416.8 808 420.8 808 H462.8 Q466.8 808 466.8 812 V857 Z" fill="url(#sbtn)"/>
<rect x="466.8" y="808" width="2" height="49" fill="#333"/>
<rect x="422.0" y="813.3" width="39.8" height="23.7" rx="3.2" fill="#5f7a9e"/>
<rect x="422.0" y="813.3" width="39.8" height="23.7" rx="3.2" fill="none" stroke="#000" stroke-opacity="0.18" stroke-width="1"/>
<text x="441.8" y="851.8" font-size="11.20" fill="#1e1e1e" text-anchor="middle" textLength="42.2" lengthAdjust="spacingAndGlyphs" stroke="#1e1e1e" stroke-width="0.3">Blue Sky</text>
<path d="M468.7 857 V812 Q468.7 808 472.7 808 H514.7 Q518.7 808 518.7 812 V857 Z" fill="url(#sbtn)"/>
<rect x="518.7" y="808" width="2" height="49" fill="#333"/>
<rect x="473.9" y="813.3" width="39.8" height="23.7" rx="3.2" fill="#576b42"/>
<rect x="473.9" y="813.3" width="39.8" height="23.7" rx="3.2" fill="none" stroke="#000" stroke-opacity="0.18" stroke-width="1"/>
<text x="493.7" y="851.8" font-size="11.20" fill="#1e1e1e" text-anchor="middle" textLength="35.1" lengthAdjust="spacingAndGlyphs" stroke="#1e1e1e" stroke-width="0.3">Foliage</text>
<path d="M520.7 857 V812 Q520.7 808 524.7 808 H566.7 Q570.7 808 570.7 812 V857 Z" fill="url(#sbtn)"/>
<rect x="570.7" y="808" width="2" height="49" fill="#333"/>
<rect x="525.9" y="813" width="39.8" height="12" rx="3" fill="#8581b3"/>
<rect x="525.9" y="813" width="39.8" height="12" rx="3" fill="none" stroke="#000" stroke-opacity="0.18" stroke-width="1"/>
<text x="529.3" y="839.7" font-size="11.20" fill="#1e1e1e" textLength="21.5" lengthAdjust="spacingAndGlyphs" stroke="#1e1e1e" stroke-width="0.3">Blue</text>
<text x="529.3" y="851.6" font-size="11.20" fill="#1e1e1e" textLength="32.3" lengthAdjust="spacingAndGlyphs" stroke="#1e1e1e" stroke-width="0.3">Flower</text>
<path d="M572.7 857 V812 Q572.7 808 576.7 808 H618.7 Q622.7 808 622.7 812 V857 Z" fill="url(#sbtn)"/>
<rect x="622.7" y="808" width="2" height="49" fill="#333"/>
<rect x="577.9" y="813" width="39.8" height="12" rx="3" fill="#62bfa8"/>
<rect x="577.9" y="813" width="39.8" height="12" rx="3" fill="none" stroke="#000" stroke-opacity="0.18" stroke-width="1"/>
<text x="583.0" y="839.7" font-size="11.20" fill="#1e1e1e" textLength="29.3" lengthAdjust="spacingAndGlyphs" stroke="#1e1e1e" stroke-width="0.3">Bluish</text>
<text x="583.0" y="851.6" font-size="11.20" fill="#1e1e1e" textLength="29.9" lengthAdjust="spacingAndGlyphs" stroke="#1e1e1e" stroke-width="0.3">Green</text>
<path d="M624.6 857 V812 Q624.6 808 628.6 808 H670.6 Q674.6 808 674.6 812 V857 Z" fill="url(#sbtn)"/>
<rect x="674.6" y="808" width="2" height="49" fill="#333"/>
<rect x="629.8" y="813.3" width="39.8" height="23.7" rx="3.2" fill="#d67a2c"/>
<rect x="629.8" y="813.3" width="39.8" height="23.7" rx="3.2" fill="none" stroke="#000" stroke-opacity="0.18" stroke-width="1"/>
<text x="649.6" y="851.8" font-size="11.20" fill="#1e1e1e" text-anchor="middle" textLength="35.7" lengthAdjust="spacingAndGlyphs" stroke="#1e1e1e" stroke-width="0.3">Orange</text>
<path d="M676.6 857 V812 Q676.6 808 680.6 808 H722.6 Q726.6 808 726.6 812 V857 Z" fill="url(#sbtn)"/>
<rect x="726.6" y="808" width="2" height="49" fill="#333"/>
<rect x="681.8" y="813" width="39.8" height="12" rx="3" fill="#4c5aa8"/>
<rect x="681.8" y="813" width="39.8" height="12" rx="3" fill="none" stroke="#000" stroke-opacity="0.18" stroke-width="1"/>
<text x="681.2" y="839.7" font-size="11.20" fill="#1e1e1e" textLength="38.8" lengthAdjust="spacingAndGlyphs" stroke="#1e1e1e" stroke-width="0.3">Purplish</text>
<text x="681.2" y="851.6" font-size="11.20" fill="#1e1e1e" textLength="21.5" lengthAdjust="spacingAndGlyphs" stroke="#1e1e1e" stroke-width="0.3">Blue</text>
<path d="M728.6 857 V812 Q728.6 808 732.6 808 H774.6 Q778.6 808 778.6 812 V857 Z" fill="url(#sbtn)"/>
<rect x="778.6" y="808" width="2" height="49" fill="#333"/>
<rect x="733.8" y="813" width="39.8" height="12" rx="3" fill="#c25a64"/>
<rect x="733.8" y="813" width="39.8" height="12" rx="3" fill="none" stroke="#000" stroke-opacity="0.18" stroke-width="1"/>
<text x="728.8" y="839.7" font-size="11.20" fill="#1e1e1e" textLength="45.4" lengthAdjust="spacingAndGlyphs" stroke="#1e1e1e" stroke-width="0.3">Moderate</text>
<text x="728.8" y="851.6" font-size="11.20" fill="#1e1e1e" textLength="19.7" lengthAdjust="spacingAndGlyphs" stroke="#1e1e1e" stroke-width="0.3">Red</text>
<path d="M780.5 857 V812 Q780.5 808 784.5 808 H826.5 Q830.5 808 830.5 812 V857 Z" fill="url(#sbtn)"/>
<rect x="830.5" y="808" width="2" height="49" fill="#333"/>
<rect x="785.8" y="813.3" width="39.8" height="23.7" rx="3.2" fill="#5e3c6c"/>
<rect x="785.8" y="813.3" width="39.8" height="23.7" rx="3.2" fill="none" stroke="#000" stroke-opacity="0.18" stroke-width="1"/>
<text x="805.5" y="851.8" font-size="11.20" fill="#1e1e1e" text-anchor="middle" textLength="30.9" lengthAdjust="spacingAndGlyphs" stroke="#1e1e1e" stroke-width="0.3">Purple</text>
<path d="M832.5 857 V812 Q832.5 808 836.5 808 H878.5 Q882.5 808 882.5 812 V857 Z" fill="url(#sbtn)"/>
<rect x="882.5" y="808" width="2" height="49" fill="#333"/>
<rect x="837.7" y="813" width="39.8" height="12" rx="3" fill="#9dbc40"/>
<rect x="837.7" y="813" width="39.8" height="12" rx="3" fill="none" stroke="#000" stroke-opacity="0.18" stroke-width="1"/>
<text x="841.1" y="839.7" font-size="11.20" fill="#1e1e1e" textLength="30.7" lengthAdjust="spacingAndGlyphs" stroke="#1e1e1e" stroke-width="0.3">Yellow</text>
<text x="841.1" y="851.6" font-size="11.20" fill="#1e1e1e" textLength="29.9" lengthAdjust="spacingAndGlyphs" stroke="#1e1e1e" stroke-width="0.3">Green</text>
<path d="M884.5 857 V812 Q884.5 808 888.5 808 H930.5 Q934.5 808 934.5 812 V857 Z" fill="url(#sbtn)"/>
<rect x="934.5" y="808" width="2" height="49" fill="#333"/>
<rect x="889.7" y="813" width="39.8" height="12" rx="3" fill="#e3a12e"/>
<rect x="889.7" y="813" width="39.8" height="12" rx="3" fill="none" stroke="#000" stroke-opacity="0.18" stroke-width="1"/>
<text x="894.4" y="839.7" font-size="11.20" fill="#1e1e1e" textLength="35.9" lengthAdjust="spacingAndGlyphs" stroke="#1e1e1e" stroke-width="0.3">Orange</text>
<text x="894.4" y="851.6" font-size="11.20" fill="#1e1e1e" textLength="30.7" lengthAdjust="spacingAndGlyphs" stroke="#1e1e1e" stroke-width="0.3">Yellow</text>
<path d="M936.5 857 V812 Q936.5 808 940.5 808 H982.5 Q986.5 808 986.5 812 V857 Z" fill="url(#sbtn)"/>
<rect x="986.5" y="808" width="2" height="49" fill="#333"/>
<rect x="941.7" y="813.3" width="39.8" height="23.7" rx="3.2" fill="#333e99"/>
<rect x="941.7" y="813.3" width="39.8" height="23.7" rx="3.2" fill="none" stroke="#000" stroke-opacity="0.18" stroke-width="1"/>
<text x="961.5" y="851.8" font-size="11.20" fill="#1e1e1e" text-anchor="middle" textLength="21.4" lengthAdjust="spacingAndGlyphs" stroke="#1e1e1e" stroke-width="0.3">Blue</text>
<path d="M988.4 857 V812 Q988.4 808 992.4 808 H1034.4 Q1038.4 808 1038.4 812 V857 Z" fill="url(#sbtn)"/>
<rect x="1038.4" y="808" width="2" height="49" fill="#333"/>
<rect x="993.6" y="813.3" width="39.8" height="23.7" rx="3.2" fill="#469449"/>
<rect x="993.6" y="813.3" width="39.8" height="23.7" rx="3.2" fill="none" stroke="#000" stroke-opacity="0.18" stroke-width="1"/>
<text x="1013.4" y="851.8" font-size="11.20" fill="#1e1e1e" text-anchor="middle" textLength="29.7" lengthAdjust="spacingAndGlyphs" stroke="#1e1e1e" stroke-width="0.3">Green</text>
<path d="M1040.4 857 V812 Q1040.4 808 1044.4 808 H1086.4 Q1090.4 808 1090.4 812 V857 Z" fill="url(#sbtn)"/>
<rect x="1090.4" y="808" width="2" height="49" fill="#333"/>
<rect x="1045.6" y="813.3" width="39.8" height="23.7" rx="3.2" fill="#b0363c"/>
<rect x="1045.6" y="813.3" width="39.8" height="23.7" rx="3.2" fill="none" stroke="#000" stroke-opacity="0.18" stroke-width="1"/>
<text x="1065.4" y="851.8" font-size="11.20" fill="#1e1e1e" text-anchor="middle" textLength="19.6" lengthAdjust="spacingAndGlyphs" stroke="#1e1e1e" stroke-width="0.3">Red</text>
<path d="M1092.4 857 V812 Q1092.4 808 1096.4 808 H1138.4 Q1142.4 808 1142.4 812 V857 Z" fill="url(#sbtn)"/>
<rect x="1142.4" y="808" width="2" height="49" fill="#333"/>
<rect x="1097.6" y="813.3" width="39.8" height="23.7" rx="3.2" fill="#ecc71f"/>
<rect x="1097.6" y="813.3" width="39.8" height="23.7" rx="3.2" fill="none" stroke="#000" stroke-opacity="0.18" stroke-width="1"/>
<text x="1117.4" y="851.8" font-size="11.20" fill="#1e1e1e" text-anchor="middle" textLength="30.5" lengthAdjust="spacingAndGlyphs" stroke="#1e1e1e" stroke-width="0.3">Yellow</text>
<path d="M1144.3 857 V812 Q1144.3 808 1148.3 808 H1190.3 Q1194.3 808 1194.3 812 V857 Z" fill="url(#sbtn)"/>
<rect x="1194.3" y="808" width="2" height="49" fill="#333"/>
<rect x="1149.5" y="813.3" width="39.8" height="23.7" rx="3.2" fill="#bb5696"/>
<rect x="1149.5" y="813.3" width="39.8" height="23.7" rx="3.2" fill="none" stroke="#000" stroke-opacity="0.18" stroke-width="1"/>
<text x="1169.3" y="851.8" font-size="11.20" fill="#1e1e1e" text-anchor="middle" textLength="41.6" lengthAdjust="spacingAndGlyphs" stroke="#1e1e1e" stroke-width="0.3">Magenta</text>
<path d="M1196.3 857 V812 Q1196.3 808 1200.3 808 H1242.3 Q1246.3 808 1246.3 812 V857 Z" fill="url(#sbtn)"/>
<rect x="1246.3" y="808" width="2" height="49" fill="#333"/>
<rect x="1201.5" y="813.3" width="39.8" height="23.7" rx="3.2" fill="#0685a2"/>
<rect x="1201.5" y="813.3" width="39.8" height="23.7" rx="3.2" fill="none" stroke="#000" stroke-opacity="0.18" stroke-width="1"/>
<text x="1221.3" y="851.8" font-size="11.20" fill="#1e1e1e" text-anchor="middle" textLength="25.0" lengthAdjust="spacingAndGlyphs" stroke="#1e1e1e" stroke-width="0.3">Cyan</text>
<path d="M1248.3 857 V812 Q1248.3 808 1252.3 808 H1294.3 Q1298.3 808 1298.3 812 V857 Z" fill="url(#sbtn)"/>
<rect x="1298.3" y="808" width="2" height="49" fill="#333"/>
<rect x="1253.5" y="813.3" width="39.8" height="23.7" rx="3.2" fill="#ff0000"/>
<rect x="1253.5" y="813.3" width="39.8" height="23.7" rx="3.2" fill="none" stroke="#000" stroke-opacity="0.18" stroke-width="1"/>
<text x="1249.5" y="851.8" font-size="11.20" fill="#1e1e1e" textLength="52.3" lengthAdjust="spacingAndGlyphs" stroke="#1e1e1e" stroke-width="0.3">100% Red</text>
</g>
<rect x="0" y="857" width="1277" height="12" fill="#5a5a5a" />
<rect x="14" y="858" width="1020" height="10.5" rx="5" fill="#444"/>
<rect x="1.5" y="858" width="10.5" height="10.5" rx="2" fill="#7a7a7a"/>
<path d="M9.5 860 L4.5 863.3 L9.5 866.6 Z" fill="#4a4a4a"/>
<rect x="1265" y="858" width="10.5" height="10.5" rx="2" fill="#7a7a7a"/>
<path d="M1267.5 860 L1272.5 863.3 L1267.5 866.6 Z" fill="#4a4a4a"/>
<rect x="1276.5" y="804" width="323.5" height="66" fill="#2e2e2e" />
<path d="M1277.5 826 V812 Q1277.5 808 1281.5 808 H1321 Q1325 808 1325 812 V826 Z" fill="url(#cbtn)"/>
<ellipse cx="1301.5" cy="817" rx="7.5" ry="7.5" fill="url(#ccirc)"/>
<path d="M1297 819 L1301.5 814.2 L1306 819 Z" fill="#303030"/>
<rect x="1277.5" y="826.3" width="47.5" height="1" fill="#3a3a3a" />
<path d="M1277.5 827 H1325 V866 Q1325 869 1322 869 H1280.5 Q1277.5 869 1277.5 866 Z" fill="url(#cbtn)"/>
<rect x="1286" y="833" width="30" height="29.5" rx="3.5" fill="none" stroke="#2a2a2a" stroke-width="2.2"/>
<rect x="1287.2" y="834.2" width="27.6" height="13" fill="#ffffff" fill-opacity="0.12"/>
<rect x="1294" y="841" width="14" height="13.5" fill="#000"/>
<rect x="1294" y="841" width="14" height="7" fill="#222"/>
<path d="M1326 837.5 V812 Q1326 808 1330 808 H1372 V837.5 Z" fill="url(#cbtn)"/>
<ellipse cx="1349" cy="822.5" rx="10" ry="10" fill="url(#ccirc)"/>
<rect x="1345" y="818.5" width="8" height="8" fill="#303030"/>
<rect x="1373" y="808" width="44" height="29.5" fill="url(#cbtn)"/>
<ellipse cx="1395.0" cy="822.5" rx="10" ry="10" fill="url(#ccirc)"/>
<path d="M1391.5 818 L1399.5 822.8 L1391.5 827.6 Z" fill="#303030"/>
<rect x="1418" y="808" width="44" height="29.5" fill="url(#cbtn)"/>
<ellipse cx="1440.0" cy="822.5" rx="10" ry="10" fill="url(#ccirc)"/>
<text x="1440.0" y="826.5" font-size="11" font-weight="bold" fill="#303030" text-anchor="middle">[··]</text>
<rect x="1463" y="808" width="44" height="29.5" fill="url(#cbtn)"/>
<ellipse cx="1485.0" cy="822.5" rx="10" ry="10" fill="url(#ccirc)"/>
<path d="M1485.0 822.5 C1482.0 819 1477.0 819 1477.0 822.5 C1477.0 826 1482.0 826 1485.0 822.5 C1488.0 819 1493.0 819 1493.0 822.5 C1493.0 826 1488.0 826 1485.0 822.5 Z" fill="none" stroke="#303030" stroke-width="1.6"/>
<rect x="1507.5" y="808" width="44.5" height="29.5" fill="url(#cdark)"/>
<ellipse cx="1529.75" cy="822.5" rx="10" ry="10" fill="url(#ccircd)"/>
<path d="M1534.25 820 A5 5 0 0 0 1524.75 821.5 M1525.25 825 A5 5 0 0 0 1534.75 823.5" fill="none" stroke="#1a1a1a" stroke-width="2.2"/><path d="M1535.75 817.5 L1535.75 822 L1531.25 821 Z M1523.75 827.5 L1523.75 823 L1528.25 824 Z" fill="#1a1a1a"/>
<path d="M1553 808 H1594 Q1598 808 1598 812 V837.5 H1553 Z" fill="url(#cdark)"/>
<ellipse cx="1575.5" cy="822.5" rx="10" ry="10" fill="url(#ccircd)"/>
<rect x="1372" y="808" width="1" height="29.5" fill="#3a3a3a" />
<rect x="1417" y="808" width="1" height="29.5" fill="#3a3a3a" />
<rect x="1462" y="808" width="1" height="29.5" fill="#3a3a3a" />
<rect x="1326" y="837.5" width="272" height="1.5" fill="#2e2e2e" />
<path d="M1326 869 V843 Q1326 839 1330 839 H1462 V869 Z" fill="url(#cbtn)"/>
<path d="M1463 869 V839 H1594 Q1598 839 1598 843 V865 Q1598 869 1594 869 Z" fill="url(#cbtn)"/>
<rect x="1462" y="839" width="1" height="30" fill="#3a3a3a" />
<ellipse cx="1357" cy="854" rx="10" ry="10" fill="url(#ccirc)"/>
<path d="M1358.5 849.5 L1354 854 L1358.5 858.5 M1362.5 849.5 L1358 854 L1362.5 858.5" fill="none" stroke="#2a2a2a" stroke-width="1.4"/>
<ellipse cx="1569.5" cy="854" rx="10" ry="10" fill="url(#ccirc)"/>
<path d="M1566 849.5 L1570.5 854 L1566 858.5 M1570 849.5 L1574.5 854 L1570 858.5" fill="none" stroke="#2a2a2a" stroke-width="1.4"/>
<text x="1382.5" y="861.8" font-size="21.50" fill="#262626" textLength="55.0" lengthAdjust="spacingAndGlyphs" stroke="#262626" stroke-width="0.4">Back</text>
<text x="1491.0" y="861.8" font-size="21.50" fill="#262626" textLength="50.5" lengthAdjust="spacingAndGlyphs" stroke="#262626" stroke-width="0.4">Next</text>
</svg></body></html>
